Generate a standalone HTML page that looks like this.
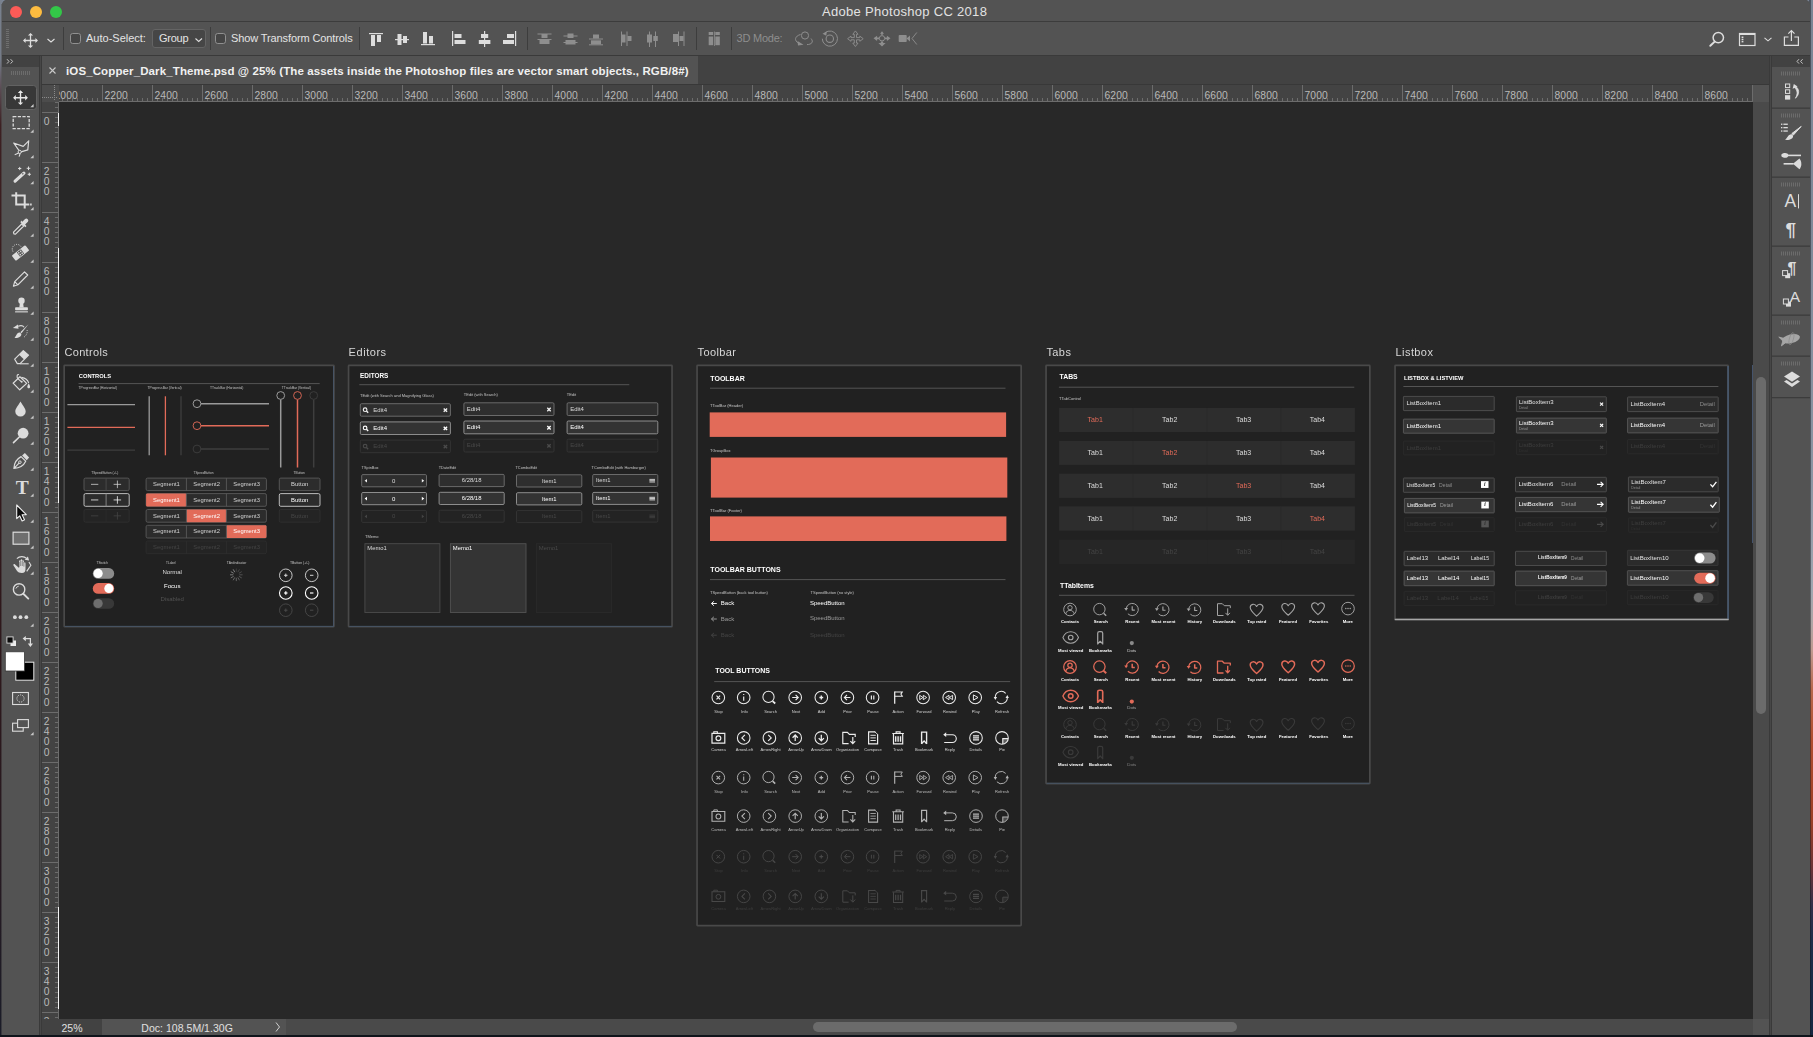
<!DOCTYPE html><html><head><meta charset="utf-8"><title>Adobe Photoshop CC 2018</title><style>
*{box-sizing:border-box;margin:0;padding:0}
html,body{width:1813px;height:1037px;overflow:hidden;background:#16202e;font-family:"Liberation Sans",sans-serif;}
.a{position:absolute}
#desk{position:absolute;left:0;top:0;width:1813px;height:1037px;
 background:linear-gradient(to bottom,#7a8494 0,#808a99 250px,#8c95a3 480px,#a0a6b0 590px,#b0a4a4 625px,#c09a90 650px,#b8684c 690px,#b04e30 740px,#9c4028 820px,#6a3438 870px,#33304a 905px,#1e2e4a 940px,#172842 1037px);}
#deskr{position:absolute;left:1809px;top:0;width:2px;height:1037px;background:rgba(20,24,32,0.45)}
#deskb{position:absolute;left:0;top:1035px;width:1813px;height:2px;background:#0f141b}
#deskl{position:absolute;left:0;top:0;width:2px;height:1035px;
 background:linear-gradient(to bottom,#79818e 0,#747b88 60px,#5a4a52 90px,#3c2022 125px,#34191b 400px,#2c181c 700px,#241a22 900px,#1a1c28 1035px);}
#desklb{position:absolute;left:1px;top:4px;width:1px;height:1031px;background:rgba(83,83,83,0.55)}
#win{position:absolute;left:2px;top:0;width:1807.5px;height:1035px;background:#535353;border-radius:5px 5px 0 0;overflow:hidden}
#win .in{position:absolute;left:-2px;top:0;width:1813px;height:1037px}
.t{position:absolute;white-space:nowrap;line-height:1}
svg{position:absolute;overflow:visible}
</style></head><body>
<div id="desk"></div><div id="deskr"></div><div id="deskb"></div><div id="deskl"></div><div id="desklb"></div><div id="win"><div class="in">
<div class="a" style="left:0px;top:0px;width:1813px;height:21px;background:#535353;"></div>
<div class="a" style="left:0px;top:21px;width:1813px;height:1px;background:#3c3c3c;"></div>
<div class="a" style="left:10px;top:6px;width:12px;height:12px;background:#fc5b57;border-radius:50%"></div>
<div class="a" style="left:30px;top:6px;width:12px;height:12px;background:#fdbc40;border-radius:50%"></div>
<div class="a" style="left:50px;top:6px;width:12px;height:12px;background:#33c748;border-radius:50%"></div>
<div class="t" style="left:822px;top:4.5px;font-size:13px;color:#e2e2e2;letter-spacing:0.3px">Adobe Photoshop CC 2018</div>
<div class="a" style="left:0px;top:22px;width:1813px;height:33px;background:#535353;"></div>
<div class="a" style="left:0px;top:55px;width:1813px;height:1px;background:#3a3a3a;"></div>
<svg style="left:0;top:0" width="1813" height="56" viewBox="0 0 1813 56"><rect x="6" y="29" width="3" height="1" fill="#6e6e6e"/><rect x="6" y="31" width="3" height="1" fill="#6e6e6e"/><rect x="6" y="33" width="3" height="1" fill="#6e6e6e"/><rect x="6" y="35" width="3" height="1" fill="#6e6e6e"/><rect x="6" y="37" width="3" height="1" fill="#6e6e6e"/><rect x="6" y="39" width="3" height="1" fill="#6e6e6e"/><rect x="6" y="41" width="3" height="1" fill="#6e6e6e"/><rect x="6" y="43" width="3" height="1" fill="#6e6e6e"/><rect x="6" y="45" width="3" height="1" fill="#6e6e6e"/><rect x="6" y="47" width="3" height="1" fill="#6e6e6e"/><path d="M24.0 40.5H37.0M30.5 34.0V47.0" stroke="#dddddd" stroke-width="1.3" fill="none"/><path d="M38.0 40.5L35.4 37.9L35.4 43.1ZM23.0 40.5L25.6 37.9L25.6 43.1ZM30.5 48.0L27.9 45.4L33.1 45.4ZM30.5 33.0L27.9 35.6L33.1 35.6Z" fill="#dddddd"/><path d="M47.5 39 L51 42 L54.5 39" stroke="#dddddd" stroke-width="1.1" fill="none"/><rect x="63" y="27" width="1" height="23" fill="#3d3d3d"/><rect x="210" y="27" width="1" height="23" fill="#3d3d3d"/><rect x="359" y="27" width="1" height="23" fill="#3d3d3d"/><rect x="527" y="27" width="1" height="23" fill="#3d3d3d"/><rect x="696" y="27" width="1" height="23" fill="#3d3d3d"/><rect x="731" y="27" width="1" height="23" fill="#3d3d3d"/><rect x="70.5" y="33.5" width="10" height="10" rx="2.2" fill="#454545" stroke="#909090" stroke-width="1"/><rect x="215.5" y="33.5" width="10" height="10" rx="2.2" fill="#454545" stroke="#909090" stroke-width="1"/><rect x="152.5" y="29.5" width="53" height="18" rx="2.5" fill="#464646" stroke="#646464" stroke-width="1"/><path d="M195.5 38.5 L198.7 41.5 L202 38.5" stroke="#dddddd" stroke-width="1.1" fill="none"/><rect x="369" y="33" width="14" height="1.2" fill="#dddddd"/><rect x="371" y="35" width="4" height="11" fill="#dddddd"/><rect x="377" y="35" width="4" height="7" fill="#dddddd"/><rect x="395" y="39" width="14" height="1.2" fill="#dddddd"/><rect x="397.5" y="34" width="4" height="11" fill="#dddddd"/><rect x="403" y="36" width="4" height="7" fill="#dddddd"/><rect x="421" y="44" width="14" height="1.2" fill="#dddddd"/><rect x="423" y="32" width="4" height="11.5" fill="#dddddd"/><rect x="429" y="36" width="4" height="7.5" fill="#dddddd"/><rect x="452" y="31" width="1.2" height="15" fill="#dddddd"/><rect x="454.5" y="34" width="7" height="4" fill="#dddddd"/><rect x="454.5" y="40" width="11" height="4" fill="#dddddd"/><rect x="484" y="31" width="1.2" height="16" fill="#dddddd"/><rect x="481" y="34" width="7.2" height="4" fill="#dddddd"/><rect x="478.8" y="40" width="11.6" height="4" fill="#dddddd"/><rect x="515" y="31" width="1.2" height="15" fill="#dddddd"/><rect x="507" y="34" width="7" height="4" fill="#dddddd"/><rect x="503" y="40" width="11" height="4" fill="#dddddd"/><rect x="537.5" y="33.5" width="14" height="1" fill="#8e8e8e"/><rect x="537.5" y="39" width="14" height="1" fill="#8e8e8e"/><rect x="541.5" y="34" width="6" height="4" fill="#8e8e8e"/><rect x="539.5" y="40" width="10" height="4" fill="#8e8e8e"/><rect x="563.5" y="35.5" width="14" height="1" fill="#8e8e8e"/><rect x="563.5" y="42" width="14" height="1" fill="#8e8e8e"/><rect x="567.5" y="33.5" width="6" height="4.5" fill="#8e8e8e"/><rect x="565.5" y="40" width="10" height="4.5" fill="#8e8e8e"/><rect x="589" y="38.5" width="14" height="1" fill="#8e8e8e"/><rect x="589" y="44.3" width="14" height="1" fill="#8e8e8e"/><rect x="593" y="34.5" width="6" height="4" fill="#8e8e8e"/><rect x="591" y="40.3" width="10" height="4" fill="#8e8e8e"/><rect x="621" y="31.5" width="1" height="14.5" fill="#8e8e8e"/><rect x="626.5" y="31.5" width="1" height="14.5" fill="#8e8e8e"/><rect x="621.5" y="34.5" width="4" height="8" fill="#8e8e8e"/><rect x="627.5" y="36" width="4" height="5" fill="#8e8e8e"/><rect x="649" y="31.5" width="1" height="15.5" fill="#8e8e8e"/><rect x="655" y="31.5" width="1" height="15.5" fill="#8e8e8e"/><rect x="647" y="34.5" width="5" height="8" fill="#8e8e8e"/><rect x="653.3" y="36" width="4.5" height="5" fill="#8e8e8e"/><rect x="678" y="31.5" width="1" height="14.5" fill="#8e8e8e"/><rect x="683.5" y="31.5" width="1" height="14.5" fill="#8e8e8e"/><rect x="673" y="34" width="5" height="8" fill="#8e8e8e"/><rect x="679.5" y="36" width="4" height="5" fill="#8e8e8e"/><rect x="708.7" y="32" width="4.5" height="3" fill="#8e8e8e"/><rect x="715.3" y="32" width="4.5" height="3" fill="#8e8e8e"/><rect x="708.7" y="36.5" width="4.5" height="8.7" fill="#8e8e8e"/><rect x="715.3" y="36.5" width="4.5" height="8.7" fill="#8e8e8e"/><rect x="714" y="31.5" width="0.8" height="14.5" fill="#8e8e8e"/><circle cx="805" cy="35.5" r="3.6" fill="none" stroke="#8e8e8e" stroke-width="1"/><path d="M800.5 34.5 C795 36 793.5 40.5 799 43.5 M807 44.6 C811.5 44.5 814 42 811 38.5" fill="none" stroke="#8e8e8e" stroke-width="1"/><path d="M797.5 41 L803.5 44.8 L798 45.5Z" fill="#8e8e8e"/><circle cx="829.8" cy="38.7" r="3.7" fill="none" stroke="#8e8e8e" stroke-width="1.1"/><path d="M825 32.8 A7.6 7.6 0 1 1 822.3 38.7" fill="none" stroke="#8e8e8e" stroke-width="1"/><path d="M822.5 33.8 L826.8 31.3 L826.3 35.8Z" fill="#8e8e8e"/><path d="M856.5 37.6L856.5 34.3L858.0 34.3L855.4 30.9L852.8 34.3L854.3 34.3L854.3 37.6L851.0 37.6L851.0 36.1L847.6 38.7L851.0 41.3L851.0 39.8L854.3 39.8L854.3 43.1L852.8 43.1L855.4 46.5L858.0 43.1L856.5 43.1L856.5 39.8L859.8 39.8L859.8 41.3L863.2 38.7L859.8 36.1L859.8 37.6Z" fill="none" stroke="#8e8e8e" stroke-width="0.9"/><circle cx="882" cy="38.3" r="2.7" fill="none" stroke="#8e8e8e" stroke-width="1"/><path d="M873.5 38.3 l3.6 -2.6 v1.7 h2 v1.8 h-2 v1.7Z M890.5 38.3 l-3.6 -2.6 v1.7 h-2 v1.8 h2 v1.7Z M882 31.2 l2 2.6 h-1.3 v1.2 h-1.4 v-1.2 h-1.3Z M882 46.5 l3.6 -3.4 h-2.4 v-1.6 h-2.4 v1.6 h-2.4Z" fill="#8e8e8e"/><rect x="898.7" y="35" width="8" height="7" rx="0.8" fill="#8e8e8e"/><path d="M906.5 38.5 L910 35.6 V41.4Z" fill="#8e8e8e"/><path d="M916.8 32.5 L912 38.5 L916.8 44.5" fill="none" stroke="#8e8e8e" stroke-width="0.9"/><circle cx="1718.3" cy="37.6" r="5.2" fill="none" stroke="#dddddd" stroke-width="1.5"/><path d="M1714.7 41.6 L1710.3 45.8" stroke="#dddddd" stroke-width="2" stroke-linecap="round"/><rect x="1739.5" y="33.5" width="15.5" height="12" fill="none" stroke="#dddddd" stroke-width="1.2"/><rect x="1739.5" y="33" width="15.5" height="2" fill="#dddddd"/><rect x="1741.6" y="36.5" width="1.8" height="1.5" fill="#dddddd"/><rect x="1741.6" y="38.7" width="1.8" height="1.5" fill="#dddddd"/><rect x="1741.6" y="40.9" width="1.8" height="1.5" fill="#dddddd"/><path d="M1764.5 37.8 L1768 40.8 L1771.5 37.8" stroke="#dddddd" stroke-width="1.1" fill="none"/><path d="M1788.5 37 H1784.4 V45.3 H1798.4 V37 H1794.3" fill="none" stroke="#dddddd" stroke-width="1.2"/><path d="M1791.4 41 V31 M1788.3 33.6 L1791.4 30.6 L1794.5 33.6" fill="none" stroke="#dddddd" stroke-width="1.2"/></svg>
<div class="t" style="left:86px;top:33px;font-size:11px;color:#e4e4e4;letter-spacing:0px">Auto-Select:</div>
<div class="t" style="left:159px;top:33px;font-size:11px;color:#e4e4e4;letter-spacing:-0.25px">Group</div>
<div class="t" style="left:231px;top:33px;font-size:11px;color:#e4e4e4;letter-spacing:-0.11px">Show Transform Controls</div>
<div class="t" style="left:736.5px;top:33px;font-size:11px;color:#8e8e8e;letter-spacing:-0.22px">3D Mode:</div>
<div class="a" style="left:0px;top:56px;width:1813px;height:29px;background:#424242;"></div>
<div class="a" style="left:42px;top:56px;width:656px;height:28px;background:#535353;"></div>
<div class="a" style="left:0px;top:84px;width:1813px;height:1px;background:#383838;"></div>
<div class="t" style="left:66px;top:66px;font-size:11.5px;color:#f0f0f0;font-weight:bold;letter-spacing:0.12px">iOS_Copper_Dark_Theme.psd @ 25% (The assets inside the Photoshop files are vector smart objects., RGB/8#)</div>
<svg style="left:48px;top:66px" width="9" height="9" viewBox="0 0 9 9"><path d="M1.5 1.5 L7.5 7.5 M7.5 1.5 L1.5 7.5" stroke="#c8c8c8" stroke-width="1.1" fill="none"/></svg>
<div class="a" style="left:42px;top:85px;width:1711px;height:934px;background:#282828;"></div>
<svg style="left:0;top:0" width="1813" height="1037" viewBox="0 0 1813 1037"><rect x="64.15" y="365.35" width="269.80" height="261.40" fill="#212121" stroke="#494949" stroke-width="1.7" rx="0.6"/><path d="M64.80 626.35L333.60 626.35" stroke="#46566a" stroke-width="0.9" fill="none"/><path d="M333.55 366.00L333.55 626.60" stroke="#46566a" stroke-width="0.9" fill="none"/><rect x="348.55" y="365.35" width="323.50" height="261.40" fill="#212121" stroke="#494949" stroke-width="1.7" rx="0.6"/><path d="M349.20 626.35L671.70 626.35" stroke="#46566a" stroke-width="0.9" fill="none"/><rect x="697.05" y="365.35" width="324.10" height="560.30" fill="#212121" stroke="#494949" stroke-width="1.7" rx="0.6"/><rect x="1046.05" y="365.35" width="323.80" height="418.30" fill="#212121" stroke="#494949" stroke-width="1.7" rx="0.6"/><path d="M1046.70 783.25L1369.50 783.25" stroke="#46566a" stroke-width="0.9" fill="none"/><rect x="1395.05" y="365.35" width="333.10" height="254.00" fill="#212121" stroke="#494949" stroke-width="1.7" rx="0.6"/><path d="M1728.10 366.00L1728.10 619.20" stroke="#46566a" stroke-width="1.8" fill="none"/><path d="M1394.70 619.50L1728.70 619.50" stroke="#a6a6a6" stroke-width="1.3" fill="none"/><path d="M78.50 383.60L319.70 383.60" stroke="#5a5a5a" stroke-width="0.9" fill="none"/><path d="M67.40 404.60L135.00 404.60" stroke="#9a9a9a" stroke-width="1.3" fill="none"/><path d="M67.40 427.40L135.00 427.40" stroke="#e26b59" stroke-width="1.3" fill="none"/><path d="M67.40 450.10L135.00 450.10" stroke="#3e3e3e" stroke-width="1.3" fill="none"/><path d="M149.20 396.30L149.20 455.30" stroke="#9a9a9a" stroke-width="1.3" fill="none"/><path d="M165.40 396.30L165.40 455.30" stroke="#e26b59" stroke-width="1.3" fill="none"/><path d="M181.00 396.30L181.00 455.30" stroke="#3e3e3e" stroke-width="1.3" fill="none"/><path d="M201.00 403.70L269.00 403.70" stroke="#9a9a9a" stroke-width="1.5" fill="none"/><circle cx="197.00" cy="403.70" r="3.9" fill="#212121" stroke="#a8a8a8" stroke-width="0.9"/><path d="M201.00 425.70L269.00 425.70" stroke="#e26b59" stroke-width="1.5" fill="none"/><circle cx="197.00" cy="425.70" r="3.9" fill="#212121" stroke="#e26b59" stroke-width="0.9"/><path d="M201.00 449.00L269.00 449.00" stroke="#3e3e3e" stroke-width="1.5" fill="none"/><circle cx="197.00" cy="449.00" r="3.9" fill="#212121" stroke="#3e3e3e" stroke-width="0.9"/><path d="M280.70 399.50L280.70 467.50" stroke="#9a9a9a" stroke-width="1.5" fill="none"/><circle cx="280.70" cy="395.50" r="3.9" fill="#212121" stroke="#a8a8a8" stroke-width="0.9"/><path d="M297.50 399.50L297.50 467.50" stroke="#e26b59" stroke-width="1.5" fill="none"/><circle cx="297.50" cy="395.50" r="3.9" fill="#212121" stroke="#e26b59" stroke-width="0.9"/><path d="M313.70 399.50L313.70 467.50" stroke="#3e3e3e" stroke-width="1.5" fill="none"/><circle cx="313.70" cy="395.50" r="3.9" fill="#212121" stroke="#3e3e3e" stroke-width="0.9"/><rect x="84.00" y="478.10" width="45.20" height="12.50" fill="#2c2c2c" stroke="#5a5a5a" stroke-width="0.9" rx="1.5"/><path d="M106.10 478.10L106.10 490.60" stroke="#4c4c4c" stroke-width="0.9" fill="none"/><path d="M91.00 484.35L98.30 484.35" stroke="#d8d8d8" stroke-width="0.75" fill="none"/><path d="M113.60 484.35L121.10 484.35" stroke="#d8d8d8" stroke-width="0.75" fill="none"/><path d="M117.40 480.55L117.40 488.15" stroke="#d8d8d8" stroke-width="0.75" fill="none"/><rect x="84.00" y="493.60" width="45.20" height="12.70" fill="#2c2c2c" stroke="#cccccc" stroke-width="0.9" rx="1.5"/><path d="M106.10 493.60L106.10 506.30" stroke="#8a8a8a" stroke-width="0.9" fill="none"/><path d="M91.00 499.95L98.30 499.95" stroke="#ffffff" stroke-width="0.75" fill="none"/><path d="M113.60 499.95L121.10 499.95" stroke="#ffffff" stroke-width="0.75" fill="none"/><path d="M117.40 496.15L117.40 503.75" stroke="#ffffff" stroke-width="0.75" fill="none"/><rect x="84.00" y="509.50" width="45.20" height="12.70" fill="#242424" stroke="#303030" stroke-width="0.9" rx="1.5"/><path d="M106.10 509.50L106.10 522.20" stroke="#2c2c2c" stroke-width="0.9" fill="none"/><path d="M91.00 515.85L98.30 515.85" stroke="#464646" stroke-width="0.75" fill="none"/><path d="M113.60 515.85L121.10 515.85" stroke="#464646" stroke-width="0.75" fill="none"/><path d="M117.40 512.05L117.40 519.65" stroke="#464646" stroke-width="0.75" fill="none"/><rect x="146.10" y="478.10" width="120.30" height="12.50" fill="#2c2c2c" stroke="#5a5a5a" stroke-width="0.9" rx="1.5"/><path d="M186.40 478.10L186.40 490.60" stroke="#5a5a5a" stroke-width="0.9" fill="none"/><path d="M226.40 478.10L226.40 490.60" stroke="#5a5a5a" stroke-width="0.9" fill="none"/><rect x="146.10" y="493.60" width="120.30" height="12.70" fill="#2c2c2c" stroke="#5a5a5a" stroke-width="0.9" rx="1.5"/><rect x="146.10" y="493.50" width="40.30" height="12.90" fill="#e26b59" rx="1"/><path d="M186.40 493.60L186.40 506.30" stroke="#5a5a5a" stroke-width="0.9" fill="none"/><path d="M226.40 493.60L226.40 506.30" stroke="#5a5a5a" stroke-width="0.9" fill="none"/><rect x="146.10" y="509.50" width="120.30" height="12.70" fill="#2c2c2c" stroke="#5a5a5a" stroke-width="0.9" rx="1.5"/><rect x="186.40" y="509.40" width="40.00" height="12.90" fill="#e26b59" rx="1"/><path d="M186.40 509.50L186.40 522.20" stroke="#5a5a5a" stroke-width="0.9" fill="none"/><path d="M226.40 509.50L226.40 522.20" stroke="#5a5a5a" stroke-width="0.9" fill="none"/><rect x="146.10" y="525.30" width="120.30" height="12.70" fill="#2c2c2c" stroke="#5a5a5a" stroke-width="0.9" rx="1.5"/><rect x="226.40" y="525.20" width="40.00" height="12.90" fill="#e26b59" rx="1"/><path d="M186.40 525.30L186.40 538.00" stroke="#5a5a5a" stroke-width="0.9" fill="none"/><path d="M226.40 525.30L226.40 538.00" stroke="#5a5a5a" stroke-width="0.9" fill="none"/><rect x="146.10" y="541.00" width="120.30" height="12.70" fill="#242424" stroke="#2e2e2e" stroke-width="0.9" rx="1.5"/><path d="M186.40 541.00L186.40 553.70" stroke="#2e2e2e" stroke-width="0.9" fill="none"/><path d="M226.40 541.00L226.40 553.70" stroke="#2e2e2e" stroke-width="0.9" fill="none"/><rect x="279.30" y="478.10" width="40.70" height="12.50" fill="#2c2c2c" stroke="#5a5a5a" stroke-width="0.9" rx="1.5"/><rect x="279.30" y="493.60" width="40.70" height="12.70" fill="#2c2c2c" stroke="#cccccc" stroke-width="0.9" rx="1.5"/><rect x="279.30" y="509.50" width="40.70" height="12.70" fill="#242424" stroke="#303030" stroke-width="0.9" rx="1.5"/><rect x="92.80" y="568.10" width="21.40" height="10.60" fill="#8c8c8c" rx="5.3"/><circle cx="98.10" cy="573.40" r="4.6" fill="#ffffff"/><rect x="92.80" y="583.10" width="21.40" height="10.60" fill="#e26b59" rx="5.3"/><circle cx="108.90" cy="588.40" r="4.6" fill="#ffffff"/><rect x="92.80" y="598.20" width="21.40" height="10.60" fill="#383838" rx="5.3"/><circle cx="98.10" cy="603.50" r="4.6" fill="#6e6e6e"/><path d="M236.30 571.80L236.30 568.50" stroke="#b0b0b0" stroke-width="0.8" opacity="0.25"/><path d="M237.80 572.20L239.45 569.34" stroke="#b0b0b0" stroke-width="0.8" opacity="0.30"/><path d="M238.90 573.30L241.76 571.65" stroke="#b0b0b0" stroke-width="0.8" opacity="0.36"/><path d="M239.30 574.80L242.60 574.80" stroke="#b0b0b0" stroke-width="0.8" opacity="0.41"/><path d="M238.90 576.30L241.76 577.95" stroke="#b0b0b0" stroke-width="0.8" opacity="0.47"/><path d="M237.80 577.40L239.45 580.26" stroke="#b0b0b0" stroke-width="0.8" opacity="0.52"/><path d="M236.30 577.80L236.30 581.10" stroke="#b0b0b0" stroke-width="0.8" opacity="0.58"/><path d="M234.80 577.40L233.15 580.26" stroke="#b0b0b0" stroke-width="0.8" opacity="0.63"/><path d="M233.70 576.30L230.84 577.95" stroke="#b0b0b0" stroke-width="0.8" opacity="0.69"/><path d="M233.30 574.80L230.00 574.80" stroke="#b0b0b0" stroke-width="0.8" opacity="0.74"/><path d="M233.70 573.30L230.84 571.65" stroke="#b0b0b0" stroke-width="0.8" opacity="0.80"/><path d="M234.80 572.20L233.15 569.34" stroke="#b0b0b0" stroke-width="0.8" opacity="0.85"/><circle cx="285.80" cy="575.30" r="6.3" fill="none" stroke="#d8d8d8" stroke-width="0.9"/><path d="M284.10 575.30L287.50 575.30" stroke="#d8d8d8" stroke-width="1.0" fill="none"/><path d="M285.80 573.60L285.80 577.00" stroke="#d8d8d8" stroke-width="1.0" fill="none"/><circle cx="311.70" cy="575.30" r="6.3" fill="none" stroke="#d8d8d8" stroke-width="0.9"/><path d="M310.00 575.30L313.40 575.30" stroke="#d8d8d8" stroke-width="1.0" fill="none"/><circle cx="285.80" cy="593.00" r="6.3" fill="none" stroke="#ffffff" stroke-width="1.1"/><path d="M284.10 593.00L287.50 593.00" stroke="#ffffff" stroke-width="1.2" fill="none"/><path d="M285.80 591.30L285.80 594.70" stroke="#ffffff" stroke-width="1.2" fill="none"/><circle cx="311.70" cy="593.00" r="6.3" fill="none" stroke="#ffffff" stroke-width="1.1"/><path d="M310.00 593.00L313.40 593.00" stroke="#ffffff" stroke-width="1.2" fill="none"/><circle cx="285.80" cy="610.20" r="6.3" fill="none" stroke="#4a4a4a" stroke-width="0.9"/><path d="M284.10 610.20L287.50 610.20" stroke="#4a4a4a" stroke-width="1.0" fill="none"/><path d="M285.80 608.50L285.80 611.90" stroke="#4a4a4a" stroke-width="1.0" fill="none"/><circle cx="311.70" cy="610.20" r="6.3" fill="none" stroke="#4a4a4a" stroke-width="0.9"/><path d="M310.00 610.20L313.40 610.20" stroke="#4a4a4a" stroke-width="1.0" fill="none"/><path d="M359.30 384.70L629.30 384.70" stroke="#5a5a5a" stroke-width="0.9" fill="none"/><rect x="360.30" y="403.70" width="90.10" height="12.50" fill="#2e2e2e" stroke="#727272" stroke-width="0.9" rx="1.2"/><circle cx="365.10" cy="409.65" r="1.8" fill="none" stroke="#f0f0f0" stroke-width="1.15"/><path d="M366.50 411.05L368.20 412.75" stroke="#f0f0f0" stroke-width="1.4" fill="none"/><path d="M443.70 408.45L447.10 411.85M447.10 408.45L443.70 411.85" fill="none" stroke="#f0f0f0" stroke-width="1.35" /><rect x="463.90" y="402.80" width="90.10" height="12.70" fill="#2e2e2e" stroke="#727272" stroke-width="0.9" rx="1.2"/><path d="M547.30 407.75L550.70 411.15M550.70 407.75L547.30 411.15" fill="none" stroke="#f0f0f0" stroke-width="1.35" /><rect x="567.10" y="402.80" width="90.70" height="12.70" fill="#2e2e2e" stroke="#727272" stroke-width="0.9" rx="1.2"/><rect x="360.30" y="421.90" width="90.10" height="12.60" fill="#333333" stroke="#989898" stroke-width="0.9" rx="1.2"/><circle cx="365.10" cy="427.90" r="1.8" fill="none" stroke="#ffffff" stroke-width="1.15"/><path d="M366.50 429.30L368.20 431.00" stroke="#ffffff" stroke-width="1.4" fill="none"/><path d="M443.70 426.70L447.10 430.10M447.10 426.70L443.70 430.10" fill="none" stroke="#ffffff" stroke-width="1.35" /><rect x="463.90" y="421.00" width="90.10" height="12.80" fill="#333333" stroke="#989898" stroke-width="0.9" rx="1.2"/><path d="M547.30 426.00L550.70 429.40M550.70 426.00L547.30 429.40" fill="none" stroke="#ffffff" stroke-width="1.35" /><rect x="567.10" y="421.00" width="90.70" height="12.80" fill="#333333" stroke="#989898" stroke-width="0.9" rx="1.2"/><rect x="360.30" y="440.10" width="90.10" height="12.60" fill="#232323" stroke="#363636" stroke-width="0.9" rx="1.2"/><circle cx="365.10" cy="446.10" r="1.8" fill="none" stroke="#4a4a4a" stroke-width="1.15"/><path d="M366.50 447.50L368.20 449.20" stroke="#4a4a4a" stroke-width="1.4" fill="none"/><path d="M443.70 444.90L447.10 448.30M447.10 444.90L443.70 448.30" fill="none" stroke="#4a4a4a" stroke-width="1.35" /><rect x="463.90" y="439.20" width="90.10" height="12.80" fill="#232323" stroke="#363636" stroke-width="0.9" rx="1.2"/><path d="M547.30 444.20L550.70 447.60M550.70 444.20L547.30 447.60" fill="none" stroke="#4a4a4a" stroke-width="1.35" /><rect x="567.10" y="439.20" width="90.70" height="12.80" fill="#232323" stroke="#363636" stroke-width="0.9" rx="1.2"/><rect x="361.70" y="474.60" width="64.80" height="12.20" fill="#2e2e2e" stroke="#727272" stroke-width="0.9" rx="1.2"/><path d="M364.60 480.70L367.00 478.90V482.50Z" fill="#f0f0f0" /><path d="M424.20 480.70L421.80 478.90V482.50Z" fill="#f0f0f0" /><rect x="439.10" y="474.40" width="65.10" height="12.20" fill="#2e2e2e" stroke="#727272" stroke-width="0.9" rx="1.2"/><rect x="516.50" y="474.80" width="65.30" height="12.20" fill="#2e2e2e" stroke="#727272" stroke-width="0.9" rx="1.2"/><rect x="592.70" y="474.50" width="65.10" height="12.00" fill="#2e2e2e" stroke="#727272" stroke-width="0.9" rx="1.2"/><path d="M649.40 479.40L655.00 479.40" stroke="#f0f0f0" stroke-width="0.8" fill="none"/><path d="M649.40 480.70L655.00 480.70" stroke="#f0f0f0" stroke-width="0.8" fill="none"/><path d="M649.40 482.00L655.00 482.00" stroke="#f0f0f0" stroke-width="0.8" fill="none"/><rect x="361.70" y="492.50" width="64.80" height="12.20" fill="#333333" stroke="#989898" stroke-width="0.9" rx="1.2"/><path d="M364.60 498.60L367.00 496.80V500.40Z" fill="#ffffff" /><path d="M424.20 498.60L421.80 496.80V500.40Z" fill="#ffffff" /><rect x="439.10" y="492.30" width="65.10" height="12.20" fill="#333333" stroke="#989898" stroke-width="0.9" rx="1.2"/><rect x="516.50" y="492.70" width="65.30" height="12.20" fill="#333333" stroke="#989898" stroke-width="0.9" rx="1.2"/><rect x="592.70" y="492.40" width="65.10" height="12.00" fill="#333333" stroke="#989898" stroke-width="0.9" rx="1.2"/><path d="M649.40 497.30L655.00 497.30" stroke="#ffffff" stroke-width="0.8" fill="none"/><path d="M649.40 498.60L655.00 498.60" stroke="#ffffff" stroke-width="0.8" fill="none"/><path d="M649.40 499.90L655.00 499.90" stroke="#ffffff" stroke-width="0.8" fill="none"/><rect x="361.70" y="510.40" width="64.80" height="12.00" fill="#232323" stroke="#363636" stroke-width="0.9" rx="1.2"/><path d="M364.60 516.40L367.00 514.60V518.20Z" fill="#444444" /><path d="M424.20 516.40L421.80 514.60V518.20Z" fill="#444444" /><rect x="439.10" y="510.20" width="65.10" height="12.00" fill="#232323" stroke="#363636" stroke-width="0.9" rx="1.2"/><rect x="516.50" y="510.60" width="65.30" height="12.00" fill="#232323" stroke="#363636" stroke-width="0.9" rx="1.2"/><rect x="592.70" y="510.30" width="65.10" height="11.80" fill="#232323" stroke="#363636" stroke-width="0.9" rx="1.2"/><path d="M649.40 515.10L655.00 515.10" stroke="#444444" stroke-width="0.8" fill="none"/><path d="M649.40 516.40L655.00 516.40" stroke="#444444" stroke-width="0.8" fill="none"/><path d="M649.40 517.70L655.00 517.70" stroke="#444444" stroke-width="0.8" fill="none"/><rect x="364.90" y="543.70" width="75.00" height="68.80" fill="#2b2b2b" stroke="#4c4c4c" stroke-width="0.9"/><rect x="450.40" y="543.70" width="75.60" height="68.80" fill="#343434" stroke="#525252" stroke-width="0.9"/><rect x="536.40" y="543.70" width="75.00" height="68.80" fill="#232323" stroke="#2a2a2a" stroke-width="0.9"/><path d="M710.00 388.20L1005.50 388.20" stroke="#5a5a5a" stroke-width="0.9" fill="none"/><rect x="709.70" y="412.40" width="296.40" height="24.50" fill="#e26b59"/><rect x="710.90" y="457.50" width="296.40" height="40.10" fill="#e26b59"/><rect x="710.00" y="516.40" width="296.40" height="24.60" fill="#e26b59"/><path d="M710.00 579.60L1005.50 579.60" stroke="#5a5a5a" stroke-width="0.9" fill="none"/><path d="M716.8 603.50H711.6M713.9 601.30L711.4 603.50L713.9 605.70" fill="none" stroke="#ffffff" stroke-width="0.95" /><path d="M716.8 619.00H711.6M713.9 616.80L711.4 619.00L713.9 621.20" fill="none" stroke="#9a9a9a" stroke-width="0.95" /><path d="M716.8 635.20H711.6M713.9 633.00L711.4 635.20L713.9 637.40" fill="none" stroke="#444444" stroke-width="0.95" /><path d="M714.20 681.60L1010.20 681.60" stroke="#5a5a5a" stroke-width="0.9" fill="none"/><circle cx="718.30" cy="697.50" r="6.3" fill="none" stroke="#ececec" stroke-width="1.05"/><path d="M-1.8 -1.8L1.8 1.8M1.8 -1.8L-1.8 1.8" fill="none" stroke="#ececec" stroke-width="1.1550000000000002" transform="translate(718.30,697.50)"/><circle cx="743.70" cy="697.50" r="6.3" fill="none" stroke="#ececec" stroke-width="1.05"/><path d="M0 -1V3.2" fill="none" stroke="#ececec" stroke-width="1.1550000000000002" transform="translate(743.70,697.50)"/><path d="M0 -3.4V-2.4" fill="none" stroke="#ececec" stroke-width="1.1550000000000002" transform="translate(743.70,697.50)"/><circle cx="768.50" cy="696.90" r="5.6" fill="none" stroke="#ececec" stroke-width="1.05"/><path d="M3.2 3.6L5.8 6" fill="none" stroke="#ececec" stroke-width="1.785" transform="translate(769.40,697.50)"/><circle cx="795.20" cy="697.50" r="6.3" fill="none" stroke="#ececec" stroke-width="1.05"/><path d="M-3 0H2.8M0.4 -2.6L3 0L0.4 2.6" fill="none" stroke="#ececec" stroke-width="1.1550000000000002" transform="translate(795.20,697.50)"/><circle cx="821.30" cy="697.50" r="6.3" fill="none" stroke="#ececec" stroke-width="1.05"/><path d="M-1.9 0H1.9M0 -1.9V1.9" fill="none" stroke="#ececec" stroke-width="1.3650000000000002" transform="translate(821.30,697.50)"/><circle cx="847.40" cy="697.50" r="6.3" fill="none" stroke="#ececec" stroke-width="1.05"/><path d="M3 0H-2.8M-0.4 -2.6L-3 0L-0.4 2.6" fill="none" stroke="#ececec" stroke-width="1.1550000000000002" transform="translate(847.40,697.50)"/><circle cx="872.60" cy="697.50" r="6.3" fill="none" stroke="#ececec" stroke-width="1.05"/><path d="M-1.2 -1.9V1.9M1.2 -1.9V1.9" fill="none" stroke="#ececec" stroke-width="1.1550000000000002" transform="translate(872.60,697.50)"/><path d="M-3.4 -6V6.2" fill="none" stroke="#ececec" stroke-width="1.26" transform="translate(898.10,697.50)"/><path d="M-3.4 -5.6H4.2L2.8 -3.4L4.2 -1.2H-3.4" fill="none" stroke="#ececec" stroke-width="1.05" transform="translate(898.10,697.50)"/><circle cx="923.10" cy="697.50" r="6.3" fill="none" stroke="#ececec" stroke-width="1.05"/><path d="M-3.4 -2.2L-0.2 0L-3.4 2.2ZM0.2 -2.2L3.6 0L0.2 2.2Z" fill="none" stroke="#ececec" stroke-width="0.9450000000000001" transform="translate(923.10,697.50)"/><circle cx="949.20" cy="697.50" r="6.3" fill="none" stroke="#ececec" stroke-width="1.05"/><path d="M3.4 -2.2L0.2 0L3.4 2.2ZM-0.2 -2.2L-3.6 0L-0.2 2.2Z" fill="none" stroke="#ececec" stroke-width="0.9450000000000001" transform="translate(949.20,697.50)"/><circle cx="975.20" cy="697.50" r="6.3" fill="none" stroke="#ececec" stroke-width="1.05"/><path d="M-1.8 -2.6L2.8 0L-1.8 2.6Z" fill="none" stroke="#ececec" stroke-width="0.9974999999999999" transform="translate(975.20,697.50)"/><path d="M-6 0.4A6 6 0 0 1 4.4 -4.2M6 -0.4A6 6 0 0 1 -4.4 4.2" fill="none" stroke="#ececec" stroke-width="1.05" transform="translate(1001.30,697.50)"/><path d="M-7.6 -0.6L-6 2.4L-4.2 -0.6ZM7.6 0.6L6 -2.4L4.2 0.6Z" fill="#ececec" transform="translate(1001.30,697.50)"/><path d="M-6.4 -4.6H6.4V5.2H-6.4Z" fill="none" stroke="#ececec" stroke-width="1.2075" transform="translate(718.40,737.90)"/><path d="M-4.6 -4.8V-6.2H-1V-4.8" fill="none" stroke="#ececec" stroke-width="1.05" transform="translate(718.40,737.90)"/><circle cx="718.40" cy="738.30" r="2.4" fill="none" stroke="#ececec" stroke-width="1.1550000000000002"/><circle cx="743.70" cy="737.90" r="6.3" fill="none" stroke="#ececec" stroke-width="1.05"/><path d="M1.2 -3L-1.8 0L1.2 3" fill="none" stroke="#ececec" stroke-width="1.2075" transform="translate(743.70,737.90)"/><circle cx="769.40" cy="737.90" r="6.3" fill="none" stroke="#ececec" stroke-width="1.05"/><path d="M-1.2 -3L1.8 0L-1.2 3" fill="none" stroke="#ececec" stroke-width="1.2075" transform="translate(769.40,737.90)"/><circle cx="795.20" cy="737.90" r="6.3" fill="none" stroke="#ececec" stroke-width="1.05"/><path d="M0 3.2V-2.6M-2.6 -0.2L0 -2.9L2.6 -0.2" fill="none" stroke="#ececec" stroke-width="1.26" transform="translate(795.20,737.90)"/><circle cx="821.30" cy="737.90" r="6.3" fill="none" stroke="#ececec" stroke-width="1.05"/><path d="M0 -3.2V2.6M-2.6 0.2L0 2.9L2.6 0.2" fill="none" stroke="#ececec" stroke-width="1.26" transform="translate(821.30,737.90)"/><path d="M-0.2 5.8H-6V-5.6H-1.4L0.6 -3.6H6.4V-1" fill="none" stroke="#ececec" stroke-width="1.1550000000000002" transform="translate(848.80,737.90)"/><path d="M4 -1V5.4M1.6 3.2L4 5.8L6.4 3.2" fill="none" stroke="#ececec" stroke-width="1.1550000000000002" transform="translate(848.80,737.90)"/><path d="M2.4 -6H-4.4V6H4.6V-3.6" fill="none" stroke="#ececec" stroke-width="1.2075" transform="translate(873.00,737.90)"/><path d="M1.6 -6.2L4.8 -3.4" fill="none" stroke="#ececec" stroke-width="0.8400000000000001" transform="translate(873.00,737.90)"/><path d="M-2.6 -2.6H2.8M-2.6 0H2.8M-2.6 2.6H2.8" fill="none" stroke="#ececec" stroke-width="0.9450000000000001" transform="translate(873.00,737.90)"/><path d="M-5.8 -4.4H5.8M-2 -4.6V-6H2V-4.6" fill="none" stroke="#ececec" stroke-width="1.1550000000000002" transform="translate(898.10,737.90)"/><path d="M-4.6 -4.2V6H4.6V-4.2" fill="none" stroke="#ececec" stroke-width="1.2075" transform="translate(898.10,737.90)"/><path d="M-2.4 -1.6V3.8M0 -1.6V3.8M2.4 -1.6V3.8" fill="none" stroke="#ececec" stroke-width="1.3650000000000002" transform="translate(898.10,737.90)"/><path d="M-2.5 6.2V-5.8H2.5V6.2M-2.5 5.8L0 3L2.5 5.8" fill="none" stroke="#ececec" stroke-width="1.3650000000000002" transform="translate(924.10,737.90)"/><path d="M-4.6 -3.2H2.4A3.9 3.9 0 0 1 2.4 4.6H-5.8" fill="none" stroke="#ececec" stroke-width="1.1025" transform="translate(950.00,737.90)"/><path d="M-6.8 -3.2L-3.8 -5.6V-0.8Z" fill="#ececec" transform="translate(950.00,737.90)"/><circle cx="976.00" cy="737.90" r="6.3" fill="none" stroke="#ececec" stroke-width="1.05"/><path d="M-3 -2H3M-3 0H3M-3 2H3" fill="none" stroke="#ececec" stroke-width="1.3125" transform="translate(976.00,737.90)"/><circle cx="1002.00" cy="737.90" r="6.3" fill="none" stroke="#ececec" stroke-width="1.05"/><path d="M0.8 6.2V0.8H6.2" fill="none" stroke="#ececec" stroke-width="1.1550000000000002" transform="translate(1002.00,737.90)"/><path d="M0.8 0.8H6.2A6.3 6.3 0 0 1 0.8 6.2Z" fill="#ececec" opacity="0.3" transform="translate(1002.00,737.90)"/><circle cx="718.30" cy="777.60" r="6.3" fill="none" stroke="#b4b4b4" stroke-width="0.95"/><path d="M-1.8 -1.8L1.8 1.8M1.8 -1.8L-1.8 1.8" fill="none" stroke="#b4b4b4" stroke-width="1.045" transform="translate(718.30,777.60)"/><circle cx="743.70" cy="777.60" r="6.3" fill="none" stroke="#b4b4b4" stroke-width="0.95"/><path d="M0 -1V3.2" fill="none" stroke="#b4b4b4" stroke-width="1.045" transform="translate(743.70,777.60)"/><path d="M0 -3.4V-2.4" fill="none" stroke="#b4b4b4" stroke-width="1.045" transform="translate(743.70,777.60)"/><circle cx="768.50" cy="777.00" r="5.6" fill="none" stroke="#b4b4b4" stroke-width="0.95"/><path d="M3.2 3.6L5.8 6" fill="none" stroke="#b4b4b4" stroke-width="1.615" transform="translate(769.40,777.60)"/><circle cx="795.20" cy="777.60" r="6.3" fill="none" stroke="#b4b4b4" stroke-width="0.95"/><path d="M-3 0H2.8M0.4 -2.6L3 0L0.4 2.6" fill="none" stroke="#b4b4b4" stroke-width="1.045" transform="translate(795.20,777.60)"/><circle cx="821.30" cy="777.60" r="6.3" fill="none" stroke="#b4b4b4" stroke-width="0.95"/><path d="M-1.9 0H1.9M0 -1.9V1.9" fill="none" stroke="#b4b4b4" stroke-width="1.2349999999999999" transform="translate(821.30,777.60)"/><circle cx="847.40" cy="777.60" r="6.3" fill="none" stroke="#b4b4b4" stroke-width="0.95"/><path d="M3 0H-2.8M-0.4 -2.6L-3 0L-0.4 2.6" fill="none" stroke="#b4b4b4" stroke-width="1.045" transform="translate(847.40,777.60)"/><circle cx="872.60" cy="777.60" r="6.3" fill="none" stroke="#b4b4b4" stroke-width="0.95"/><path d="M-1.2 -1.9V1.9M1.2 -1.9V1.9" fill="none" stroke="#b4b4b4" stroke-width="1.045" transform="translate(872.60,777.60)"/><path d="M-3.4 -6V6.2" fill="none" stroke="#b4b4b4" stroke-width="1.14" transform="translate(898.10,777.60)"/><path d="M-3.4 -5.6H4.2L2.8 -3.4L4.2 -1.2H-3.4" fill="none" stroke="#b4b4b4" stroke-width="0.95" transform="translate(898.10,777.60)"/><circle cx="923.10" cy="777.60" r="6.3" fill="none" stroke="#b4b4b4" stroke-width="0.95"/><path d="M-3.4 -2.2L-0.2 0L-3.4 2.2ZM0.2 -2.2L3.6 0L0.2 2.2Z" fill="none" stroke="#b4b4b4" stroke-width="0.855" transform="translate(923.10,777.60)"/><circle cx="949.20" cy="777.60" r="6.3" fill="none" stroke="#b4b4b4" stroke-width="0.95"/><path d="M3.4 -2.2L0.2 0L3.4 2.2ZM-0.2 -2.2L-3.6 0L-0.2 2.2Z" fill="none" stroke="#b4b4b4" stroke-width="0.855" transform="translate(949.20,777.60)"/><circle cx="975.20" cy="777.60" r="6.3" fill="none" stroke="#b4b4b4" stroke-width="0.95"/><path d="M-1.8 -2.6L2.8 0L-1.8 2.6Z" fill="none" stroke="#b4b4b4" stroke-width="0.9025" transform="translate(975.20,777.60)"/><path d="M-6 0.4A6 6 0 0 1 4.4 -4.2M6 -0.4A6 6 0 0 1 -4.4 4.2" fill="none" stroke="#b4b4b4" stroke-width="0.95" transform="translate(1001.30,777.60)"/><path d="M-7.6 -0.6L-6 2.4L-4.2 -0.6ZM7.6 0.6L6 -2.4L4.2 0.6Z" fill="#b4b4b4" transform="translate(1001.30,777.60)"/><path d="M-6.4 -4.6H6.4V5.2H-6.4Z" fill="none" stroke="#b4b4b4" stroke-width="1.0924999999999998" transform="translate(718.40,816.10)"/><path d="M-4.6 -4.8V-6.2H-1V-4.8" fill="none" stroke="#b4b4b4" stroke-width="0.95" transform="translate(718.40,816.10)"/><circle cx="718.40" cy="816.50" r="2.4" fill="none" stroke="#b4b4b4" stroke-width="1.045"/><circle cx="743.70" cy="816.10" r="6.3" fill="none" stroke="#b4b4b4" stroke-width="0.95"/><path d="M1.2 -3L-1.8 0L1.2 3" fill="none" stroke="#b4b4b4" stroke-width="1.0924999999999998" transform="translate(743.70,816.10)"/><circle cx="769.40" cy="816.10" r="6.3" fill="none" stroke="#b4b4b4" stroke-width="0.95"/><path d="M-1.2 -3L1.8 0L-1.2 3" fill="none" stroke="#b4b4b4" stroke-width="1.0924999999999998" transform="translate(769.40,816.10)"/><circle cx="795.20" cy="816.10" r="6.3" fill="none" stroke="#b4b4b4" stroke-width="0.95"/><path d="M0 3.2V-2.6M-2.6 -0.2L0 -2.9L2.6 -0.2" fill="none" stroke="#b4b4b4" stroke-width="1.14" transform="translate(795.20,816.10)"/><circle cx="821.30" cy="816.10" r="6.3" fill="none" stroke="#b4b4b4" stroke-width="0.95"/><path d="M0 -3.2V2.6M-2.6 0.2L0 2.9L2.6 0.2" fill="none" stroke="#b4b4b4" stroke-width="1.14" transform="translate(821.30,816.10)"/><path d="M-0.2 5.8H-6V-5.6H-1.4L0.6 -3.6H6.4V-1" fill="none" stroke="#b4b4b4" stroke-width="1.045" transform="translate(848.80,816.10)"/><path d="M4 -1V5.4M1.6 3.2L4 5.8L6.4 3.2" fill="none" stroke="#b4b4b4" stroke-width="1.045" transform="translate(848.80,816.10)"/><path d="M2.4 -6H-4.4V6H4.6V-3.6" fill="none" stroke="#b4b4b4" stroke-width="1.0924999999999998" transform="translate(873.00,816.10)"/><path d="M1.6 -6.2L4.8 -3.4" fill="none" stroke="#b4b4b4" stroke-width="0.76" transform="translate(873.00,816.10)"/><path d="M-2.6 -2.6H2.8M-2.6 0H2.8M-2.6 2.6H2.8" fill="none" stroke="#b4b4b4" stroke-width="0.855" transform="translate(873.00,816.10)"/><path d="M-5.8 -4.4H5.8M-2 -4.6V-6H2V-4.6" fill="none" stroke="#b4b4b4" stroke-width="1.045" transform="translate(898.10,816.10)"/><path d="M-4.6 -4.2V6H4.6V-4.2" fill="none" stroke="#b4b4b4" stroke-width="1.0924999999999998" transform="translate(898.10,816.10)"/><path d="M-2.4 -1.6V3.8M0 -1.6V3.8M2.4 -1.6V3.8" fill="none" stroke="#b4b4b4" stroke-width="1.2349999999999999" transform="translate(898.10,816.10)"/><path d="M-2.5 6.2V-5.8H2.5V6.2M-2.5 5.8L0 3L2.5 5.8" fill="none" stroke="#b4b4b4" stroke-width="1.2349999999999999" transform="translate(924.10,816.10)"/><path d="M-4.6 -3.2H2.4A3.9 3.9 0 0 1 2.4 4.6H-5.8" fill="none" stroke="#b4b4b4" stroke-width="0.9974999999999999" transform="translate(950.00,816.10)"/><path d="M-6.8 -3.2L-3.8 -5.6V-0.8Z" fill="#b4b4b4" transform="translate(950.00,816.10)"/><circle cx="976.00" cy="816.10" r="6.3" fill="none" stroke="#b4b4b4" stroke-width="0.95"/><path d="M-3 -2H3M-3 0H3M-3 2H3" fill="none" stroke="#b4b4b4" stroke-width="1.1875" transform="translate(976.00,816.10)"/><circle cx="1002.00" cy="816.10" r="6.3" fill="none" stroke="#b4b4b4" stroke-width="0.95"/><path d="M0.8 6.2V0.8H6.2" fill="none" stroke="#b4b4b4" stroke-width="1.045" transform="translate(1002.00,816.10)"/><path d="M0.8 0.8H6.2A6.3 6.3 0 0 1 0.8 6.2Z" fill="#b4b4b4" opacity="0.3" transform="translate(1002.00,816.10)"/><circle cx="718.30" cy="856.70" r="6.3" fill="none" stroke="#484848" stroke-width="0.9"/><path d="M-1.8 -1.8L1.8 1.8M1.8 -1.8L-1.8 1.8" fill="none" stroke="#484848" stroke-width="0.9900000000000001" transform="translate(718.30,856.70)"/><circle cx="743.70" cy="856.70" r="6.3" fill="none" stroke="#484848" stroke-width="0.9"/><path d="M0 -1V3.2" fill="none" stroke="#484848" stroke-width="0.9900000000000001" transform="translate(743.70,856.70)"/><path d="M0 -3.4V-2.4" fill="none" stroke="#484848" stroke-width="0.9900000000000001" transform="translate(743.70,856.70)"/><circle cx="768.50" cy="856.10" r="5.6" fill="none" stroke="#484848" stroke-width="0.9"/><path d="M3.2 3.6L5.8 6" fill="none" stroke="#484848" stroke-width="1.53" transform="translate(769.40,856.70)"/><circle cx="795.20" cy="856.70" r="6.3" fill="none" stroke="#484848" stroke-width="0.9"/><path d="M-3 0H2.8M0.4 -2.6L3 0L0.4 2.6" fill="none" stroke="#484848" stroke-width="0.9900000000000001" transform="translate(795.20,856.70)"/><circle cx="821.30" cy="856.70" r="6.3" fill="none" stroke="#484848" stroke-width="0.9"/><path d="M-1.9 0H1.9M0 -1.9V1.9" fill="none" stroke="#484848" stroke-width="1.1700000000000002" transform="translate(821.30,856.70)"/><circle cx="847.40" cy="856.70" r="6.3" fill="none" stroke="#484848" stroke-width="0.9"/><path d="M3 0H-2.8M-0.4 -2.6L-3 0L-0.4 2.6" fill="none" stroke="#484848" stroke-width="0.9900000000000001" transform="translate(847.40,856.70)"/><circle cx="872.60" cy="856.70" r="6.3" fill="none" stroke="#484848" stroke-width="0.9"/><path d="M-1.2 -1.9V1.9M1.2 -1.9V1.9" fill="none" stroke="#484848" stroke-width="0.9900000000000001" transform="translate(872.60,856.70)"/><path d="M-3.4 -6V6.2" fill="none" stroke="#484848" stroke-width="1.08" transform="translate(898.10,856.70)"/><path d="M-3.4 -5.6H4.2L2.8 -3.4L4.2 -1.2H-3.4" fill="none" stroke="#484848" stroke-width="0.9" transform="translate(898.10,856.70)"/><circle cx="923.10" cy="856.70" r="6.3" fill="none" stroke="#484848" stroke-width="0.9"/><path d="M-3.4 -2.2L-0.2 0L-3.4 2.2ZM0.2 -2.2L3.6 0L0.2 2.2Z" fill="none" stroke="#484848" stroke-width="0.81" transform="translate(923.10,856.70)"/><circle cx="949.20" cy="856.70" r="6.3" fill="none" stroke="#484848" stroke-width="0.9"/><path d="M3.4 -2.2L0.2 0L3.4 2.2ZM-0.2 -2.2L-3.6 0L-0.2 2.2Z" fill="none" stroke="#484848" stroke-width="0.81" transform="translate(949.20,856.70)"/><circle cx="975.20" cy="856.70" r="6.3" fill="none" stroke="#484848" stroke-width="0.9"/><path d="M-1.8 -2.6L2.8 0L-1.8 2.6Z" fill="none" stroke="#484848" stroke-width="0.855" transform="translate(975.20,856.70)"/><path d="M-6 0.4A6 6 0 0 1 4.4 -4.2M6 -0.4A6 6 0 0 1 -4.4 4.2" fill="none" stroke="#484848" stroke-width="0.9" transform="translate(1001.30,856.70)"/><path d="M-7.6 -0.6L-6 2.4L-4.2 -0.6ZM7.6 0.6L6 -2.4L4.2 0.6Z" fill="#484848" transform="translate(1001.30,856.70)"/><path d="M-6.4 -4.6H6.4V5.2H-6.4Z" fill="none" stroke="#484848" stroke-width="1.035" transform="translate(718.40,896.40)"/><path d="M-4.6 -4.8V-6.2H-1V-4.8" fill="none" stroke="#484848" stroke-width="0.9" transform="translate(718.40,896.40)"/><circle cx="718.40" cy="896.80" r="2.4" fill="none" stroke="#484848" stroke-width="0.9900000000000001"/><circle cx="743.70" cy="896.40" r="6.3" fill="none" stroke="#484848" stroke-width="0.9"/><path d="M1.2 -3L-1.8 0L1.2 3" fill="none" stroke="#484848" stroke-width="1.035" transform="translate(743.70,896.40)"/><circle cx="769.40" cy="896.40" r="6.3" fill="none" stroke="#484848" stroke-width="0.9"/><path d="M-1.2 -3L1.8 0L-1.2 3" fill="none" stroke="#484848" stroke-width="1.035" transform="translate(769.40,896.40)"/><circle cx="795.20" cy="896.40" r="6.3" fill="none" stroke="#484848" stroke-width="0.9"/><path d="M0 3.2V-2.6M-2.6 -0.2L0 -2.9L2.6 -0.2" fill="none" stroke="#484848" stroke-width="1.08" transform="translate(795.20,896.40)"/><circle cx="821.30" cy="896.40" r="6.3" fill="none" stroke="#484848" stroke-width="0.9"/><path d="M0 -3.2V2.6M-2.6 0.2L0 2.9L2.6 0.2" fill="none" stroke="#484848" stroke-width="1.08" transform="translate(821.30,896.40)"/><path d="M-0.2 5.8H-6V-5.6H-1.4L0.6 -3.6H6.4V-1" fill="none" stroke="#484848" stroke-width="0.9900000000000001" transform="translate(848.80,896.40)"/><path d="M4 -1V5.4M1.6 3.2L4 5.8L6.4 3.2" fill="none" stroke="#484848" stroke-width="0.9900000000000001" transform="translate(848.80,896.40)"/><path d="M2.4 -6H-4.4V6H4.6V-3.6" fill="none" stroke="#484848" stroke-width="1.035" transform="translate(873.00,896.40)"/><path d="M1.6 -6.2L4.8 -3.4" fill="none" stroke="#484848" stroke-width="0.7200000000000001" transform="translate(873.00,896.40)"/><path d="M-2.6 -2.6H2.8M-2.6 0H2.8M-2.6 2.6H2.8" fill="none" stroke="#484848" stroke-width="0.81" transform="translate(873.00,896.40)"/><path d="M-5.8 -4.4H5.8M-2 -4.6V-6H2V-4.6" fill="none" stroke="#484848" stroke-width="0.9900000000000001" transform="translate(898.10,896.40)"/><path d="M-4.6 -4.2V6H4.6V-4.2" fill="none" stroke="#484848" stroke-width="1.035" transform="translate(898.10,896.40)"/><path d="M-2.4 -1.6V3.8M0 -1.6V3.8M2.4 -1.6V3.8" fill="none" stroke="#484848" stroke-width="1.1700000000000002" transform="translate(898.10,896.40)"/><path d="M-2.5 6.2V-5.8H2.5V6.2M-2.5 5.8L0 3L2.5 5.8" fill="none" stroke="#484848" stroke-width="1.1700000000000002" transform="translate(924.10,896.40)"/><path d="M-4.6 -3.2H2.4A3.9 3.9 0 0 1 2.4 4.6H-5.8" fill="none" stroke="#484848" stroke-width="0.9450000000000001" transform="translate(950.00,896.40)"/><path d="M-6.8 -3.2L-3.8 -5.6V-0.8Z" fill="#484848" transform="translate(950.00,896.40)"/><circle cx="976.00" cy="896.40" r="6.3" fill="none" stroke="#484848" stroke-width="0.9"/><path d="M-3 -2H3M-3 0H3M-3 2H3" fill="none" stroke="#484848" stroke-width="1.125" transform="translate(976.00,896.40)"/><circle cx="1002.00" cy="896.40" r="6.3" fill="none" stroke="#484848" stroke-width="0.9"/><path d="M0.8 6.2V0.8H6.2" fill="none" stroke="#484848" stroke-width="0.9900000000000001" transform="translate(1002.00,896.40)"/><path d="M0.8 0.8H6.2A6.3 6.3 0 0 1 0.8 6.2Z" fill="#484848" opacity="0.3" transform="translate(1002.00,896.40)"/><path d="M1058.90 387.20L1354.30 387.20" stroke="#5a5a5a" stroke-width="0.9" fill="none"/><rect x="1059.10" y="407.90" width="295.80" height="24.10" fill="#2d2d2d"/><path d="M1133.05 407.90L1133.05 432.00" stroke="#2a2a2a" stroke-width="0.8" fill="none"/><path d="M1207.00 407.90L1207.00 432.00" stroke="#2a2a2a" stroke-width="0.8" fill="none"/><path d="M1280.95 407.90L1280.95 432.00" stroke="#2a2a2a" stroke-width="0.8" fill="none"/><rect x="1059.10" y="440.90" width="295.80" height="24.00" fill="#2d2d2d"/><path d="M1133.05 440.90L1133.05 464.90" stroke="#2a2a2a" stroke-width="0.8" fill="none"/><path d="M1207.00 440.90L1207.00 464.90" stroke="#2a2a2a" stroke-width="0.8" fill="none"/><path d="M1280.95 440.90L1280.95 464.90" stroke="#2a2a2a" stroke-width="0.8" fill="none"/><rect x="1059.10" y="473.70" width="295.80" height="24.20" fill="#2d2d2d"/><path d="M1133.05 473.70L1133.05 497.90" stroke="#2a2a2a" stroke-width="0.8" fill="none"/><path d="M1207.00 473.70L1207.00 497.90" stroke="#2a2a2a" stroke-width="0.8" fill="none"/><path d="M1280.95 473.70L1280.95 497.90" stroke="#2a2a2a" stroke-width="0.8" fill="none"/><rect x="1059.10" y="506.40" width="295.80" height="24.20" fill="#2d2d2d"/><path d="M1133.05 506.40L1133.05 530.60" stroke="#2a2a2a" stroke-width="0.8" fill="none"/><path d="M1207.00 506.40L1207.00 530.60" stroke="#2a2a2a" stroke-width="0.8" fill="none"/><path d="M1280.95 506.40L1280.95 530.60" stroke="#2a2a2a" stroke-width="0.8" fill="none"/><rect x="1059.10" y="539.70" width="295.80" height="24.30" fill="#262626"/><path d="M1133.05 539.70L1133.05 564.00" stroke="#272727" stroke-width="0.8" fill="none"/><path d="M1207.00 539.70L1207.00 564.00" stroke="#272727" stroke-width="0.8" fill="none"/><path d="M1280.95 539.70L1280.95 564.00" stroke="#272727" stroke-width="0.8" fill="none"/><path d="M1059.00 595.30L1354.50 595.30" stroke="#5a5a5a" stroke-width="0.9" fill="none"/><circle cx="1070.00" cy="609.50" r="6.3" fill="none" stroke="#a4a4a4" stroke-width="0.95"/><circle cx="1070.00" cy="607.70" r="2.2" fill="none" stroke="#a4a4a4" stroke-width="0.95"/><path d="M-4.3 4.5C-3.6 1.4 -1.6 0.9 0 0.9C1.6 0.9 3.6 1.4 4.3 4.5" fill="none" stroke="#a4a4a4" stroke-width="0.95" transform="translate(1070.00,609.50)" stroke-linejoin="round"/><circle cx="1099.40" cy="609.10" r="5.7" fill="none" stroke="#a4a4a4" stroke-width="0.95"/><path d="M3.6 3.8L6.2 6.2" fill="none" stroke="#a4a4a4" stroke-width="1.52" transform="translate(1100.00,609.50)" stroke-linejoin="round"/><path d="M-6 -1A6.1 6.1 0 1 1 -4.3 4.3" fill="none" stroke="#a4a4a4" stroke-width="0.95" transform="translate(1132.20,609.50)" stroke-linejoin="round"/><path d="M-8 -1.5L-4.1 -1.5L-6.1 1.3Z" fill="#a4a4a4" transform="translate(1132.20,609.50)"/><path d="M0 -3.2V0.6H2.6" fill="none" stroke="#a4a4a4" stroke-width="1.14" transform="translate(1132.20,609.50)" stroke-linejoin="round"/><path d="M-6 -1A6.1 6.1 0 1 1 -4.3 4.3" fill="none" stroke="#a4a4a4" stroke-width="0.95" transform="translate(1162.90,609.70)" stroke-linejoin="round"/><path d="M-8 -1.5L-4.1 -1.5L-6.1 1.3Z" fill="#a4a4a4" transform="translate(1162.90,609.70)"/><path d="M0 -3.2V0.6H2.6" fill="none" stroke="#a4a4a4" stroke-width="1.14" transform="translate(1162.90,609.70)" stroke-linejoin="round"/><path d="M-6 -1A6.1 6.1 0 1 1 -4.3 4.3" fill="none" stroke="#a4a4a4" stroke-width="0.95" transform="translate(1194.70,609.90)" stroke-linejoin="round"/><path d="M-8 -1.5L-4.1 -1.5L-6.1 1.3Z" fill="#a4a4a4" transform="translate(1194.70,609.90)"/><path d="M0 -3.2V0.6H2.6" fill="none" stroke="#a4a4a4" stroke-width="1.14" transform="translate(1194.70,609.90)" stroke-linejoin="round"/><path d="M-0.4 6H-6.4V-5.8H-1.6L0.4 -3.8H6.4V-1.4" fill="none" stroke="#a4a4a4" stroke-width="0.9974999999999999" transform="translate(1223.90,609.50)" stroke-linejoin="round"/><path d="M3.8 -1.2V5.4M1.6 3.4L3.8 5.8L6 3.4" fill="none" stroke="#a4a4a4" stroke-width="0.9974999999999999" transform="translate(1223.90,609.50)" stroke-linejoin="round"/><path d="M0 6C-3.4 2.8 -6.4 0.4 -6.4 -2.6C-6.4 -6.2 -1.6 -7 0 -3.6C1.6 -7 6.4 -6.2 6.4 -2.6C6.4 0.4 3.4 2.8 0 6Z" fill="none" stroke="#a4a4a4" stroke-width="1.0924999999999998" transform="translate(1256.60,610.10)" stroke-linejoin="round"/><path d="M0 6C-3.4 2.8 -6.4 0.4 -6.4 -2.6C-6.4 -6.2 -1.6 -7 0 -3.6C1.6 -7 6.4 -6.2 6.4 -2.6C6.4 0.4 3.4 2.8 0 6Z" fill="none" stroke="#a4a4a4" stroke-width="1.0924999999999998" transform="translate(1288.20,609.30)" stroke-linejoin="round"/><path d="M0 6C-3.4 2.8 -6.4 0.4 -6.4 -2.6C-6.4 -6.2 -1.6 -7 0 -3.6C1.6 -7 6.4 -6.2 6.4 -2.6C6.4 0.4 3.4 2.8 0 6Z" fill="none" stroke="#a4a4a4" stroke-width="1.0924999999999998" transform="translate(1318.00,608.60)" stroke-linejoin="round"/><circle cx="1348.00" cy="608.60" r="6.3" fill="none" stroke="#a4a4a4" stroke-width="0.95"/><circle cx="1345.80" cy="608.60" r="0.75" fill="#a4a4a4"/><circle cx="1348.00" cy="608.60" r="0.75" fill="#a4a4a4"/><circle cx="1350.20" cy="608.60" r="0.75" fill="#a4a4a4"/><path d="M-7.8 0C-4.6 -7.6 4.6 -7.6 7.8 0C4.6 7.6 -4.6 7.6 -7.8 0Z" fill="none" stroke="#a4a4a4" stroke-width="1.045" transform="translate(1070.70,637.50)" stroke-linejoin="round"/><circle cx="1070.70" cy="637.50" r="2.3" fill="none" stroke="#a4a4a4" stroke-width="1.14"/><path d="M-2.5 6.6V-4.6Q-2.5 -6.2 -0.9 -6.2H0.9Q2.5 -6.2 2.5 -4.6V6.6M-2.5 6L0 3.4L2.5 6" fill="none" stroke="#a4a4a4" stroke-width="1.2349999999999999" transform="translate(1100.20,637.90)" stroke-linejoin="round"/><circle cx="1131.80" cy="643.10" r="2.1" fill="#8a8a8a"/><circle cx="1070.00" cy="667.00" r="6.3" fill="none" stroke="#e26b59" stroke-width="1.25"/><circle cx="1070.00" cy="665.20" r="2.2" fill="none" stroke="#e26b59" stroke-width="1.25"/><path d="M-4.3 4.5C-3.6 1.4 -1.6 0.9 0 0.9C1.6 0.9 3.6 1.4 4.3 4.5" fill="none" stroke="#e26b59" stroke-width="1.25" transform="translate(1070.00,667.00)" stroke-linejoin="round"/><circle cx="1099.40" cy="666.60" r="5.7" fill="none" stroke="#e26b59" stroke-width="1.25"/><path d="M3.6 3.8L6.2 6.2" fill="none" stroke="#e26b59" stroke-width="2.0" transform="translate(1100.00,667.00)" stroke-linejoin="round"/><path d="M-6 -1A6.1 6.1 0 1 1 -4.3 4.3" fill="none" stroke="#e26b59" stroke-width="1.25" transform="translate(1132.20,667.00)" stroke-linejoin="round"/><path d="M-8 -1.5L-4.1 -1.5L-6.1 1.3Z" fill="#e26b59" transform="translate(1132.20,667.00)"/><path d="M0 -3.2V0.6H2.6" fill="none" stroke="#e26b59" stroke-width="1.5" transform="translate(1132.20,667.00)" stroke-linejoin="round"/><path d="M-6 -1A6.1 6.1 0 1 1 -4.3 4.3" fill="none" stroke="#e26b59" stroke-width="1.25" transform="translate(1162.90,667.20)" stroke-linejoin="round"/><path d="M-8 -1.5L-4.1 -1.5L-6.1 1.3Z" fill="#e26b59" transform="translate(1162.90,667.20)"/><path d="M0 -3.2V0.6H2.6" fill="none" stroke="#e26b59" stroke-width="1.5" transform="translate(1162.90,667.20)" stroke-linejoin="round"/><path d="M-6 -1A6.1 6.1 0 1 1 -4.3 4.3" fill="none" stroke="#e26b59" stroke-width="1.25" transform="translate(1194.70,667.40)" stroke-linejoin="round"/><path d="M-8 -1.5L-4.1 -1.5L-6.1 1.3Z" fill="#e26b59" transform="translate(1194.70,667.40)"/><path d="M0 -3.2V0.6H2.6" fill="none" stroke="#e26b59" stroke-width="1.5" transform="translate(1194.70,667.40)" stroke-linejoin="round"/><path d="M-0.4 6H-6.4V-5.8H-1.6L0.4 -3.8H6.4V-1.4" fill="none" stroke="#e26b59" stroke-width="1.3125" transform="translate(1223.90,667.00)" stroke-linejoin="round"/><path d="M3.8 -1.2V5.4M1.6 3.4L3.8 5.8L6 3.4" fill="none" stroke="#e26b59" stroke-width="1.3125" transform="translate(1223.90,667.00)" stroke-linejoin="round"/><path d="M0 6C-3.4 2.8 -6.4 0.4 -6.4 -2.6C-6.4 -6.2 -1.6 -7 0 -3.6C1.6 -7 6.4 -6.2 6.4 -2.6C6.4 0.4 3.4 2.8 0 6Z" fill="none" stroke="#e26b59" stroke-width="1.4375" transform="translate(1256.60,667.60)" stroke-linejoin="round"/><path d="M0 6C-3.4 2.8 -6.4 0.4 -6.4 -2.6C-6.4 -6.2 -1.6 -7 0 -3.6C1.6 -7 6.4 -6.2 6.4 -2.6C6.4 0.4 3.4 2.8 0 6Z" fill="none" stroke="#e26b59" stroke-width="1.4375" transform="translate(1288.20,666.80)" stroke-linejoin="round"/><path d="M0 6C-3.4 2.8 -6.4 0.4 -6.4 -2.6C-6.4 -6.2 -1.6 -7 0 -3.6C1.6 -7 6.4 -6.2 6.4 -2.6C6.4 0.4 3.4 2.8 0 6Z" fill="none" stroke="#e26b59" stroke-width="1.4375" transform="translate(1318.00,666.10)" stroke-linejoin="round"/><circle cx="1348.00" cy="666.10" r="6.3" fill="none" stroke="#e26b59" stroke-width="1.25"/><circle cx="1345.80" cy="666.10" r="0.75" fill="#e26b59"/><circle cx="1348.00" cy="666.10" r="0.75" fill="#e26b59"/><circle cx="1350.20" cy="666.10" r="0.75" fill="#e26b59"/><path d="M-7.8 0C-4.6 -7.6 4.6 -7.6 7.8 0C4.6 7.6 -4.6 7.6 -7.8 0Z" fill="none" stroke="#e26b59" stroke-width="1.375" transform="translate(1070.70,696.00)" stroke-linejoin="round"/><circle cx="1070.70" cy="696.00" r="2.3" fill="none" stroke="#e26b59" stroke-width="1.5"/><path d="M-2.5 6.6V-4.6Q-2.5 -6.2 -0.9 -6.2H0.9Q2.5 -6.2 2.5 -4.6V6.6M-2.5 6L0 3.4L2.5 6" fill="none" stroke="#e26b59" stroke-width="1.625" transform="translate(1100.20,696.40)" stroke-linejoin="round"/><circle cx="1131.80" cy="701.60" r="2.1" fill="#e26b59"/><circle cx="1070.00" cy="724.50" r="6.3" fill="none" stroke="#3a3a3a" stroke-width="0.95"/><circle cx="1070.00" cy="722.70" r="2.2" fill="none" stroke="#3a3a3a" stroke-width="0.95"/><path d="M-4.3 4.5C-3.6 1.4 -1.6 0.9 0 0.9C1.6 0.9 3.6 1.4 4.3 4.5" fill="none" stroke="#3a3a3a" stroke-width="0.95" transform="translate(1070.00,724.50)" stroke-linejoin="round"/><circle cx="1099.40" cy="724.10" r="5.7" fill="none" stroke="#3a3a3a" stroke-width="0.95"/><path d="M3.6 3.8L6.2 6.2" fill="none" stroke="#3a3a3a" stroke-width="1.52" transform="translate(1100.00,724.50)" stroke-linejoin="round"/><path d="M-6 -1A6.1 6.1 0 1 1 -4.3 4.3" fill="none" stroke="#3a3a3a" stroke-width="0.95" transform="translate(1132.20,724.50)" stroke-linejoin="round"/><path d="M-8 -1.5L-4.1 -1.5L-6.1 1.3Z" fill="#3a3a3a" transform="translate(1132.20,724.50)"/><path d="M0 -3.2V0.6H2.6" fill="none" stroke="#3a3a3a" stroke-width="1.14" transform="translate(1132.20,724.50)" stroke-linejoin="round"/><path d="M-6 -1A6.1 6.1 0 1 1 -4.3 4.3" fill="none" stroke="#3a3a3a" stroke-width="0.95" transform="translate(1162.90,724.70)" stroke-linejoin="round"/><path d="M-8 -1.5L-4.1 -1.5L-6.1 1.3Z" fill="#3a3a3a" transform="translate(1162.90,724.70)"/><path d="M0 -3.2V0.6H2.6" fill="none" stroke="#3a3a3a" stroke-width="1.14" transform="translate(1162.90,724.70)" stroke-linejoin="round"/><path d="M-6 -1A6.1 6.1 0 1 1 -4.3 4.3" fill="none" stroke="#3a3a3a" stroke-width="0.95" transform="translate(1194.70,724.90)" stroke-linejoin="round"/><path d="M-8 -1.5L-4.1 -1.5L-6.1 1.3Z" fill="#3a3a3a" transform="translate(1194.70,724.90)"/><path d="M0 -3.2V0.6H2.6" fill="none" stroke="#3a3a3a" stroke-width="1.14" transform="translate(1194.70,724.90)" stroke-linejoin="round"/><path d="M-0.4 6H-6.4V-5.8H-1.6L0.4 -3.8H6.4V-1.4" fill="none" stroke="#3a3a3a" stroke-width="0.9974999999999999" transform="translate(1223.90,724.50)" stroke-linejoin="round"/><path d="M3.8 -1.2V5.4M1.6 3.4L3.8 5.8L6 3.4" fill="none" stroke="#3a3a3a" stroke-width="0.9974999999999999" transform="translate(1223.90,724.50)" stroke-linejoin="round"/><path d="M0 6C-3.4 2.8 -6.4 0.4 -6.4 -2.6C-6.4 -6.2 -1.6 -7 0 -3.6C1.6 -7 6.4 -6.2 6.4 -2.6C6.4 0.4 3.4 2.8 0 6Z" fill="none" stroke="#3a3a3a" stroke-width="1.0924999999999998" transform="translate(1256.60,725.10)" stroke-linejoin="round"/><path d="M0 6C-3.4 2.8 -6.4 0.4 -6.4 -2.6C-6.4 -6.2 -1.6 -7 0 -3.6C1.6 -7 6.4 -6.2 6.4 -2.6C6.4 0.4 3.4 2.8 0 6Z" fill="none" stroke="#3a3a3a" stroke-width="1.0924999999999998" transform="translate(1288.20,724.30)" stroke-linejoin="round"/><path d="M0 6C-3.4 2.8 -6.4 0.4 -6.4 -2.6C-6.4 -6.2 -1.6 -7 0 -3.6C1.6 -7 6.4 -6.2 6.4 -2.6C6.4 0.4 3.4 2.8 0 6Z" fill="none" stroke="#3a3a3a" stroke-width="1.0924999999999998" transform="translate(1318.00,723.60)" stroke-linejoin="round"/><circle cx="1348.00" cy="723.60" r="6.3" fill="none" stroke="#3a3a3a" stroke-width="0.95"/><circle cx="1345.80" cy="723.60" r="0.75" fill="#3a3a3a"/><circle cx="1348.00" cy="723.60" r="0.75" fill="#3a3a3a"/><circle cx="1350.20" cy="723.60" r="0.75" fill="#3a3a3a"/><path d="M-7.8 0C-4.6 -7.6 4.6 -7.6 7.8 0C4.6 7.6 -4.6 7.6 -7.8 0Z" fill="none" stroke="#3a3a3a" stroke-width="1.045" transform="translate(1070.70,752.20)" stroke-linejoin="round"/><circle cx="1070.70" cy="752.20" r="2.3" fill="none" stroke="#3a3a3a" stroke-width="1.14"/><path d="M-2.5 6.6V-4.6Q-2.5 -6.2 -0.9 -6.2H0.9Q2.5 -6.2 2.5 -4.6V6.6M-2.5 6L0 3.4L2.5 6" fill="none" stroke="#3a3a3a" stroke-width="1.2349999999999999" transform="translate(1100.20,752.60)" stroke-linejoin="round"/><circle cx="1131.80" cy="757.80" r="2.1" fill="#3a3a3a"/><path d="M1403.40 386.50L1718.40 386.50" stroke="#5a5a5a" stroke-width="0.9" fill="none"/><rect x="1403.40" y="396.40" width="90.80" height="14.20" fill="#2b2b2b" stroke="#505050" stroke-width="0.9" rx="0.5"/><rect x="1516.40" y="396.80" width="89.90" height="14.80" fill="#2b2b2b" stroke="#505050" stroke-width="0.9" rx="0.5"/><path d="M1600.10 402.60L1603.10 405.60M1603.10 402.60L1600.10 405.60" fill="none" stroke="#f4f4f4" stroke-width="1.2" /><rect x="1627.60" y="397.00" width="90.60" height="14.60" fill="#2b2b2b" stroke="#505050" stroke-width="0.9" rx="0.5"/><rect x="1403.40" y="419.10" width="90.80" height="14.10" fill="#353535" stroke="#5a5a5a" stroke-width="0.9" rx="0.5"/><rect x="1516.40" y="418.10" width="89.90" height="14.90" fill="#353535" stroke="#5a5a5a" stroke-width="0.9" rx="0.5"/><path d="M1600.10 423.95L1603.10 426.95M1603.10 423.95L1600.10 426.95" fill="none" stroke="#ffffff" stroke-width="1.2" /><rect x="1627.60" y="418.10" width="90.60" height="14.80" fill="#353535" stroke="#5a5a5a" stroke-width="0.9" rx="0.5"/><rect x="1403.40" y="441.10" width="90.80" height="13.80" fill="#222222" stroke="#2b2b2b" stroke-width="0.9" rx="0.5"/><rect x="1516.40" y="440.20" width="89.90" height="14.50" fill="#222222" stroke="#2b2b2b" stroke-width="0.9" rx="0.5"/><path d="M1600.10 445.85L1603.10 448.85M1603.10 445.85L1600.10 448.85" fill="none" stroke="#4a4a4a" stroke-width="1.2" /><rect x="1627.60" y="439.50" width="90.60" height="14.30" fill="#222222" stroke="#2b2b2b" stroke-width="0.9" rx="0.5"/><rect x="1403.40" y="478.00" width="90.80" height="14.30" fill="#2b2b2b" stroke="#505050" stroke-width="0.9" rx="0.5"/><rect x="1481.00" y="481.15" width="7.50" height="6.80" fill="#ffffff"/><rect x="1515.50" y="477.30" width="90.80" height="14.50" fill="#2b2b2b" stroke="#505050" stroke-width="0.9" rx="0.5"/><path d="M1597 484.35H1603M1600.6 481.85L1603.2 484.35L1600.6 486.85" fill="none" stroke="#ffffff" stroke-width="1.05" /><rect x="1628.40" y="477.00" width="89.80" height="14.80" fill="#2b2b2b" stroke="#505050" stroke-width="0.9" rx="0.5"/><path d="M1710.4 484.40L1712.6 486.80L1716.4 481.80" fill="none" stroke="#ffffff" stroke-width="1.35" /><rect x="1404.40" y="498.40" width="89.80" height="14.50" fill="#353535" stroke="#5a5a5a" stroke-width="0.9" rx="0.5"/><rect x="1481.30" y="501.65" width="7.50" height="6.80" fill="#ffffff"/><rect x="1515.50" y="497.40" width="90.80" height="14.30" fill="#353535" stroke="#5a5a5a" stroke-width="0.9" rx="0.5"/><path d="M1597 504.35H1603M1600.6 501.85L1603.2 504.35L1600.6 506.85" fill="none" stroke="#ffffff" stroke-width="1.05" /><rect x="1628.40" y="497.20" width="90.90" height="15.00" fill="#353535" stroke="#5a5a5a" stroke-width="0.9" rx="0.5"/><path d="M1710.4 504.70L1712.6 507.10L1716.4 502.10" fill="none" stroke="#ffffff" stroke-width="1.35" /><rect x="1404.40" y="517.70" width="89.80" height="13.70" fill="#222222" stroke="#2b2b2b" stroke-width="0.9" rx="0.5"/><rect x="1481.30" y="520.55" width="7.50" height="6.80" fill="#555555"/><rect x="1515.50" y="517.70" width="90.80" height="13.70" fill="#222222" stroke="#2b2b2b" stroke-width="0.9" rx="0.5"/><path d="M1597 524.35H1603M1600.6 521.85L1603.2 524.35L1600.6 526.85" fill="none" stroke="#4a4a4a" stroke-width="1.05" /><rect x="1628.40" y="518.00" width="89.80" height="14.10" fill="#222222" stroke="#2b2b2b" stroke-width="0.9" rx="0.5"/><path d="M1710.4 525.05L1712.6 527.45L1716.4 522.45" fill="none" stroke="#4a4a4a" stroke-width="1.35" /><rect x="1404.10" y="551.30" width="90.10" height="14.40" fill="#2b2b2b" stroke="#505050" stroke-width="0.9" rx="0.5"/><rect x="1515.50" y="551.30" width="90.80" height="14.20" fill="#2b2b2b" stroke="#505050" stroke-width="0.9" rx="0.5"/><rect x="1627.40" y="550.30" width="90.60" height="15.20" fill="#2b2b2b" stroke="#383838" stroke-width="0.9" rx="0.5"/><rect x="1694.20" y="552.60" width="21.40" height="11.00" fill="#8c8c8c" rx="5.5"/><circle cx="1699.70" cy="558.10" r="4.8" fill="#ffffff"/><rect x="1404.10" y="571.10" width="90.10" height="14.60" fill="#353535" stroke="#5a5a5a" stroke-width="0.9" rx="0.5"/><rect x="1515.50" y="571.10" width="90.80" height="14.60" fill="#353535" stroke="#5a5a5a" stroke-width="0.9" rx="0.5"/><rect x="1627.40" y="570.70" width="90.60" height="14.50" fill="#353535" stroke="#555555" stroke-width="0.9" rx="0.5"/><rect x="1694.20" y="572.65" width="21.40" height="11.00" fill="#e26b59" rx="5.5"/><circle cx="1710.10" cy="578.15" r="4.8" fill="#ffffff"/><rect x="1404.10" y="591.30" width="90.10" height="14.10" fill="#222222" stroke="#2b2b2b" stroke-width="0.9" rx="0.5"/><rect x="1515.50" y="590.80" width="90.80" height="14.10" fill="#222222" stroke="#2b2b2b" stroke-width="0.9" rx="0.5"/><rect x="1627.40" y="590.40" width="90.60" height="14.30" fill="#222222" stroke="#292929" stroke-width="0.9" rx="0.5"/><rect x="1693.20" y="592.20" width="20.50" height="10.70" fill="#383838" rx="5.35"/><circle cx="1698.55" cy="597.55" r="4.6499999999999995" fill="#6e6e6e"/></svg>
<div class="a ab" style="left:0;top:0;width:7252px;height:4148px;transform:scale(0.25);transform-origin:0 0;filter:blur(1.2px)"><div class="t" style="left:257.6px;top:1386.4px;font-size:44px;color:#d8d8d8;letter-spacing:1.39px">Controls</div><div class="t" style="left:1394.4px;top:1386.4px;font-size:44px;color:#d8d8d8;letter-spacing:2.18px">Editors</div><div class="t" style="left:2790.0px;top:1386.4px;font-size:44px;color:#d8d8d8;letter-spacing:1.61px">Toolbar</div><div class="t" style="left:4185.6px;top:1386.4px;font-size:44px;color:#d8d8d8;letter-spacing:1.69px">Tabs</div><div class="t" style="left:5582.4px;top:1386.4px;font-size:44px;color:#d8d8d8;letter-spacing:1.63px">Listbox</div><div class="t" style="left:315.2px;top:1491.4px;font-size:22.96px;color:#ffffff;font-weight:bold;">CONTROLS</div><div class="t" style="left:314.4px;top:1544.6px;font-size:13.22px;color:#c4c4c4;">TProgressBar (Horizontal)</div><div class="t" style="left:590.0px;top:1544.6px;font-size:13.13px;color:#c4c4c4;">TProgressBar (Vertical)</div><div class="t" style="left:840.0px;top:1544.6px;font-size:13.26px;color:#c4c4c4;">TTrackBar (Horizontal)</div><div class="t" style="left:1127.2px;top:1544.6px;font-size:13.19px;color:#c4c4c4;">TTrackBar (Vertical)</div><div class="t" style="left:365.2px;top:1884.1px;font-size:12.66px;color:#c4c4c4;">TSpeedButton (+/-)</div><div class="t" style="left:774.0px;top:1884.2px;font-size:12.51px;color:#c4c4c4;">TSpeedButton</div><div class="t" style="left:1173.8px;top:1883.8px;font-size:13.14px;color:#c4c4c4;">TButton</div><div class="t" style="left:612.4px;top:1924.6px;font-size:23.43px;color:#d4d4d4;">Segment1</div><div class="t" style="left:773.0px;top:1924.6px;font-size:23.43px;color:#d4d4d4;">Segment2</div><div class="t" style="left:933.0px;top:1924.6px;font-size:23.43px;color:#d4d4d4;">Segment3</div><div class="t" style="left:612.4px;top:1987.0px;font-size:23.43px;color:#ffffff;">Segment1</div><div class="t" style="left:773.0px;top:1987.0px;font-size:23.43px;color:#d4d4d4;">Segment2</div><div class="t" style="left:933.0px;top:1987.0px;font-size:23.43px;color:#d4d4d4;">Segment3</div><div class="t" style="left:612.4px;top:2050.6px;font-size:23.43px;color:#d4d4d4;">Segment1</div><div class="t" style="left:773.0px;top:2050.6px;font-size:23.43px;color:#ffffff;">Segment2</div><div class="t" style="left:933.0px;top:2050.6px;font-size:23.43px;color:#d4d4d4;">Segment3</div><div class="t" style="left:612.4px;top:2113.8px;font-size:23.43px;color:#d4d4d4;">Segment1</div><div class="t" style="left:773.0px;top:2113.8px;font-size:23.43px;color:#d4d4d4;">Segment2</div><div class="t" style="left:933.0px;top:2113.8px;font-size:23.43px;color:#ffffff;">Segment3</div><div class="t" style="left:612.4px;top:2176.6px;font-size:23.43px;color:#444444;">Segment1</div><div class="t" style="left:773.0px;top:2176.6px;font-size:23.43px;color:#444444;">Segment2</div><div class="t" style="left:933.0px;top:2176.6px;font-size:23.43px;color:#444444;">Segment3</div><div class="t" style="left:1164.4px;top:1924.8px;font-size:23.80px;color:#d8d8d8;">Button</div><div class="t" style="left:1164.4px;top:1987.2px;font-size:23.80px;color:#ffffff;">Button</div><div class="t" style="left:1164.4px;top:2050.8px;font-size:23.80px;color:#464646;">Button</div><div class="t" style="left:385.8px;top:2243.5px;font-size:12.93px;color:#c4c4c4;">TSwitch</div><div class="t" style="left:664.2px;top:2243.8px;font-size:12.43px;color:#c4c4c4;">TLabel</div><div class="t" style="left:907.4px;top:2243.3px;font-size:13.41px;color:#c4c4c4;">TAniIndicator</div><div class="t" style="left:1159.8px;top:2243.1px;font-size:13.83px;color:#c4c4c4;">TButton (+/-)</div><div class="t" style="left:649.8px;top:2276.8px;font-size:24.20px;color:#dcdcdc;">Normal</div><div class="t" style="left:655.8px;top:2330.4px;font-size:24.24px;color:#ffffff;">Focus</div><div class="t" style="left:641.8px;top:2384.8px;font-size:24.16px;color:#525252;">Disabled</div><div class="t" style="left:1440.0px;top:1492.0px;font-size:25.66px;color:#ffffff;font-weight:bold;">EDITORS</div><div class="t" style="left:1440.0px;top:1571.5px;font-size:16.07px;color:#c4c4c4;">TEdit (with Search and Magnifying Glass)</div><div class="t" style="left:1855.2px;top:1569.9px;font-size:16.04px;color:#c4c4c4;">TEdit (with Search)</div><div class="t" style="left:2266.8px;top:1570.8px;font-size:15.94px;color:#c4c4c4;">TEdit</div><div class="t" style="left:1493.2px;top:1626.7px;font-size:24.04px;color:#dcdcdc;">Edit4</div><div class="t" style="left:1866.8px;top:1623.5px;font-size:24.04px;color:#dcdcdc;">Edit4</div><div class="t" style="left:2280.8px;top:1622.7px;font-size:24.04px;color:#dcdcdc;">Edit4</div><div class="t" style="left:1493.2px;top:1699.7px;font-size:24.04px;color:#ffffff;">Edit4</div><div class="t" style="left:1866.8px;top:1696.5px;font-size:24.04px;color:#ffffff;">Edit4</div><div class="t" style="left:2280.8px;top:1695.7px;font-size:24.04px;color:#ffffff;">Edit4</div><div class="t" style="left:1493.2px;top:1772.5px;font-size:24.04px;color:#484848;">Edit4</div><div class="t" style="left:1866.8px;top:1769.3px;font-size:24.04px;color:#484848;">Edit4</div><div class="t" style="left:2280.8px;top:1768.5px;font-size:24.04px;color:#484848;">Edit4</div><div class="t" style="left:1446.4px;top:1860.9px;font-size:15.68px;color:#c4c4c4;">TSpinBox</div><div class="t" style="left:1754.8px;top:1860.9px;font-size:15.74px;color:#c4c4c4;">TDateEdit</div><div class="t" style="left:2062.0px;top:1861.0px;font-size:15.55px;color:#c4c4c4;">TComboEdit</div><div class="t" style="left:2366.0px;top:1860.7px;font-size:16.02px;color:#c4c4c4;">TComboEdit (with Hamburger)</div><div class="t" style="left:1567.7px;top:1910.1px;font-size:24.00px;color:#dcdcdc;">0</div><div class="t" style="left:1847.2px;top:1909.5px;font-size:23.50px;color:#dcdcdc;">6/28/18</div><div class="t" style="left:2168.0px;top:1911.6px;font-size:23.35px;color:#dcdcdc;">Item1</div><div class="t" style="left:2384.0px;top:1909.6px;font-size:23.35px;color:#dcdcdc;">Item1</div><div class="t" style="left:1567.7px;top:1981.7px;font-size:24.00px;color:#ffffff;">0</div><div class="t" style="left:1847.2px;top:1981.1px;font-size:23.50px;color:#ffffff;">6/28/18</div><div class="t" style="left:2168.0px;top:1983.2px;font-size:23.35px;color:#ffffff;">Item1</div><div class="t" style="left:2384.0px;top:1981.2px;font-size:23.35px;color:#ffffff;">Item1</div><div class="t" style="left:1567.7px;top:2052.9px;font-size:24.00px;color:#484848;">0</div><div class="t" style="left:1847.2px;top:2052.3px;font-size:23.50px;color:#484848;">6/28/18</div><div class="t" style="left:2168.0px;top:2054.4px;font-size:23.35px;color:#484848;">Item1</div><div class="t" style="left:2384.0px;top:2052.4px;font-size:23.35px;color:#484848;">Item1</div><div class="t" style="left:1460.0px;top:2137.1px;font-size:16.05px;color:#c4c4c4;">TMemo</div><div class="t" style="left:1469.2px;top:2181.1px;font-size:23.51px;color:#dcdcdc;">Memo1</div><div class="t" style="left:1811.2px;top:2181.1px;font-size:23.51px;color:#ffffff;">Memo1</div><div class="t" style="left:2155.2px;top:2181.1px;font-size:23.51px;color:#484848;">Memo1</div><div class="t" style="left:2841.2px;top:1498.8px;font-size:28.02px;color:#ffffff;font-weight:bold;">TOOLBAR</div><div class="t" style="left:2840.0px;top:1612.6px;font-size:16.14px;color:#c4c4c4;">TToolBar (Header)</div><div class="t" style="left:2840.0px;top:1794.3px;font-size:15.96px;color:#c4c4c4;">TGroupBox</div><div class="t" style="left:2840.0px;top:2033.7px;font-size:16.34px;color:#c4c4c4;">TToolBar (Footer)</div><div class="t" style="left:2841.2px;top:2264.7px;font-size:28.07px;color:#ffffff;font-weight:bold;">TOOLBAR BUTTONS</div><div class="t" style="left:2840.0px;top:2361.5px;font-size:16.06px;color:#c4c4c4;">TSpeedButton (back tool button)</div><div class="t" style="left:3242.0px;top:2362.3px;font-size:16.10px;color:#c4c4c4;">TSpeedButton (no style)</div><div class="t" style="left:2883.2px;top:2400.3px;font-size:24.29px;color:#ffffff;">Back</div><div class="t" style="left:3239.6px;top:2399.3px;font-size:24.00px;color:#ffffff;">SpeedButton</div><div class="t" style="left:2883.2px;top:2462.3px;font-size:24.29px;color:#9a9a9a;">Back</div><div class="t" style="left:3239.6px;top:2461.3px;font-size:24.00px;color:#9a9a9a;">SpeedButton</div><div class="t" style="left:2883.2px;top:2527.1px;font-size:24.29px;color:#444444;">Back</div><div class="t" style="left:3239.6px;top:2526.1px;font-size:24.00px;color:#444444;">SpeedButton</div><div class="t" style="left:2861.2px;top:2670.4px;font-size:27.93px;color:#ffffff;font-weight:bold;">TOOL BUTTONS</div><div class="t" style="left:2857.3px;top:2839.0px;font-size:16.20px;color:#d0d0d0;">Stop</div><div class="t" style="left:2964.1px;top:2839.0px;font-size:16.20px;color:#d0d0d0;">Info</div><div class="t" style="left:3056.7px;top:2839.0px;font-size:16.20px;color:#d0d0d0;">Search</div><div class="t" style="left:3167.3px;top:2839.0px;font-size:16.20px;color:#d0d0d0;">Next</div><div class="t" style="left:3271.2px;top:2839.0px;font-size:16.20px;color:#d0d0d0;">Add</div><div class="t" style="left:3372.9px;top:2839.0px;font-size:16.20px;color:#d0d0d0;">Prior</div><div class="t" style="left:3469.0px;top:2839.0px;font-size:16.20px;color:#d0d0d0;">Pause</div><div class="t" style="left:3569.9px;top:2839.0px;font-size:16.20px;color:#d0d0d0;">Action</div><div class="t" style="left:3666.3px;top:2839.0px;font-size:16.20px;color:#d0d0d0;">Forward</div><div class="t" style="left:3772.2px;top:2839.0px;font-size:16.20px;color:#d0d0d0;">Rewind</div><div class="t" style="left:3887.4px;top:2839.0px;font-size:16.20px;color:#d0d0d0;">Play</div><div class="t" style="left:3980.0px;top:2839.0px;font-size:16.20px;color:#d0d0d0;">Refresh</div><div class="t" style="left:2845.2px;top:2990.2px;font-size:16.20px;color:#d0d0d0;">Camera</div><div class="t" style="left:2942.9px;top:2990.2px;font-size:16.20px;color:#d0d0d0;">ArrowLeft</div><div class="t" style="left:3042.3px;top:2990.2px;font-size:16.20px;color:#d0d0d0;">ArrowRight</div><div class="t" style="left:3152.5px;top:2990.2px;font-size:16.20px;color:#d0d0d0;">ArrowUp</div><div class="t" style="left:3243.7px;top:2990.2px;font-size:16.20px;color:#d0d0d0;">ArrowDown</div><div class="t" style="left:3344.1px;top:2990.2px;font-size:16.20px;color:#d0d0d0;">Organization</div><div class="t" style="left:3457.3px;top:2990.2px;font-size:16.20px;color:#d0d0d0;">Compose</div><div class="t" style="left:3572.0px;top:2990.2px;font-size:16.20px;color:#d0d0d0;">Trash</div><div class="t" style="left:3659.5px;top:2990.2px;font-size:16.20px;color:#d0d0d0;">Bookmark</div><div class="t" style="left:3778.5px;top:2990.2px;font-size:16.20px;color:#d0d0d0;">Reply</div><div class="t" style="left:3878.4px;top:2990.2px;font-size:16.20px;color:#d0d0d0;">Details</div><div class="t" style="left:3996.7px;top:2990.2px;font-size:16.20px;color:#d0d0d0;">Pie</div><div class="t" style="left:2857.3px;top:3156.2px;font-size:16.20px;color:#bcbcbc;">Stop</div><div class="t" style="left:2964.1px;top:3156.2px;font-size:16.20px;color:#bcbcbc;">Info</div><div class="t" style="left:3056.7px;top:3156.2px;font-size:16.20px;color:#bcbcbc;">Search</div><div class="t" style="left:3167.3px;top:3156.2px;font-size:16.20px;color:#bcbcbc;">Next</div><div class="t" style="left:3271.2px;top:3156.2px;font-size:16.20px;color:#bcbcbc;">Add</div><div class="t" style="left:3372.9px;top:3156.2px;font-size:16.20px;color:#bcbcbc;">Prior</div><div class="t" style="left:3469.0px;top:3156.2px;font-size:16.20px;color:#bcbcbc;">Pause</div><div class="t" style="left:3569.9px;top:3156.2px;font-size:16.20px;color:#bcbcbc;">Action</div><div class="t" style="left:3666.3px;top:3156.2px;font-size:16.20px;color:#bcbcbc;">Forward</div><div class="t" style="left:3772.2px;top:3156.2px;font-size:16.20px;color:#bcbcbc;">Rewind</div><div class="t" style="left:3887.4px;top:3156.2px;font-size:16.20px;color:#bcbcbc;">Play</div><div class="t" style="left:3980.0px;top:3156.2px;font-size:16.20px;color:#bcbcbc;">Refresh</div><div class="t" style="left:2845.2px;top:3307.8px;font-size:16.20px;color:#bcbcbc;">Camera</div><div class="t" style="left:2942.9px;top:3307.8px;font-size:16.20px;color:#bcbcbc;">ArrowLeft</div><div class="t" style="left:3042.3px;top:3307.8px;font-size:16.20px;color:#bcbcbc;">ArrowRight</div><div class="t" style="left:3152.5px;top:3307.8px;font-size:16.20px;color:#bcbcbc;">ArrowUp</div><div class="t" style="left:3243.7px;top:3307.8px;font-size:16.20px;color:#bcbcbc;">ArrowDown</div><div class="t" style="left:3344.1px;top:3307.8px;font-size:16.20px;color:#bcbcbc;">Organization</div><div class="t" style="left:3457.3px;top:3307.8px;font-size:16.20px;color:#bcbcbc;">Compose</div><div class="t" style="left:3572.0px;top:3307.8px;font-size:16.20px;color:#bcbcbc;">Trash</div><div class="t" style="left:3659.5px;top:3307.8px;font-size:16.20px;color:#bcbcbc;">Bookmark</div><div class="t" style="left:3778.5px;top:3307.8px;font-size:16.20px;color:#bcbcbc;">Reply</div><div class="t" style="left:3878.4px;top:3307.8px;font-size:16.20px;color:#bcbcbc;">Details</div><div class="t" style="left:3996.7px;top:3307.8px;font-size:16.20px;color:#bcbcbc;">Pie</div><div class="t" style="left:2857.3px;top:3472.6px;font-size:16.20px;color:#3e3e3e;">Stop</div><div class="t" style="left:2964.1px;top:3472.6px;font-size:16.20px;color:#3e3e3e;">Info</div><div class="t" style="left:3056.7px;top:3472.6px;font-size:16.20px;color:#3e3e3e;">Search</div><div class="t" style="left:3167.3px;top:3472.6px;font-size:16.20px;color:#3e3e3e;">Next</div><div class="t" style="left:3271.2px;top:3472.6px;font-size:16.20px;color:#3e3e3e;">Add</div><div class="t" style="left:3372.9px;top:3472.6px;font-size:16.20px;color:#3e3e3e;">Prior</div><div class="t" style="left:3469.0px;top:3472.6px;font-size:16.20px;color:#3e3e3e;">Pause</div><div class="t" style="left:3569.9px;top:3472.6px;font-size:16.20px;color:#3e3e3e;">Action</div><div class="t" style="left:3666.3px;top:3472.6px;font-size:16.20px;color:#3e3e3e;">Forward</div><div class="t" style="left:3772.2px;top:3472.6px;font-size:16.20px;color:#3e3e3e;">Rewind</div><div class="t" style="left:3887.4px;top:3472.6px;font-size:16.20px;color:#3e3e3e;">Play</div><div class="t" style="left:3980.0px;top:3472.6px;font-size:16.20px;color:#3e3e3e;">Refresh</div><div class="t" style="left:2845.2px;top:3625.4px;font-size:16.20px;color:#3e3e3e;">Camera</div><div class="t" style="left:2942.9px;top:3625.4px;font-size:16.20px;color:#3e3e3e;">ArrowLeft</div><div class="t" style="left:3042.3px;top:3625.4px;font-size:16.20px;color:#3e3e3e;">ArrowRight</div><div class="t" style="left:3152.5px;top:3625.4px;font-size:16.20px;color:#3e3e3e;">ArrowUp</div><div class="t" style="left:3243.7px;top:3625.4px;font-size:16.20px;color:#3e3e3e;">ArrowDown</div><div class="t" style="left:3344.1px;top:3625.4px;font-size:16.20px;color:#3e3e3e;">Organization</div><div class="t" style="left:3457.3px;top:3625.4px;font-size:16.20px;color:#3e3e3e;">Compose</div><div class="t" style="left:3572.0px;top:3625.4px;font-size:16.20px;color:#3e3e3e;">Trash</div><div class="t" style="left:3659.5px;top:3625.4px;font-size:16.20px;color:#3e3e3e;">Bookmark</div><div class="t" style="left:3778.5px;top:3625.4px;font-size:16.20px;color:#3e3e3e;">Reply</div><div class="t" style="left:3878.4px;top:3625.4px;font-size:16.20px;color:#3e3e3e;">Details</div><div class="t" style="left:3996.7px;top:3625.4px;font-size:16.20px;color:#3e3e3e;">Pie</div><div class="t" style="left:4238.0px;top:1494.2px;font-size:27.49px;color:#ffffff;font-weight:bold;">TABS</div><div class="t" style="left:4236.0px;top:1585.8px;font-size:16.16px;color:#c4c4c4;">TTabControl</div><div class="t" style="left:4350.4px;top:1664.5px;font-size:28.04px;color:#e26b59;">Tab1</div><div class="t" style="left:4648.4px;top:1664.5px;font-size:28.04px;color:#dedede;">Tab2</div><div class="t" style="left:4944.0px;top:1664.5px;font-size:28.04px;color:#dedede;">Tab3</div><div class="t" style="left:5239.2px;top:1664.5px;font-size:28.04px;color:#dedede;">Tab4</div><div class="t" style="left:4350.4px;top:1796.3px;font-size:28.04px;color:#dedede;">Tab1</div><div class="t" style="left:4648.4px;top:1796.3px;font-size:28.04px;color:#e26b59;">Tab2</div><div class="t" style="left:4944.0px;top:1796.3px;font-size:28.04px;color:#dedede;">Tab3</div><div class="t" style="left:5239.2px;top:1796.3px;font-size:28.04px;color:#dedede;">Tab4</div><div class="t" style="left:4350.4px;top:1927.9px;font-size:28.04px;color:#dedede;">Tab1</div><div class="t" style="left:4648.4px;top:1927.9px;font-size:28.04px;color:#dedede;">Tab2</div><div class="t" style="left:4944.0px;top:1927.9px;font-size:28.04px;color:#e26b59;">Tab3</div><div class="t" style="left:5239.2px;top:1927.9px;font-size:28.04px;color:#dedede;">Tab4</div><div class="t" style="left:4350.4px;top:2058.7px;font-size:28.04px;color:#dedede;">Tab1</div><div class="t" style="left:4648.4px;top:2058.7px;font-size:28.04px;color:#dedede;">Tab2</div><div class="t" style="left:4944.0px;top:2058.7px;font-size:28.04px;color:#dedede;">Tab3</div><div class="t" style="left:5239.2px;top:2058.7px;font-size:28.04px;color:#e26b59;">Tab4</div><div class="t" style="left:4350.4px;top:2192.1px;font-size:28.04px;color:#444444;">Tab1</div><div class="t" style="left:4648.4px;top:2192.1px;font-size:28.04px;color:#444444;">Tab2</div><div class="t" style="left:4944.0px;top:2192.1px;font-size:28.04px;color:#444444;">Tab3</div><div class="t" style="left:5239.2px;top:2192.1px;font-size:28.04px;color:#444444;">Tab4</div><div class="t" style="left:4240.0px;top:2327.8px;font-size:27.52px;color:#ffffff;font-weight:bold;">TTabItems</div><div class="t" style="left:4243.6px;top:2479.0px;font-size:17.00px;color:#ffffff;font-weight:bold;">Contacts</div><div class="t" style="left:4374.8px;top:2479.0px;font-size:17.00px;color:#ffffff;font-weight:bold;">Search</div><div class="t" style="left:4501.3px;top:2479.0px;font-size:17.00px;color:#ffffff;font-weight:bold;">Recent</div><div class="t" style="left:4606.3px;top:2479.0px;font-size:17.00px;color:#ffffff;font-weight:bold;">Most recent</div><div class="t" style="left:4749.9px;top:2479.0px;font-size:17.00px;color:#ffffff;font-weight:bold;">History</div><div class="t" style="left:4851.9px;top:2479.0px;font-size:17.00px;color:#ffffff;font-weight:bold;">Downloads</div><div class="t" style="left:4989.1px;top:2479.0px;font-size:17.00px;color:#ffffff;font-weight:bold;">Top rated</div><div class="t" style="left:5116.1px;top:2479.0px;font-size:17.00px;color:#ffffff;font-weight:bold;">Featured</div><div class="t" style="left:5237.4px;top:2479.0px;font-size:17.00px;color:#ffffff;font-weight:bold;">Favorites</div><div class="t" style="left:5370.9px;top:2479.0px;font-size:17.00px;color:#ffffff;font-weight:bold;">More</div><div class="t" style="left:4232.3px;top:2594.2px;font-size:17.00px;color:#ffffff;font-weight:bold;">Most viewed</div><div class="t" style="left:4356.1px;top:2594.2px;font-size:17.00px;color:#ffffff;font-weight:bold;">Bookmarks</div><div class="t" style="left:4509.1px;top:2593.9px;font-size:17.60px;color:#d4d4d4;">Dots</div><div class="t" style="left:4243.6px;top:2708.2px;font-size:17.00px;color:#ffffff;font-weight:bold;">Contacts</div><div class="t" style="left:4374.8px;top:2708.2px;font-size:17.00px;color:#ffffff;font-weight:bold;">Search</div><div class="t" style="left:4501.3px;top:2708.2px;font-size:17.00px;color:#ffffff;font-weight:bold;">Recent</div><div class="t" style="left:4606.3px;top:2708.2px;font-size:17.00px;color:#ffffff;font-weight:bold;">Most recent</div><div class="t" style="left:4749.9px;top:2708.2px;font-size:17.00px;color:#ffffff;font-weight:bold;">History</div><div class="t" style="left:4851.9px;top:2708.2px;font-size:17.00px;color:#ffffff;font-weight:bold;">Downloads</div><div class="t" style="left:4989.1px;top:2708.2px;font-size:17.00px;color:#ffffff;font-weight:bold;">Top rated</div><div class="t" style="left:5116.1px;top:2708.2px;font-size:17.00px;color:#ffffff;font-weight:bold;">Featured</div><div class="t" style="left:5237.4px;top:2708.2px;font-size:17.00px;color:#ffffff;font-weight:bold;">Favorites</div><div class="t" style="left:5370.9px;top:2708.2px;font-size:17.00px;color:#ffffff;font-weight:bold;">More</div><div class="t" style="left:4232.3px;top:2823.4px;font-size:17.00px;color:#ffffff;font-weight:bold;">Most viewed</div><div class="t" style="left:4356.1px;top:2823.4px;font-size:17.00px;color:#ffffff;font-weight:bold;">Bookmarks</div><div class="t" style="left:4509.1px;top:2823.1px;font-size:17.60px;color:#a8a8a8;">Dots</div><div class="t" style="left:4243.6px;top:2936.2px;font-size:17.00px;color:#ffffff;font-weight:bold;">Contacts</div><div class="t" style="left:4374.8px;top:2936.2px;font-size:17.00px;color:#ffffff;font-weight:bold;">Search</div><div class="t" style="left:4501.3px;top:2936.2px;font-size:17.00px;color:#ffffff;font-weight:bold;">Recent</div><div class="t" style="left:4606.3px;top:2936.2px;font-size:17.00px;color:#ffffff;font-weight:bold;">Most recent</div><div class="t" style="left:4749.9px;top:2936.2px;font-size:17.00px;color:#ffffff;font-weight:bold;">History</div><div class="t" style="left:4851.9px;top:2936.2px;font-size:17.00px;color:#ffffff;font-weight:bold;">Downloads</div><div class="t" style="left:4989.1px;top:2936.2px;font-size:17.00px;color:#ffffff;font-weight:bold;">Top rated</div><div class="t" style="left:5116.1px;top:2936.2px;font-size:17.00px;color:#ffffff;font-weight:bold;">Featured</div><div class="t" style="left:5237.4px;top:2936.2px;font-size:17.00px;color:#ffffff;font-weight:bold;">Favorites</div><div class="t" style="left:5370.9px;top:2936.2px;font-size:17.00px;color:#ffffff;font-weight:bold;">More</div><div class="t" style="left:4232.3px;top:3050.6px;font-size:17.00px;color:#ffffff;font-weight:bold;">Most viewed</div><div class="t" style="left:4356.1px;top:3050.6px;font-size:17.00px;color:#ffffff;font-weight:bold;">Bookmarks</div><div class="t" style="left:4509.1px;top:3050.3px;font-size:17.60px;color:#858585;">Dots</div><div class="t" style="left:5616.0px;top:1501.4px;font-size:23.03px;color:#ffffff;font-weight:bold;">LISTBOX &amp; LISTVIEW</div><div class="t" style="left:5625.6px;top:1600.5px;font-size:23.94px;color:#e4e4e4;">ListBoxItem1</div><div class="t" style="left:6076.0px;top:1594.1px;font-size:24.01px;color:#e4e4e4;">ListBoxItem3</div><div class="t" style="left:6076.0px;top:1622.5px;font-size:14.08px;color:#8c8c8c;">Detail</div><div class="t" style="left:6521.6px;top:1602.9px;font-size:23.94px;color:#e4e4e4;">ListBoxItem4</div><div class="t" style="left:6798.8px;top:1603.2px;font-size:23.47px;color:#8c8c8c;">Detail</div><div class="t" style="left:5625.6px;top:1691.1px;font-size:23.94px;color:#ffffff;">ListBoxItem1</div><div class="t" style="left:6076.0px;top:1679.3px;font-size:24.01px;color:#ffffff;">ListBoxItem3</div><div class="t" style="left:6076.0px;top:1707.7px;font-size:14.08px;color:#9a9a9a;">Detail</div><div class="t" style="left:6521.6px;top:1687.7px;font-size:23.94px;color:#ffffff;">ListBoxItem4</div><div class="t" style="left:6798.8px;top:1688.0px;font-size:23.47px;color:#9a9a9a;">Detail</div><div class="t" style="left:5625.6px;top:1778.5px;font-size:23.94px;color:#3e3e3e;">ListBoxItem1</div><div class="t" style="left:6076.0px;top:1767.7px;font-size:24.01px;color:#3e3e3e;">ListBoxItem3</div><div class="t" style="left:6076.0px;top:1796.1px;font-size:14.08px;color:#333333;">Detail</div><div class="t" style="left:6521.6px;top:1772.3px;font-size:23.94px;color:#3e3e3e;">ListBoxItem4</div><div class="t" style="left:6798.8px;top:1772.6px;font-size:23.47px;color:#333333;">Detail</div><div class="t" style="left:5625.6px;top:1928.8px;font-size:20.00px;color:#e4e4e4;">ListBoxItem5</div><div class="t" style="left:5756.4px;top:1928.5px;font-size:20.50px;color:#8c8c8c;">Detail</div><div class="t" style="left:5936.2px;top:1926.4px;font-size:21.60px;color:#222222;font-weight:bold;font-family:'Liberation Serif',serif;font-style:italic;">i</div><div class="t" style="left:6074.0px;top:1923.0px;font-size:24.08px;color:#e4e4e4;">ListBoxItem6</div><div class="t" style="left:6245.2px;top:1923.4px;font-size:23.47px;color:#8c8c8c;">Detail</div><div class="t" style="left:6524.8px;top:1914.1px;font-size:24.01px;color:#e4e4e4;">ListBoxItem7</div><div class="t" style="left:6524.8px;top:1942.8px;font-size:14.39px;color:#8c8c8c;">Detail</div><div class="t" style="left:5628.8px;top:2010.8px;font-size:20.00px;color:#ffffff;">ListBoxItem5</div><div class="t" style="left:5759.6px;top:2010.5px;font-size:20.50px;color:#9a9a9a;">Detail</div><div class="t" style="left:5937.4px;top:2008.4px;font-size:21.60px;color:#222222;font-weight:bold;font-family:'Liberation Serif',serif;font-style:italic;">i</div><div class="t" style="left:6074.0px;top:2003.0px;font-size:24.08px;color:#ffffff;">ListBoxItem6</div><div class="t" style="left:6245.2px;top:2003.4px;font-size:23.47px;color:#9a9a9a;">Detail</div><div class="t" style="left:6524.8px;top:1994.9px;font-size:24.01px;color:#ffffff;">ListBoxItem7</div><div class="t" style="left:6524.8px;top:2023.6px;font-size:14.39px;color:#9a9a9a;">Detail</div><div class="t" style="left:5628.8px;top:2086.4px;font-size:20.00px;color:#3e3e3e;">ListBoxItem5</div><div class="t" style="left:5759.6px;top:2086.1px;font-size:20.50px;color:#333333;">Detail</div><div class="t" style="left:5937.4px;top:2084.0px;font-size:21.60px;color:#2c2c2c;font-weight:bold;font-family:'Liberation Serif',serif;font-style:italic;">i</div><div class="t" style="left:6074.0px;top:2083.0px;font-size:24.08px;color:#3e3e3e;">ListBoxItem6</div><div class="t" style="left:6245.2px;top:2083.4px;font-size:23.47px;color:#333333;">Detail</div><div class="t" style="left:6524.8px;top:2078.1px;font-size:24.01px;color:#3e3e3e;">ListBoxItem7</div><div class="t" style="left:6524.8px;top:2106.8px;font-size:14.39px;color:#333333;">Detail</div><div class="t" style="left:5626.4px;top:2219.1px;font-size:24.27px;color:#e4e4e4;">Label13</div><div class="t" style="left:5751.6px;top:2219.2px;font-size:24.16px;color:#e4e4e4;">Label14</div><div class="t" style="left:5884.0px;top:2222.1px;font-size:20.23px;color:#e4e4e4;">Label15</div><div class="t" style="left:6152.0px;top:2222.2px;font-size:18.41px;color:#e4e4e4;font-weight:bold;">ListBoxItem9</div><div class="t" style="left:6284.0px;top:2221.8px;font-size:19.24px;color:#8c8c8c;">Detail</div><div class="t" style="left:6520.8px;top:2217.9px;font-size:24.30px;color:#e4e4e4;">ListBoxItem10</div><div class="t" style="left:5626.4px;top:2298.7px;font-size:24.27px;color:#ffffff;">Label13</div><div class="t" style="left:5751.6px;top:2298.8px;font-size:24.16px;color:#ffffff;">Label14</div><div class="t" style="left:5884.0px;top:2301.7px;font-size:20.23px;color:#ffffff;">Label15</div><div class="t" style="left:6152.0px;top:2302.2px;font-size:18.41px;color:#ffffff;font-weight:bold;">ListBoxItem9</div><div class="t" style="left:6284.0px;top:2301.8px;font-size:19.24px;color:#9a9a9a;">Detail</div><div class="t" style="left:6520.8px;top:2298.1px;font-size:24.30px;color:#ffffff;">ListBoxItem10</div><div class="t" style="left:5626.4px;top:2378.5px;font-size:24.27px;color:#3e3e3e;">Label13</div><div class="t" style="left:5749.2px;top:2378.6px;font-size:24.16px;color:#3e3e3e;">Label14</div><div class="t" style="left:5880.8px;top:2381.5px;font-size:20.23px;color:#3e3e3e;">Label15</div><div class="t" style="left:6152.0px;top:2380.0px;font-size:18.41px;color:#3e3e3e;font-weight:bold;">ListBoxItem9</div><div class="t" style="left:6284.0px;top:2379.6px;font-size:19.24px;color:#333333;">Detail</div><div class="t" style="left:6520.8px;top:2376.5px;font-size:24.30px;color:#3e3e3e;">ListBoxItem10</div></div>
<div class="a" style="left:42px;top:85px;width:1711px;height:17px;background:#434343;"></div>
<div class="a" style="left:42px;top:101px;width:1711px;height:1px;background:#6c6c6c;"></div>
<div class="a" style="left:42px;top:102px;width:17px;height:917px;background:#434343;"></div>
<div class="a" style="left:58px;top:102px;width:1px;height:917px;background:#6c6c6c;"></div>
<svg style="left:0;top:0" width="1813" height="1037" viewBox="0 0 1813 1037" shape-rendering="crispEdges"><rect x="62" y="98" width="1" height="3" fill="#6c6c6c"/><rect x="67" y="98" width="1" height="3" fill="#6c6c6c"/><rect x="72" y="98" width="1" height="3" fill="#6c6c6c"/><rect x="77" y="98" width="1" height="3" fill="#6c6c6c"/><rect x="82" y="98" width="1" height="3" fill="#6c6c6c"/><rect x="87" y="98" width="1" height="3" fill="#6c6c6c"/><rect x="92" y="98" width="1" height="3" fill="#6c6c6c"/><rect x="97" y="98" width="1" height="3" fill="#6c6c6c"/><rect x="102" y="85" width="1" height="16" fill="#6c6c6c"/><rect x="107" y="98" width="1" height="3" fill="#6c6c6c"/><rect x="112" y="98" width="1" height="3" fill="#6c6c6c"/><rect x="117" y="98" width="1" height="3" fill="#6c6c6c"/><rect x="122" y="98" width="1" height="3" fill="#6c6c6c"/><rect x="127" y="98" width="1" height="3" fill="#6c6c6c"/><rect x="132" y="98" width="1" height="3" fill="#6c6c6c"/><rect x="137" y="98" width="1" height="3" fill="#6c6c6c"/><rect x="142" y="98" width="1" height="3" fill="#6c6c6c"/><rect x="147" y="98" width="1" height="3" fill="#6c6c6c"/><rect x="152" y="85" width="1" height="16" fill="#6c6c6c"/><rect x="157" y="98" width="1" height="3" fill="#6c6c6c"/><rect x="162" y="98" width="1" height="3" fill="#6c6c6c"/><rect x="167" y="98" width="1" height="3" fill="#6c6c6c"/><rect x="172" y="98" width="1" height="3" fill="#6c6c6c"/><rect x="177" y="98" width="1" height="3" fill="#6c6c6c"/><rect x="182" y="98" width="1" height="3" fill="#6c6c6c"/><rect x="187" y="98" width="1" height="3" fill="#6c6c6c"/><rect x="192" y="98" width="1" height="3" fill="#6c6c6c"/><rect x="197" y="98" width="1" height="3" fill="#6c6c6c"/><rect x="202" y="85" width="1" height="16" fill="#6c6c6c"/><rect x="207" y="98" width="1" height="3" fill="#6c6c6c"/><rect x="212" y="98" width="1" height="3" fill="#6c6c6c"/><rect x="217" y="98" width="1" height="3" fill="#6c6c6c"/><rect x="222" y="98" width="1" height="3" fill="#6c6c6c"/><rect x="227" y="98" width="1" height="3" fill="#6c6c6c"/><rect x="232" y="98" width="1" height="3" fill="#6c6c6c"/><rect x="237" y="98" width="1" height="3" fill="#6c6c6c"/><rect x="242" y="98" width="1" height="3" fill="#6c6c6c"/><rect x="247" y="98" width="1" height="3" fill="#6c6c6c"/><rect x="252" y="85" width="1" height="16" fill="#6c6c6c"/><rect x="257" y="98" width="1" height="3" fill="#6c6c6c"/><rect x="262" y="98" width="1" height="3" fill="#6c6c6c"/><rect x="267" y="98" width="1" height="3" fill="#6c6c6c"/><rect x="272" y="98" width="1" height="3" fill="#6c6c6c"/><rect x="277" y="98" width="1" height="3" fill="#6c6c6c"/><rect x="282" y="98" width="1" height="3" fill="#6c6c6c"/><rect x="287" y="98" width="1" height="3" fill="#6c6c6c"/><rect x="292" y="98" width="1" height="3" fill="#6c6c6c"/><rect x="297" y="98" width="1" height="3" fill="#6c6c6c"/><rect x="302" y="85" width="1" height="16" fill="#6c6c6c"/><rect x="307" y="98" width="1" height="3" fill="#6c6c6c"/><rect x="312" y="98" width="1" height="3" fill="#6c6c6c"/><rect x="317" y="98" width="1" height="3" fill="#6c6c6c"/><rect x="322" y="98" width="1" height="3" fill="#6c6c6c"/><rect x="327" y="98" width="1" height="3" fill="#6c6c6c"/><rect x="332" y="98" width="1" height="3" fill="#6c6c6c"/><rect x="337" y="98" width="1" height="3" fill="#6c6c6c"/><rect x="342" y="98" width="1" height="3" fill="#6c6c6c"/><rect x="347" y="98" width="1" height="3" fill="#6c6c6c"/><rect x="352" y="85" width="1" height="16" fill="#6c6c6c"/><rect x="357" y="98" width="1" height="3" fill="#6c6c6c"/><rect x="362" y="98" width="1" height="3" fill="#6c6c6c"/><rect x="367" y="98" width="1" height="3" fill="#6c6c6c"/><rect x="372" y="98" width="1" height="3" fill="#6c6c6c"/><rect x="377" y="98" width="1" height="3" fill="#6c6c6c"/><rect x="382" y="98" width="1" height="3" fill="#6c6c6c"/><rect x="387" y="98" width="1" height="3" fill="#6c6c6c"/><rect x="392" y="98" width="1" height="3" fill="#6c6c6c"/><rect x="397" y="98" width="1" height="3" fill="#6c6c6c"/><rect x="402" y="85" width="1" height="16" fill="#6c6c6c"/><rect x="407" y="98" width="1" height="3" fill="#6c6c6c"/><rect x="412" y="98" width="1" height="3" fill="#6c6c6c"/><rect x="417" y="98" width="1" height="3" fill="#6c6c6c"/><rect x="422" y="98" width="1" height="3" fill="#6c6c6c"/><rect x="427" y="98" width="1" height="3" fill="#6c6c6c"/><rect x="432" y="98" width="1" height="3" fill="#6c6c6c"/><rect x="437" y="98" width="1" height="3" fill="#6c6c6c"/><rect x="442" y="98" width="1" height="3" fill="#6c6c6c"/><rect x="447" y="98" width="1" height="3" fill="#6c6c6c"/><rect x="452" y="85" width="1" height="16" fill="#6c6c6c"/><rect x="457" y="98" width="1" height="3" fill="#6c6c6c"/><rect x="462" y="98" width="1" height="3" fill="#6c6c6c"/><rect x="467" y="98" width="1" height="3" fill="#6c6c6c"/><rect x="472" y="98" width="1" height="3" fill="#6c6c6c"/><rect x="477" y="98" width="1" height="3" fill="#6c6c6c"/><rect x="482" y="98" width="1" height="3" fill="#6c6c6c"/><rect x="487" y="98" width="1" height="3" fill="#6c6c6c"/><rect x="492" y="98" width="1" height="3" fill="#6c6c6c"/><rect x="497" y="98" width="1" height="3" fill="#6c6c6c"/><rect x="502" y="85" width="1" height="16" fill="#6c6c6c"/><rect x="507" y="98" width="1" height="3" fill="#6c6c6c"/><rect x="512" y="98" width="1" height="3" fill="#6c6c6c"/><rect x="517" y="98" width="1" height="3" fill="#6c6c6c"/><rect x="522" y="98" width="1" height="3" fill="#6c6c6c"/><rect x="527" y="98" width="1" height="3" fill="#6c6c6c"/><rect x="532" y="98" width="1" height="3" fill="#6c6c6c"/><rect x="537" y="98" width="1" height="3" fill="#6c6c6c"/><rect x="542" y="98" width="1" height="3" fill="#6c6c6c"/><rect x="547" y="98" width="1" height="3" fill="#6c6c6c"/><rect x="552" y="85" width="1" height="16" fill="#6c6c6c"/><rect x="557" y="98" width="1" height="3" fill="#6c6c6c"/><rect x="562" y="98" width="1" height="3" fill="#6c6c6c"/><rect x="567" y="98" width="1" height="3" fill="#6c6c6c"/><rect x="572" y="98" width="1" height="3" fill="#6c6c6c"/><rect x="577" y="98" width="1" height="3" fill="#6c6c6c"/><rect x="582" y="98" width="1" height="3" fill="#6c6c6c"/><rect x="587" y="98" width="1" height="3" fill="#6c6c6c"/><rect x="592" y="98" width="1" height="3" fill="#6c6c6c"/><rect x="597" y="98" width="1" height="3" fill="#6c6c6c"/><rect x="602" y="85" width="1" height="16" fill="#6c6c6c"/><rect x="607" y="98" width="1" height="3" fill="#6c6c6c"/><rect x="612" y="98" width="1" height="3" fill="#6c6c6c"/><rect x="617" y="98" width="1" height="3" fill="#6c6c6c"/><rect x="622" y="98" width="1" height="3" fill="#6c6c6c"/><rect x="627" y="98" width="1" height="3" fill="#6c6c6c"/><rect x="632" y="98" width="1" height="3" fill="#6c6c6c"/><rect x="637" y="98" width="1" height="3" fill="#6c6c6c"/><rect x="642" y="98" width="1" height="3" fill="#6c6c6c"/><rect x="647" y="98" width="1" height="3" fill="#6c6c6c"/><rect x="652" y="85" width="1" height="16" fill="#6c6c6c"/><rect x="657" y="98" width="1" height="3" fill="#6c6c6c"/><rect x="662" y="98" width="1" height="3" fill="#6c6c6c"/><rect x="667" y="98" width="1" height="3" fill="#6c6c6c"/><rect x="672" y="98" width="1" height="3" fill="#6c6c6c"/><rect x="677" y="98" width="1" height="3" fill="#6c6c6c"/><rect x="682" y="98" width="1" height="3" fill="#6c6c6c"/><rect x="687" y="98" width="1" height="3" fill="#6c6c6c"/><rect x="692" y="98" width="1" height="3" fill="#6c6c6c"/><rect x="697" y="98" width="1" height="3" fill="#6c6c6c"/><rect x="702" y="85" width="1" height="16" fill="#6c6c6c"/><rect x="707" y="98" width="1" height="3" fill="#6c6c6c"/><rect x="712" y="98" width="1" height="3" fill="#6c6c6c"/><rect x="717" y="98" width="1" height="3" fill="#6c6c6c"/><rect x="722" y="98" width="1" height="3" fill="#6c6c6c"/><rect x="727" y="98" width="1" height="3" fill="#6c6c6c"/><rect x="732" y="98" width="1" height="3" fill="#6c6c6c"/><rect x="737" y="98" width="1" height="3" fill="#6c6c6c"/><rect x="742" y="98" width="1" height="3" fill="#6c6c6c"/><rect x="747" y="98" width="1" height="3" fill="#6c6c6c"/><rect x="752" y="85" width="1" height="16" fill="#6c6c6c"/><rect x="757" y="98" width="1" height="3" fill="#6c6c6c"/><rect x="762" y="98" width="1" height="3" fill="#6c6c6c"/><rect x="767" y="98" width="1" height="3" fill="#6c6c6c"/><rect x="772" y="98" width="1" height="3" fill="#6c6c6c"/><rect x="777" y="98" width="1" height="3" fill="#6c6c6c"/><rect x="782" y="98" width="1" height="3" fill="#6c6c6c"/><rect x="787" y="98" width="1" height="3" fill="#6c6c6c"/><rect x="792" y="98" width="1" height="3" fill="#6c6c6c"/><rect x="797" y="98" width="1" height="3" fill="#6c6c6c"/><rect x="802" y="85" width="1" height="16" fill="#6c6c6c"/><rect x="807" y="98" width="1" height="3" fill="#6c6c6c"/><rect x="812" y="98" width="1" height="3" fill="#6c6c6c"/><rect x="817" y="98" width="1" height="3" fill="#6c6c6c"/><rect x="822" y="98" width="1" height="3" fill="#6c6c6c"/><rect x="827" y="98" width="1" height="3" fill="#6c6c6c"/><rect x="832" y="98" width="1" height="3" fill="#6c6c6c"/><rect x="837" y="98" width="1" height="3" fill="#6c6c6c"/><rect x="842" y="98" width="1" height="3" fill="#6c6c6c"/><rect x="847" y="98" width="1" height="3" fill="#6c6c6c"/><rect x="852" y="85" width="1" height="16" fill="#6c6c6c"/><rect x="857" y="98" width="1" height="3" fill="#6c6c6c"/><rect x="862" y="98" width="1" height="3" fill="#6c6c6c"/><rect x="867" y="98" width="1" height="3" fill="#6c6c6c"/><rect x="872" y="98" width="1" height="3" fill="#6c6c6c"/><rect x="877" y="98" width="1" height="3" fill="#6c6c6c"/><rect x="882" y="98" width="1" height="3" fill="#6c6c6c"/><rect x="887" y="98" width="1" height="3" fill="#6c6c6c"/><rect x="892" y="98" width="1" height="3" fill="#6c6c6c"/><rect x="897" y="98" width="1" height="3" fill="#6c6c6c"/><rect x="902" y="85" width="1" height="16" fill="#6c6c6c"/><rect x="907" y="98" width="1" height="3" fill="#6c6c6c"/><rect x="912" y="98" width="1" height="3" fill="#6c6c6c"/><rect x="917" y="98" width="1" height="3" fill="#6c6c6c"/><rect x="922" y="98" width="1" height="3" fill="#6c6c6c"/><rect x="927" y="98" width="1" height="3" fill="#6c6c6c"/><rect x="932" y="98" width="1" height="3" fill="#6c6c6c"/><rect x="937" y="98" width="1" height="3" fill="#6c6c6c"/><rect x="942" y="98" width="1" height="3" fill="#6c6c6c"/><rect x="947" y="98" width="1" height="3" fill="#6c6c6c"/><rect x="952" y="85" width="1" height="16" fill="#6c6c6c"/><rect x="957" y="98" width="1" height="3" fill="#6c6c6c"/><rect x="962" y="98" width="1" height="3" fill="#6c6c6c"/><rect x="967" y="98" width="1" height="3" fill="#6c6c6c"/><rect x="972" y="98" width="1" height="3" fill="#6c6c6c"/><rect x="977" y="98" width="1" height="3" fill="#6c6c6c"/><rect x="982" y="98" width="1" height="3" fill="#6c6c6c"/><rect x="987" y="98" width="1" height="3" fill="#6c6c6c"/><rect x="992" y="98" width="1" height="3" fill="#6c6c6c"/><rect x="997" y="98" width="1" height="3" fill="#6c6c6c"/><rect x="1002" y="85" width="1" height="16" fill="#6c6c6c"/><rect x="1007" y="98" width="1" height="3" fill="#6c6c6c"/><rect x="1012" y="98" width="1" height="3" fill="#6c6c6c"/><rect x="1017" y="98" width="1" height="3" fill="#6c6c6c"/><rect x="1022" y="98" width="1" height="3" fill="#6c6c6c"/><rect x="1027" y="98" width="1" height="3" fill="#6c6c6c"/><rect x="1032" y="98" width="1" height="3" fill="#6c6c6c"/><rect x="1037" y="98" width="1" height="3" fill="#6c6c6c"/><rect x="1042" y="98" width="1" height="3" fill="#6c6c6c"/><rect x="1047" y="98" width="1" height="3" fill="#6c6c6c"/><rect x="1052" y="85" width="1" height="16" fill="#6c6c6c"/><rect x="1057" y="98" width="1" height="3" fill="#6c6c6c"/><rect x="1062" y="98" width="1" height="3" fill="#6c6c6c"/><rect x="1067" y="98" width="1" height="3" fill="#6c6c6c"/><rect x="1072" y="98" width="1" height="3" fill="#6c6c6c"/><rect x="1077" y="98" width="1" height="3" fill="#6c6c6c"/><rect x="1082" y="98" width="1" height="3" fill="#6c6c6c"/><rect x="1087" y="98" width="1" height="3" fill="#6c6c6c"/><rect x="1092" y="98" width="1" height="3" fill="#6c6c6c"/><rect x="1097" y="98" width="1" height="3" fill="#6c6c6c"/><rect x="1102" y="85" width="1" height="16" fill="#6c6c6c"/><rect x="1107" y="98" width="1" height="3" fill="#6c6c6c"/><rect x="1112" y="98" width="1" height="3" fill="#6c6c6c"/><rect x="1117" y="98" width="1" height="3" fill="#6c6c6c"/><rect x="1122" y="98" width="1" height="3" fill="#6c6c6c"/><rect x="1127" y="98" width="1" height="3" fill="#6c6c6c"/><rect x="1132" y="98" width="1" height="3" fill="#6c6c6c"/><rect x="1137" y="98" width="1" height="3" fill="#6c6c6c"/><rect x="1142" y="98" width="1" height="3" fill="#6c6c6c"/><rect x="1147" y="98" width="1" height="3" fill="#6c6c6c"/><rect x="1152" y="85" width="1" height="16" fill="#6c6c6c"/><rect x="1157" y="98" width="1" height="3" fill="#6c6c6c"/><rect x="1162" y="98" width="1" height="3" fill="#6c6c6c"/><rect x="1167" y="98" width="1" height="3" fill="#6c6c6c"/><rect x="1172" y="98" width="1" height="3" fill="#6c6c6c"/><rect x="1177" y="98" width="1" height="3" fill="#6c6c6c"/><rect x="1182" y="98" width="1" height="3" fill="#6c6c6c"/><rect x="1187" y="98" width="1" height="3" fill="#6c6c6c"/><rect x="1192" y="98" width="1" height="3" fill="#6c6c6c"/><rect x="1197" y="98" width="1" height="3" fill="#6c6c6c"/><rect x="1202" y="85" width="1" height="16" fill="#6c6c6c"/><rect x="1207" y="98" width="1" height="3" fill="#6c6c6c"/><rect x="1212" y="98" width="1" height="3" fill="#6c6c6c"/><rect x="1217" y="98" width="1" height="3" fill="#6c6c6c"/><rect x="1222" y="98" width="1" height="3" fill="#6c6c6c"/><rect x="1227" y="98" width="1" height="3" fill="#6c6c6c"/><rect x="1232" y="98" width="1" height="3" fill="#6c6c6c"/><rect x="1237" y="98" width="1" height="3" fill="#6c6c6c"/><rect x="1242" y="98" width="1" height="3" fill="#6c6c6c"/><rect x="1247" y="98" width="1" height="3" fill="#6c6c6c"/><rect x="1252" y="85" width="1" height="16" fill="#6c6c6c"/><rect x="1257" y="98" width="1" height="3" fill="#6c6c6c"/><rect x="1262" y="98" width="1" height="3" fill="#6c6c6c"/><rect x="1267" y="98" width="1" height="3" fill="#6c6c6c"/><rect x="1272" y="98" width="1" height="3" fill="#6c6c6c"/><rect x="1277" y="98" width="1" height="3" fill="#6c6c6c"/><rect x="1282" y="98" width="1" height="3" fill="#6c6c6c"/><rect x="1287" y="98" width="1" height="3" fill="#6c6c6c"/><rect x="1292" y="98" width="1" height="3" fill="#6c6c6c"/><rect x="1297" y="98" width="1" height="3" fill="#6c6c6c"/><rect x="1302" y="85" width="1" height="16" fill="#6c6c6c"/><rect x="1307" y="98" width="1" height="3" fill="#6c6c6c"/><rect x="1312" y="98" width="1" height="3" fill="#6c6c6c"/><rect x="1317" y="98" width="1" height="3" fill="#6c6c6c"/><rect x="1322" y="98" width="1" height="3" fill="#6c6c6c"/><rect x="1327" y="98" width="1" height="3" fill="#6c6c6c"/><rect x="1332" y="98" width="1" height="3" fill="#6c6c6c"/><rect x="1337" y="98" width="1" height="3" fill="#6c6c6c"/><rect x="1342" y="98" width="1" height="3" fill="#6c6c6c"/><rect x="1347" y="98" width="1" height="3" fill="#6c6c6c"/><rect x="1352" y="85" width="1" height="16" fill="#6c6c6c"/><rect x="1357" y="98" width="1" height="3" fill="#6c6c6c"/><rect x="1362" y="98" width="1" height="3" fill="#6c6c6c"/><rect x="1367" y="98" width="1" height="3" fill="#6c6c6c"/><rect x="1372" y="98" width="1" height="3" fill="#6c6c6c"/><rect x="1377" y="98" width="1" height="3" fill="#6c6c6c"/><rect x="1382" y="98" width="1" height="3" fill="#6c6c6c"/><rect x="1387" y="98" width="1" height="3" fill="#6c6c6c"/><rect x="1392" y="98" width="1" height="3" fill="#6c6c6c"/><rect x="1397" y="98" width="1" height="3" fill="#6c6c6c"/><rect x="1402" y="85" width="1" height="16" fill="#6c6c6c"/><rect x="1407" y="98" width="1" height="3" fill="#6c6c6c"/><rect x="1412" y="98" width="1" height="3" fill="#6c6c6c"/><rect x="1417" y="98" width="1" height="3" fill="#6c6c6c"/><rect x="1422" y="98" width="1" height="3" fill="#6c6c6c"/><rect x="1427" y="98" width="1" height="3" fill="#6c6c6c"/><rect x="1432" y="98" width="1" height="3" fill="#6c6c6c"/><rect x="1437" y="98" width="1" height="3" fill="#6c6c6c"/><rect x="1442" y="98" width="1" height="3" fill="#6c6c6c"/><rect x="1447" y="98" width="1" height="3" fill="#6c6c6c"/><rect x="1452" y="85" width="1" height="16" fill="#6c6c6c"/><rect x="1457" y="98" width="1" height="3" fill="#6c6c6c"/><rect x="1462" y="98" width="1" height="3" fill="#6c6c6c"/><rect x="1467" y="98" width="1" height="3" fill="#6c6c6c"/><rect x="1472" y="98" width="1" height="3" fill="#6c6c6c"/><rect x="1477" y="98" width="1" height="3" fill="#6c6c6c"/><rect x="1482" y="98" width="1" height="3" fill="#6c6c6c"/><rect x="1487" y="98" width="1" height="3" fill="#6c6c6c"/><rect x="1492" y="98" width="1" height="3" fill="#6c6c6c"/><rect x="1497" y="98" width="1" height="3" fill="#6c6c6c"/><rect x="1502" y="85" width="1" height="16" fill="#6c6c6c"/><rect x="1507" y="98" width="1" height="3" fill="#6c6c6c"/><rect x="1512" y="98" width="1" height="3" fill="#6c6c6c"/><rect x="1517" y="98" width="1" height="3" fill="#6c6c6c"/><rect x="1522" y="98" width="1" height="3" fill="#6c6c6c"/><rect x="1527" y="98" width="1" height="3" fill="#6c6c6c"/><rect x="1532" y="98" width="1" height="3" fill="#6c6c6c"/><rect x="1537" y="98" width="1" height="3" fill="#6c6c6c"/><rect x="1542" y="98" width="1" height="3" fill="#6c6c6c"/><rect x="1547" y="98" width="1" height="3" fill="#6c6c6c"/><rect x="1552" y="85" width="1" height="16" fill="#6c6c6c"/><rect x="1557" y="98" width="1" height="3" fill="#6c6c6c"/><rect x="1562" y="98" width="1" height="3" fill="#6c6c6c"/><rect x="1567" y="98" width="1" height="3" fill="#6c6c6c"/><rect x="1572" y="98" width="1" height="3" fill="#6c6c6c"/><rect x="1577" y="98" width="1" height="3" fill="#6c6c6c"/><rect x="1582" y="98" width="1" height="3" fill="#6c6c6c"/><rect x="1587" y="98" width="1" height="3" fill="#6c6c6c"/><rect x="1592" y="98" width="1" height="3" fill="#6c6c6c"/><rect x="1597" y="98" width="1" height="3" fill="#6c6c6c"/><rect x="1602" y="85" width="1" height="16" fill="#6c6c6c"/><rect x="1607" y="98" width="1" height="3" fill="#6c6c6c"/><rect x="1612" y="98" width="1" height="3" fill="#6c6c6c"/><rect x="1617" y="98" width="1" height="3" fill="#6c6c6c"/><rect x="1622" y="98" width="1" height="3" fill="#6c6c6c"/><rect x="1627" y="98" width="1" height="3" fill="#6c6c6c"/><rect x="1632" y="98" width="1" height="3" fill="#6c6c6c"/><rect x="1637" y="98" width="1" height="3" fill="#6c6c6c"/><rect x="1642" y="98" width="1" height="3" fill="#6c6c6c"/><rect x="1647" y="98" width="1" height="3" fill="#6c6c6c"/><rect x="1652" y="85" width="1" height="16" fill="#6c6c6c"/><rect x="1657" y="98" width="1" height="3" fill="#6c6c6c"/><rect x="1662" y="98" width="1" height="3" fill="#6c6c6c"/><rect x="1667" y="98" width="1" height="3" fill="#6c6c6c"/><rect x="1672" y="98" width="1" height="3" fill="#6c6c6c"/><rect x="1677" y="98" width="1" height="3" fill="#6c6c6c"/><rect x="1682" y="98" width="1" height="3" fill="#6c6c6c"/><rect x="1687" y="98" width="1" height="3" fill="#6c6c6c"/><rect x="1692" y="98" width="1" height="3" fill="#6c6c6c"/><rect x="1697" y="98" width="1" height="3" fill="#6c6c6c"/><rect x="1702" y="85" width="1" height="16" fill="#6c6c6c"/><rect x="1707" y="98" width="1" height="3" fill="#6c6c6c"/><rect x="1712" y="98" width="1" height="3" fill="#6c6c6c"/><rect x="1717" y="98" width="1" height="3" fill="#6c6c6c"/><rect x="1722" y="98" width="1" height="3" fill="#6c6c6c"/><rect x="1727" y="98" width="1" height="3" fill="#6c6c6c"/><rect x="1732" y="98" width="1" height="3" fill="#6c6c6c"/><rect x="1737" y="98" width="1" height="3" fill="#6c6c6c"/><rect x="1742" y="98" width="1" height="3" fill="#6c6c6c"/><rect x="1747" y="98" width="1" height="3" fill="#6c6c6c"/><rect x="1752" y="85" width="1" height="16" fill="#6c6c6c"/><rect x="42" y="112" width="16" height="1" fill="#6c6c6c"/><rect x="55" y="117" width="3" height="1" fill="#6c6c6c"/><rect x="55" y="122" width="3" height="1" fill="#6c6c6c"/><rect x="55" y="127" width="3" height="1" fill="#6c6c6c"/><rect x="55" y="132" width="3" height="1" fill="#6c6c6c"/><rect x="55" y="137" width="3" height="1" fill="#6c6c6c"/><rect x="55" y="142" width="3" height="1" fill="#6c6c6c"/><rect x="55" y="147" width="3" height="1" fill="#6c6c6c"/><rect x="55" y="152" width="3" height="1" fill="#6c6c6c"/><rect x="55" y="157" width="3" height="1" fill="#6c6c6c"/><rect x="42" y="162" width="16" height="1" fill="#6c6c6c"/><rect x="55" y="167" width="3" height="1" fill="#6c6c6c"/><rect x="55" y="172" width="3" height="1" fill="#6c6c6c"/><rect x="55" y="177" width="3" height="1" fill="#6c6c6c"/><rect x="55" y="182" width="3" height="1" fill="#6c6c6c"/><rect x="55" y="187" width="3" height="1" fill="#6c6c6c"/><rect x="55" y="192" width="3" height="1" fill="#6c6c6c"/><rect x="55" y="197" width="3" height="1" fill="#6c6c6c"/><rect x="55" y="202" width="3" height="1" fill="#6c6c6c"/><rect x="55" y="207" width="3" height="1" fill="#6c6c6c"/><rect x="42" y="212" width="16" height="1" fill="#6c6c6c"/><rect x="55" y="217" width="3" height="1" fill="#6c6c6c"/><rect x="55" y="222" width="3" height="1" fill="#6c6c6c"/><rect x="55" y="227" width="3" height="1" fill="#6c6c6c"/><rect x="55" y="232" width="3" height="1" fill="#6c6c6c"/><rect x="55" y="237" width="3" height="1" fill="#6c6c6c"/><rect x="55" y="242" width="3" height="1" fill="#6c6c6c"/><rect x="55" y="247" width="3" height="1" fill="#6c6c6c"/><rect x="55" y="252" width="3" height="1" fill="#6c6c6c"/><rect x="55" y="257" width="3" height="1" fill="#6c6c6c"/><rect x="42" y="262" width="16" height="1" fill="#6c6c6c"/><rect x="55" y="267" width="3" height="1" fill="#6c6c6c"/><rect x="55" y="272" width="3" height="1" fill="#6c6c6c"/><rect x="55" y="277" width="3" height="1" fill="#6c6c6c"/><rect x="55" y="282" width="3" height="1" fill="#6c6c6c"/><rect x="55" y="287" width="3" height="1" fill="#6c6c6c"/><rect x="55" y="292" width="3" height="1" fill="#6c6c6c"/><rect x="55" y="297" width="3" height="1" fill="#6c6c6c"/><rect x="55" y="302" width="3" height="1" fill="#6c6c6c"/><rect x="55" y="307" width="3" height="1" fill="#6c6c6c"/><rect x="42" y="312" width="16" height="1" fill="#6c6c6c"/><rect x="55" y="317" width="3" height="1" fill="#6c6c6c"/><rect x="55" y="322" width="3" height="1" fill="#6c6c6c"/><rect x="55" y="327" width="3" height="1" fill="#6c6c6c"/><rect x="55" y="332" width="3" height="1" fill="#6c6c6c"/><rect x="55" y="337" width="3" height="1" fill="#6c6c6c"/><rect x="55" y="342" width="3" height="1" fill="#6c6c6c"/><rect x="55" y="347" width="3" height="1" fill="#6c6c6c"/><rect x="55" y="352" width="3" height="1" fill="#6c6c6c"/><rect x="55" y="357" width="3" height="1" fill="#6c6c6c"/><rect x="42" y="362" width="16" height="1" fill="#6c6c6c"/><rect x="55" y="367" width="3" height="1" fill="#6c6c6c"/><rect x="55" y="372" width="3" height="1" fill="#6c6c6c"/><rect x="55" y="377" width="3" height="1" fill="#6c6c6c"/><rect x="55" y="382" width="3" height="1" fill="#6c6c6c"/><rect x="55" y="387" width="3" height="1" fill="#6c6c6c"/><rect x="55" y="392" width="3" height="1" fill="#6c6c6c"/><rect x="55" y="397" width="3" height="1" fill="#6c6c6c"/><rect x="55" y="402" width="3" height="1" fill="#6c6c6c"/><rect x="55" y="407" width="3" height="1" fill="#6c6c6c"/><rect x="42" y="412" width="16" height="1" fill="#6c6c6c"/><rect x="55" y="417" width="3" height="1" fill="#6c6c6c"/><rect x="55" y="422" width="3" height="1" fill="#6c6c6c"/><rect x="55" y="427" width="3" height="1" fill="#6c6c6c"/><rect x="55" y="432" width="3" height="1" fill="#6c6c6c"/><rect x="55" y="437" width="3" height="1" fill="#6c6c6c"/><rect x="55" y="442" width="3" height="1" fill="#6c6c6c"/><rect x="55" y="447" width="3" height="1" fill="#6c6c6c"/><rect x="55" y="452" width="3" height="1" fill="#6c6c6c"/><rect x="55" y="457" width="3" height="1" fill="#6c6c6c"/><rect x="42" y="462" width="16" height="1" fill="#6c6c6c"/><rect x="55" y="467" width="3" height="1" fill="#6c6c6c"/><rect x="55" y="472" width="3" height="1" fill="#6c6c6c"/><rect x="55" y="477" width="3" height="1" fill="#6c6c6c"/><rect x="55" y="482" width="3" height="1" fill="#6c6c6c"/><rect x="55" y="487" width="3" height="1" fill="#6c6c6c"/><rect x="55" y="492" width="3" height="1" fill="#6c6c6c"/><rect x="55" y="497" width="3" height="1" fill="#6c6c6c"/><rect x="55" y="502" width="3" height="1" fill="#6c6c6c"/><rect x="55" y="507" width="3" height="1" fill="#6c6c6c"/><rect x="42" y="512" width="16" height="1" fill="#6c6c6c"/><rect x="55" y="517" width="3" height="1" fill="#6c6c6c"/><rect x="55" y="522" width="3" height="1" fill="#6c6c6c"/><rect x="55" y="527" width="3" height="1" fill="#6c6c6c"/><rect x="55" y="532" width="3" height="1" fill="#6c6c6c"/><rect x="55" y="537" width="3" height="1" fill="#6c6c6c"/><rect x="55" y="542" width="3" height="1" fill="#6c6c6c"/><rect x="55" y="547" width="3" height="1" fill="#6c6c6c"/><rect x="55" y="552" width="3" height="1" fill="#6c6c6c"/><rect x="55" y="557" width="3" height="1" fill="#6c6c6c"/><rect x="42" y="562" width="16" height="1" fill="#6c6c6c"/><rect x="55" y="567" width="3" height="1" fill="#6c6c6c"/><rect x="55" y="572" width="3" height="1" fill="#6c6c6c"/><rect x="55" y="577" width="3" height="1" fill="#6c6c6c"/><rect x="55" y="582" width="3" height="1" fill="#6c6c6c"/><rect x="55" y="587" width="3" height="1" fill="#6c6c6c"/><rect x="55" y="592" width="3" height="1" fill="#6c6c6c"/><rect x="55" y="597" width="3" height="1" fill="#6c6c6c"/><rect x="55" y="602" width="3" height="1" fill="#6c6c6c"/><rect x="55" y="607" width="3" height="1" fill="#6c6c6c"/><rect x="42" y="612" width="16" height="1" fill="#6c6c6c"/><rect x="55" y="617" width="3" height="1" fill="#6c6c6c"/><rect x="55" y="622" width="3" height="1" fill="#6c6c6c"/><rect x="55" y="627" width="3" height="1" fill="#6c6c6c"/><rect x="55" y="632" width="3" height="1" fill="#6c6c6c"/><rect x="55" y="637" width="3" height="1" fill="#6c6c6c"/><rect x="55" y="642" width="3" height="1" fill="#6c6c6c"/><rect x="55" y="647" width="3" height="1" fill="#6c6c6c"/><rect x="55" y="652" width="3" height="1" fill="#6c6c6c"/><rect x="55" y="657" width="3" height="1" fill="#6c6c6c"/><rect x="42" y="662" width="16" height="1" fill="#6c6c6c"/><rect x="55" y="667" width="3" height="1" fill="#6c6c6c"/><rect x="55" y="672" width="3" height="1" fill="#6c6c6c"/><rect x="55" y="677" width="3" height="1" fill="#6c6c6c"/><rect x="55" y="682" width="3" height="1" fill="#6c6c6c"/><rect x="55" y="687" width="3" height="1" fill="#6c6c6c"/><rect x="55" y="692" width="3" height="1" fill="#6c6c6c"/><rect x="55" y="697" width="3" height="1" fill="#6c6c6c"/><rect x="55" y="702" width="3" height="1" fill="#6c6c6c"/><rect x="55" y="707" width="3" height="1" fill="#6c6c6c"/><rect x="42" y="712" width="16" height="1" fill="#6c6c6c"/><rect x="55" y="717" width="3" height="1" fill="#6c6c6c"/><rect x="55" y="722" width="3" height="1" fill="#6c6c6c"/><rect x="55" y="727" width="3" height="1" fill="#6c6c6c"/><rect x="55" y="732" width="3" height="1" fill="#6c6c6c"/><rect x="55" y="737" width="3" height="1" fill="#6c6c6c"/><rect x="55" y="742" width="3" height="1" fill="#6c6c6c"/><rect x="55" y="747" width="3" height="1" fill="#6c6c6c"/><rect x="55" y="752" width="3" height="1" fill="#6c6c6c"/><rect x="55" y="757" width="3" height="1" fill="#6c6c6c"/><rect x="42" y="762" width="16" height="1" fill="#6c6c6c"/><rect x="55" y="767" width="3" height="1" fill="#6c6c6c"/><rect x="55" y="772" width="3" height="1" fill="#6c6c6c"/><rect x="55" y="777" width="3" height="1" fill="#6c6c6c"/><rect x="55" y="782" width="3" height="1" fill="#6c6c6c"/><rect x="55" y="787" width="3" height="1" fill="#6c6c6c"/><rect x="55" y="792" width="3" height="1" fill="#6c6c6c"/><rect x="55" y="797" width="3" height="1" fill="#6c6c6c"/><rect x="55" y="802" width="3" height="1" fill="#6c6c6c"/><rect x="55" y="807" width="3" height="1" fill="#6c6c6c"/><rect x="42" y="812" width="16" height="1" fill="#6c6c6c"/><rect x="55" y="817" width="3" height="1" fill="#6c6c6c"/><rect x="55" y="822" width="3" height="1" fill="#6c6c6c"/><rect x="55" y="827" width="3" height="1" fill="#6c6c6c"/><rect x="55" y="832" width="3" height="1" fill="#6c6c6c"/><rect x="55" y="837" width="3" height="1" fill="#6c6c6c"/><rect x="55" y="842" width="3" height="1" fill="#6c6c6c"/><rect x="55" y="847" width="3" height="1" fill="#6c6c6c"/><rect x="55" y="852" width="3" height="1" fill="#6c6c6c"/><rect x="55" y="857" width="3" height="1" fill="#6c6c6c"/><rect x="42" y="862" width="16" height="1" fill="#6c6c6c"/><rect x="55" y="867" width="3" height="1" fill="#6c6c6c"/><rect x="55" y="872" width="3" height="1" fill="#6c6c6c"/><rect x="55" y="877" width="3" height="1" fill="#6c6c6c"/><rect x="55" y="882" width="3" height="1" fill="#6c6c6c"/><rect x="55" y="887" width="3" height="1" fill="#6c6c6c"/><rect x="55" y="892" width="3" height="1" fill="#6c6c6c"/><rect x="55" y="897" width="3" height="1" fill="#6c6c6c"/><rect x="55" y="902" width="3" height="1" fill="#6c6c6c"/><rect x="55" y="907" width="3" height="1" fill="#6c6c6c"/><rect x="42" y="912" width="16" height="1" fill="#6c6c6c"/><rect x="55" y="917" width="3" height="1" fill="#6c6c6c"/><rect x="55" y="922" width="3" height="1" fill="#6c6c6c"/><rect x="55" y="927" width="3" height="1" fill="#6c6c6c"/><rect x="55" y="932" width="3" height="1" fill="#6c6c6c"/><rect x="55" y="937" width="3" height="1" fill="#6c6c6c"/><rect x="55" y="942" width="3" height="1" fill="#6c6c6c"/><rect x="55" y="947" width="3" height="1" fill="#6c6c6c"/><rect x="55" y="952" width="3" height="1" fill="#6c6c6c"/><rect x="55" y="957" width="3" height="1" fill="#6c6c6c"/><rect x="42" y="962" width="16" height="1" fill="#6c6c6c"/><rect x="55" y="967" width="3" height="1" fill="#6c6c6c"/><rect x="55" y="972" width="3" height="1" fill="#6c6c6c"/><rect x="55" y="977" width="3" height="1" fill="#6c6c6c"/><rect x="55" y="982" width="3" height="1" fill="#6c6c6c"/><rect x="55" y="987" width="3" height="1" fill="#6c6c6c"/><rect x="55" y="992" width="3" height="1" fill="#6c6c6c"/><rect x="55" y="997" width="3" height="1" fill="#6c6c6c"/><rect x="55" y="1002" width="3" height="1" fill="#6c6c6c"/><rect x="55" y="1007" width="3" height="1" fill="#6c6c6c"/><rect x="42" y="1012" width="16" height="1" fill="#6c6c6c"/><rect x="55" y="1017" width="3" height="1" fill="#6c6c6c"/><rect x="55" y="107" width="3" height="1" fill="#6c6c6c"/><rect x="55" y="102" width="3" height="1" fill="#6c6c6c"/><rect x="58" y="113" width="1" height="13" fill="#f4f4f4"/><rect x="58" y="248" width="1" height="255" fill="#f4f4f4"/><rect x="58" y="907" width="1" height="102" fill="#f4f4f4"/></svg>
<div class="t" style="left:54.5px;top:91px;font-size:10.3px;color:#b9b9b9;letter-spacing:0.1px">2000</div>
<div class="t" style="left:104.5px;top:91px;font-size:10.3px;color:#b9b9b9;letter-spacing:0.1px">2200</div>
<div class="t" style="left:154.5px;top:91px;font-size:10.3px;color:#b9b9b9;letter-spacing:0.1px">2400</div>
<div class="t" style="left:204.5px;top:91px;font-size:10.3px;color:#b9b9b9;letter-spacing:0.1px">2600</div>
<div class="t" style="left:254.5px;top:91px;font-size:10.3px;color:#b9b9b9;letter-spacing:0.1px">2800</div>
<div class="t" style="left:304.5px;top:91px;font-size:10.3px;color:#b9b9b9;letter-spacing:0.1px">3000</div>
<div class="t" style="left:354.5px;top:91px;font-size:10.3px;color:#b9b9b9;letter-spacing:0.1px">3200</div>
<div class="t" style="left:404.5px;top:91px;font-size:10.3px;color:#b9b9b9;letter-spacing:0.1px">3400</div>
<div class="t" style="left:454.5px;top:91px;font-size:10.3px;color:#b9b9b9;letter-spacing:0.1px">3600</div>
<div class="t" style="left:504.5px;top:91px;font-size:10.3px;color:#b9b9b9;letter-spacing:0.1px">3800</div>
<div class="t" style="left:554.5px;top:91px;font-size:10.3px;color:#b9b9b9;letter-spacing:0.1px">4000</div>
<div class="t" style="left:604.5px;top:91px;font-size:10.3px;color:#b9b9b9;letter-spacing:0.1px">4200</div>
<div class="t" style="left:654.5px;top:91px;font-size:10.3px;color:#b9b9b9;letter-spacing:0.1px">4400</div>
<div class="t" style="left:704.5px;top:91px;font-size:10.3px;color:#b9b9b9;letter-spacing:0.1px">4600</div>
<div class="t" style="left:754.5px;top:91px;font-size:10.3px;color:#b9b9b9;letter-spacing:0.1px">4800</div>
<div class="t" style="left:804.5px;top:91px;font-size:10.3px;color:#b9b9b9;letter-spacing:0.1px">5000</div>
<div class="t" style="left:854.5px;top:91px;font-size:10.3px;color:#b9b9b9;letter-spacing:0.1px">5200</div>
<div class="t" style="left:904.5px;top:91px;font-size:10.3px;color:#b9b9b9;letter-spacing:0.1px">5400</div>
<div class="t" style="left:954.5px;top:91px;font-size:10.3px;color:#b9b9b9;letter-spacing:0.1px">5600</div>
<div class="t" style="left:1004.5px;top:91px;font-size:10.3px;color:#b9b9b9;letter-spacing:0.1px">5800</div>
<div class="t" style="left:1054.5px;top:91px;font-size:10.3px;color:#b9b9b9;letter-spacing:0.1px">6000</div>
<div class="t" style="left:1104.5px;top:91px;font-size:10.3px;color:#b9b9b9;letter-spacing:0.1px">6200</div>
<div class="t" style="left:1154.5px;top:91px;font-size:10.3px;color:#b9b9b9;letter-spacing:0.1px">6400</div>
<div class="t" style="left:1204.5px;top:91px;font-size:10.3px;color:#b9b9b9;letter-spacing:0.1px">6600</div>
<div class="t" style="left:1254.5px;top:91px;font-size:10.3px;color:#b9b9b9;letter-spacing:0.1px">6800</div>
<div class="t" style="left:1304.5px;top:91px;font-size:10.3px;color:#b9b9b9;letter-spacing:0.1px">7000</div>
<div class="t" style="left:1354.5px;top:91px;font-size:10.3px;color:#b9b9b9;letter-spacing:0.1px">7200</div>
<div class="t" style="left:1404.5px;top:91px;font-size:10.3px;color:#b9b9b9;letter-spacing:0.1px">7400</div>
<div class="t" style="left:1454.5px;top:91px;font-size:10.3px;color:#b9b9b9;letter-spacing:0.1px">7600</div>
<div class="t" style="left:1504.5px;top:91px;font-size:10.3px;color:#b9b9b9;letter-spacing:0.1px">7800</div>
<div class="t" style="left:1554.5px;top:91px;font-size:10.3px;color:#b9b9b9;letter-spacing:0.1px">8000</div>
<div class="t" style="left:1604.5px;top:91px;font-size:10.3px;color:#b9b9b9;letter-spacing:0.1px">8200</div>
<div class="t" style="left:1654.5px;top:91px;font-size:10.3px;color:#b9b9b9;letter-spacing:0.1px">8400</div>
<div class="t" style="left:1704.5px;top:91px;font-size:10.3px;color:#b9b9b9;letter-spacing:0.1px">8600</div>
<div class="a" style="left:42px;top:85px;width:17px;height:17px;background:#4c4c4c;"></div>
<svg style="left:42px;top:85px" width="17" height="17" viewBox="0 0 17 17"><path d="M12.5 0 V16 M0 12.5 H16" stroke="#8a8a8a" stroke-width="1" stroke-dasharray="1 1" fill="none"/></svg>
<div class="t" style="left:42px;top:117.0px;font-size:10.3px;color:#b9b9b9;width:9px;text-align:center">0</div>
<div class="t" style="left:42px;top:167.0px;font-size:10.3px;color:#b9b9b9;width:9px;text-align:center">2</div>
<div class="t" style="left:42px;top:177.2px;font-size:10.3px;color:#b9b9b9;width:9px;text-align:center">0</div>
<div class="t" style="left:42px;top:187.4px;font-size:10.3px;color:#b9b9b9;width:9px;text-align:center">0</div>
<div class="t" style="left:42px;top:217.0px;font-size:10.3px;color:#b9b9b9;width:9px;text-align:center">4</div>
<div class="t" style="left:42px;top:227.2px;font-size:10.3px;color:#b9b9b9;width:9px;text-align:center">0</div>
<div class="t" style="left:42px;top:237.4px;font-size:10.3px;color:#b9b9b9;width:9px;text-align:center">0</div>
<div class="t" style="left:42px;top:267.0px;font-size:10.3px;color:#b9b9b9;width:9px;text-align:center">6</div>
<div class="t" style="left:42px;top:277.2px;font-size:10.3px;color:#b9b9b9;width:9px;text-align:center">0</div>
<div class="t" style="left:42px;top:287.4px;font-size:10.3px;color:#b9b9b9;width:9px;text-align:center">0</div>
<div class="t" style="left:42px;top:317.0px;font-size:10.3px;color:#b9b9b9;width:9px;text-align:center">8</div>
<div class="t" style="left:42px;top:327.2px;font-size:10.3px;color:#b9b9b9;width:9px;text-align:center">0</div>
<div class="t" style="left:42px;top:337.4px;font-size:10.3px;color:#b9b9b9;width:9px;text-align:center">0</div>
<div class="t" style="left:42px;top:367.0px;font-size:10.3px;color:#b9b9b9;width:9px;text-align:center">1</div>
<div class="t" style="left:42px;top:377.2px;font-size:10.3px;color:#b9b9b9;width:9px;text-align:center">0</div>
<div class="t" style="left:42px;top:387.4px;font-size:10.3px;color:#b9b9b9;width:9px;text-align:center">0</div>
<div class="t" style="left:42px;top:397.6px;font-size:10.3px;color:#b9b9b9;width:9px;text-align:center">0</div>
<div class="t" style="left:42px;top:417.0px;font-size:10.3px;color:#b9b9b9;width:9px;text-align:center">1</div>
<div class="t" style="left:42px;top:427.2px;font-size:10.3px;color:#b9b9b9;width:9px;text-align:center">2</div>
<div class="t" style="left:42px;top:437.4px;font-size:10.3px;color:#b9b9b9;width:9px;text-align:center">0</div>
<div class="t" style="left:42px;top:447.6px;font-size:10.3px;color:#b9b9b9;width:9px;text-align:center">0</div>
<div class="t" style="left:42px;top:467.0px;font-size:10.3px;color:#b9b9b9;width:9px;text-align:center">1</div>
<div class="t" style="left:42px;top:477.2px;font-size:10.3px;color:#b9b9b9;width:9px;text-align:center">4</div>
<div class="t" style="left:42px;top:487.4px;font-size:10.3px;color:#b9b9b9;width:9px;text-align:center">0</div>
<div class="t" style="left:42px;top:497.6px;font-size:10.3px;color:#b9b9b9;width:9px;text-align:center">0</div>
<div class="t" style="left:42px;top:517.0px;font-size:10.3px;color:#b9b9b9;width:9px;text-align:center">1</div>
<div class="t" style="left:42px;top:527.2px;font-size:10.3px;color:#b9b9b9;width:9px;text-align:center">6</div>
<div class="t" style="left:42px;top:537.4px;font-size:10.3px;color:#b9b9b9;width:9px;text-align:center">0</div>
<div class="t" style="left:42px;top:547.6px;font-size:10.3px;color:#b9b9b9;width:9px;text-align:center">0</div>
<div class="t" style="left:42px;top:567.0px;font-size:10.3px;color:#b9b9b9;width:9px;text-align:center">1</div>
<div class="t" style="left:42px;top:577.2px;font-size:10.3px;color:#b9b9b9;width:9px;text-align:center">8</div>
<div class="t" style="left:42px;top:587.4px;font-size:10.3px;color:#b9b9b9;width:9px;text-align:center">0</div>
<div class="t" style="left:42px;top:597.6px;font-size:10.3px;color:#b9b9b9;width:9px;text-align:center">0</div>
<div class="t" style="left:42px;top:617.0px;font-size:10.3px;color:#b9b9b9;width:9px;text-align:center">2</div>
<div class="t" style="left:42px;top:627.2px;font-size:10.3px;color:#b9b9b9;width:9px;text-align:center">0</div>
<div class="t" style="left:42px;top:637.4px;font-size:10.3px;color:#b9b9b9;width:9px;text-align:center">0</div>
<div class="t" style="left:42px;top:647.6px;font-size:10.3px;color:#b9b9b9;width:9px;text-align:center">0</div>
<div class="t" style="left:42px;top:667.0px;font-size:10.3px;color:#b9b9b9;width:9px;text-align:center">2</div>
<div class="t" style="left:42px;top:677.2px;font-size:10.3px;color:#b9b9b9;width:9px;text-align:center">2</div>
<div class="t" style="left:42px;top:687.4px;font-size:10.3px;color:#b9b9b9;width:9px;text-align:center">0</div>
<div class="t" style="left:42px;top:697.6px;font-size:10.3px;color:#b9b9b9;width:9px;text-align:center">0</div>
<div class="t" style="left:42px;top:717.0px;font-size:10.3px;color:#b9b9b9;width:9px;text-align:center">2</div>
<div class="t" style="left:42px;top:727.2px;font-size:10.3px;color:#b9b9b9;width:9px;text-align:center">4</div>
<div class="t" style="left:42px;top:737.4px;font-size:10.3px;color:#b9b9b9;width:9px;text-align:center">0</div>
<div class="t" style="left:42px;top:747.6px;font-size:10.3px;color:#b9b9b9;width:9px;text-align:center">0</div>
<div class="t" style="left:42px;top:767.0px;font-size:10.3px;color:#b9b9b9;width:9px;text-align:center">2</div>
<div class="t" style="left:42px;top:777.2px;font-size:10.3px;color:#b9b9b9;width:9px;text-align:center">6</div>
<div class="t" style="left:42px;top:787.4px;font-size:10.3px;color:#b9b9b9;width:9px;text-align:center">0</div>
<div class="t" style="left:42px;top:797.6px;font-size:10.3px;color:#b9b9b9;width:9px;text-align:center">0</div>
<div class="t" style="left:42px;top:817.0px;font-size:10.3px;color:#b9b9b9;width:9px;text-align:center">2</div>
<div class="t" style="left:42px;top:827.2px;font-size:10.3px;color:#b9b9b9;width:9px;text-align:center">8</div>
<div class="t" style="left:42px;top:837.4px;font-size:10.3px;color:#b9b9b9;width:9px;text-align:center">0</div>
<div class="t" style="left:42px;top:847.6px;font-size:10.3px;color:#b9b9b9;width:9px;text-align:center">0</div>
<div class="t" style="left:42px;top:867.0px;font-size:10.3px;color:#b9b9b9;width:9px;text-align:center">3</div>
<div class="t" style="left:42px;top:877.2px;font-size:10.3px;color:#b9b9b9;width:9px;text-align:center">0</div>
<div class="t" style="left:42px;top:887.4px;font-size:10.3px;color:#b9b9b9;width:9px;text-align:center">0</div>
<div class="t" style="left:42px;top:897.6px;font-size:10.3px;color:#b9b9b9;width:9px;text-align:center">0</div>
<div class="t" style="left:42px;top:917.0px;font-size:10.3px;color:#b9b9b9;width:9px;text-align:center">3</div>
<div class="t" style="left:42px;top:927.2px;font-size:10.3px;color:#b9b9b9;width:9px;text-align:center">2</div>
<div class="t" style="left:42px;top:937.4px;font-size:10.3px;color:#b9b9b9;width:9px;text-align:center">0</div>
<div class="t" style="left:42px;top:947.6px;font-size:10.3px;color:#b9b9b9;width:9px;text-align:center">0</div>
<div class="t" style="left:42px;top:967.0px;font-size:10.3px;color:#b9b9b9;width:9px;text-align:center">3</div>
<div class="t" style="left:42px;top:977.2px;font-size:10.3px;color:#b9b9b9;width:9px;text-align:center">4</div>
<div class="t" style="left:42px;top:987.4px;font-size:10.3px;color:#b9b9b9;width:9px;text-align:center">0</div>
<div class="t" style="left:42px;top:997.6px;font-size:10.3px;color:#b9b9b9;width:9px;text-align:center">0</div>
<div class="t" style="left:42px;top:1017.0px;font-size:10.3px;color:#b9b9b9;width:9px;text-align:center">3</div>
<div class="a" style="left:1753px;top:85px;width:16px;height:934px;background:#4a4a4a;"></div>
<div class="a" style="left:1752px;top:365px;width:1px;height:178px;background:#45546c;"></div>
<div class="a" style="left:1753px;top:85px;width:16px;height:17px;background:#535353;"></div>
<div class="a" style="left:1756px;top:377px;width:10px;height:337px;background:#6b6b6b;border-radius:5px"></div>
<div class="a" style="left:42px;top:1019px;width:1727px;height:16px;background:#4a4a4a;"></div>
<div class="a" style="left:42px;top:1019px;width:60px;height:16px;background:#424242;"></div>
<div class="a" style="left:102px;top:1019px;width:184px;height:16px;background:#535353;"></div>
<div class="a" style="left:1753px;top:1019px;width:16px;height:16px;background:#535353;"></div>
<div class="a" style="left:813px;top:1022px;width:424px;height:10px;background:#6b6b6b;border-radius:5px"></div>
<div class="t" style="left:61.5px;top:1022.5px;font-size:10.5px;color:#e0e0e0;">25%</div>
<div class="t" style="left:141.3px;top:1022.5px;font-size:10.5px;color:#e0e0e0;letter-spacing:0.03px">Doc: 108.5M/1.30G</div>
<svg style="left:274px;top:1021px" width="8" height="12" viewBox="0 0 8 12"><path d="M2 1.5 L5.5 6 L2 10.5" stroke="#d0d0d0" stroke-width="1" fill="none"/></svg>
<div class="a" style="left:0px;top:56px;width:39px;height:979px;background:#535353;"></div>
<div class="a" style="left:0px;top:56px;width:39px;height:11px;background:#424242;"></div>
<div class="a" style="left:39px;top:56px;width:3px;height:979px;background:#3a3a3a;"></div>
<div class="a" style="left:40px;top:56px;width:1px;height:979px;background:#474747;"></div>
<svg style="left:0;top:0" width="44" height="1037" viewBox="0 0 44 1037"><path d="M7 59.2 L9 61.4 L7 63.6 M10.6 59.2 L12.6 61.4 L10.6 63.6" stroke="#c4c4c4" stroke-width="1" fill="none"/><rect x="11" y="71" width="1" height="4" fill="#6c6c6c"/><rect x="13" y="71" width="1" height="4" fill="#6c6c6c"/><rect x="15" y="71" width="1" height="4" fill="#6c6c6c"/><rect x="17" y="71" width="1" height="4" fill="#6c6c6c"/><rect x="19" y="71" width="1" height="4" fill="#6c6c6c"/><rect x="21" y="71" width="1" height="4" fill="#6c6c6c"/><rect x="23" y="71" width="1" height="4" fill="#6c6c6c"/><rect x="25" y="71" width="1" height="4" fill="#6c6c6c"/><rect x="27" y="71" width="1" height="4" fill="#6c6c6c"/><rect x="29" y="71" width="1" height="4" fill="#6c6c6c"/><rect x="5.5" y="85.5" width="31" height="24" rx="3" fill="#383838" stroke="#626262" stroke-width="1"/><path d="M33.6 104.0 V107.3 H30.3Z" fill="#c9c9c9"/><path d="M33.6 129.5 V132.8 H30.3Z" fill="#c9c9c9"/><path d="M33.6 155.0 V158.3 H30.3Z" fill="#c9c9c9"/><path d="M33.6 181.0 V184.3 H30.3Z" fill="#c9c9c9"/><path d="M33.6 207.0 V210.3 H30.3Z" fill="#c9c9c9"/><path d="M33.6 233.5 V236.8 H30.3Z" fill="#c9c9c9"/><path d="M33.6 259.5 V262.8 H30.3Z" fill="#c9c9c9"/><path d="M33.6 285.5 V288.8 H30.3Z" fill="#c9c9c9"/><path d="M33.6 311.5 V314.8 H30.3Z" fill="#c9c9c9"/><path d="M33.6 337.5 V340.8 H30.3Z" fill="#c9c9c9"/><path d="M33.6 363.5 V366.8 H30.3Z" fill="#c9c9c9"/><path d="M33.6 389.5 V392.8 H30.3Z" fill="#c9c9c9"/><path d="M33.6 415.5 V418.8 H30.3Z" fill="#c9c9c9"/><path d="M33.6 441.5 V444.8 H30.3Z" fill="#c9c9c9"/><path d="M33.6 467.5 V470.8 H30.3Z" fill="#c9c9c9"/><path d="M33.6 493.5 V496.8 H30.3Z" fill="#c9c9c9"/><path d="M33.6 519.5 V522.8 H30.3Z" fill="#c9c9c9"/><path d="M33.6 545.5 V548.8 H30.3Z" fill="#c9c9c9"/><path d="M33.6 571.5 V574.8 H30.3Z" fill="#c9c9c9"/><path d="M33.6 623.5 V626.8 H30.3Z" fill="#c9c9c9"/><g transform="translate(20.5,97.7)"><path d="M-6.4 0H6.4M0 -6.4V6.4" stroke="#e8e8e8" stroke-width="1.4" fill="none"/><path d="M7.4 0.0L4.7 -2.7L4.7 2.7ZM-7.4 0.0L-4.7 -2.7L-4.7 2.7ZM0.0 7.4L-2.7 4.7L2.7 4.7ZM0.0 -7.4L-2.7 -4.7L2.7 -4.7Z" fill="#e8e8e8"/></g><g transform="translate(20.5,122.6)"><rect x="-7.3" y="-6" width="16" height="12" fill="none" stroke="#dcdcdc" stroke-width="1.3" stroke-dasharray="3.2 1.4"/></g><g transform="translate(20.5,148.5)"><path d="M-6.8 -5.5 L2.7 -2.1 L8.2 -7.7 L7.3 1.4 L-0.4 3.6 Z" fill="none" stroke="#dcdcdc" stroke-width="1.2" stroke-linejoin="round"/><circle cx="-0.8" cy="3.4" r="1.6" fill="#535353" stroke="#dcdcdc" stroke-width="1"/><path d="M-1.8 4.6 L-5.8 6.2 M-0.4 5 L-1.4 8.2" stroke="#dcdcdc" stroke-width="1.1" fill="none"/></g><g transform="translate(20.5,174.5)"><path d="M-5.4 6.6 L3.4 -1.4" stroke="#dcdcdc" stroke-width="3.2" stroke-linecap="round"/><path d="M1.8 -0.2 L2.9 -1.1" stroke="#535353" stroke-width="1.2" /><path d="M-0.8 -7.6 V-4.4 M-2.4 -6 H0.8 M8 -8 V-4.4 M6.2 -6.2 H9.8 M8.8 -1.8 V1.4 M7.2 -0.2 H10.4" stroke="#dcdcdc" stroke-width="1" fill="none"/></g><g transform="translate(20.5,200.5)"><path d="M-4.3 -8.3 V4 H8.8 M-9 -5 H4.2 V8" fill="none" stroke="#dcdcdc" stroke-width="2"/><rect x="9.6" y="3" width="1.6" height="2" fill="#dcdcdc"/></g><g transform="translate(20.5,227)"><path d="M-6.6 6.8 L-7 5.2 L1.2 -3 L3.2 -1 L-5 7.2 Z" fill="none" stroke="#dcdcdc" stroke-width="1.2" stroke-linejoin="round"/><path d="M0 -4.6 L4.8 0.2 L6 -1 L4.6 -2.4 L7.4 -5.2 A2 2 0 0 0 4.6 -8 L1.8 -5.2 L0.6 -6.4Z" fill="#dcdcdc"/></g><g transform="translate(20.5,253)"><g transform="rotate(-38)"><rect x="-8.6" y="-3.4" width="17.2" height="6.8" rx="1.2" fill="#dcdcdc"/><rect x="-2.6" y="-2.6" width="5.2" height="5.2" fill="#535353"/><circle cx="-1.2" cy="-1.2" r="0.8" fill="#dcdcdc"/><circle cx="1.2" cy="-1.2" r="0.8" fill="#dcdcdc"/><circle cx="-1.2" cy="1.2" r="0.8" fill="#dcdcdc"/><circle cx="1.2" cy="1.2" r="0.8" fill="#dcdcdc"/></g><path d="M-7.6 -1.5 A4.6 4.6 0 0 1 0.5 -6.3" fill="none" stroke="#dcdcdc" stroke-width="1" stroke-dasharray="1 1.2"/></g><g transform="translate(20.5,279)"><path d="M-7 7.2 L-5.8 2.6 L4 -7.2 L7.2 -4 L-2.6 5.8 Z M-5.8 2.6 L-2.6 5.8" fill="none" stroke="#dcdcdc" stroke-width="1.2" stroke-linejoin="round"/></g><g transform="translate(20.5,305)"><circle cx="1" cy="-4.2" r="3.2" fill="#dcdcdc"/><path d="M-0.6 -2 H2.6 L3.2 2.6 H-1.2Z" fill="#dcdcdc"/><rect x="-5.4" y="2.2" width="12.8" height="3" rx="0.8" fill="#dcdcdc"/><rect x="-5.4" y="6.3" width="12.8" height="1.1" fill="#dcdcdc"/></g><g transform="translate(20.5,331)"><path d="M8 -6.8 L1 2.2 L-0.2 1.2 Z" fill="#dcdcdc"/><path d="M-0.8 1.6 C-3.6 1.4 -4.2 5.2 -6 7 C-2 7.4 1.2 5.6 0.8 2.8Z" fill="#dcdcdc"/><path d="M-2.4 -4.8 C0.4 -5.8 2.8 -5 3.6 -3.8" fill="none" stroke="#dcdcdc" stroke-width="1.1"/><path d="M-7.6 -3 L-2.6 -6.6 L-2 -2.2Z" fill="#dcdcdc"/><path d="M6.6 -1 A7 7 0 0 1 2.6 6.6" fill="none" stroke="#dcdcdc" stroke-width="1" stroke-dasharray="1 1.3"/></g><g transform="translate(20.5,357)"><path d="M-5.8 2.2 L2.8 -6.4 L8 -1.8 L-0.4 6.6 H-3.2 Z" fill="none" stroke="#dcdcdc" stroke-width="1.2" stroke-linejoin="round"/><path d="M-1.4 -2.2 L2.8 -6.4 L8 -1.8 L3.6 2.6 Z" fill="#dcdcdc"/><path d="M-0.4 6.8 H8.2" stroke="#dcdcdc" stroke-width="1.1"/></g><g transform="translate(20.5,383)"><path d="M-7.4 0.2 L-0.6 -6.2 L6.2 0.4 L-0.8 6.8 Z" fill="none" stroke="#dcdcdc" stroke-width="1.2" stroke-linejoin="round"/><path d="M-1.6 -8.4 C-3.6 -9 -4 -6 -2.6 -4.4 L1 -1.2" fill="none" stroke="#dcdcdc" stroke-width="1.1"/><circle cx="1.2" cy="-1.2" r="1" fill="#dcdcdc"/><path d="M1 -5.6 C5 -5 7.4 -2.6 8.2 0" fill="none" stroke="#dcdcdc" stroke-width="1.1"/><path d="M8.2 0.4 C6.2 3.2 6.6 5.2 8.2 5.2 C9.8 5.2 10.2 3.2 8.2 0.4Z" fill="#dcdcdc"/></g><g transform="translate(20.5,409)"><path d="M0 -7.6 C-2.4 -3.2 -5.2 -0.6 -5.2 2.4 A5.2 5.2 0 0 0 5.2 2.4 C5.2 -0.6 2.4 -3.2 0 -7.6Z" fill="#dcdcdc"/></g><g transform="translate(20.5,435)"><circle cx="2.6" cy="-1.8" r="5.4" fill="#dcdcdc"/><path d="M-1.2 2 L-7 7.6" stroke="#dcdcdc" stroke-width="1.6" stroke-linecap="round"/></g><g transform="translate(20.5,461)"><path d="M-6.6 7.4 C-6.4 2 -4.6 -1.6 0.6 -4.4 L5.2 0.2 C3 5 -1 7 -6.6 7.4Z M-6.6 7.4 L-1.2 1.8" fill="none" stroke="#dcdcdc" stroke-width="1.2" stroke-linejoin="round"/><circle cx="-0.6" cy="1.2" r="1.3" fill="none" stroke="#dcdcdc" stroke-width="1"/><path d="M1.6 -5.4 L4.4 -8 L8.6 -3.6 L6.2 -0.8Z" fill="#dcdcdc"/></g><g transform="translate(20.5,513)"><path d="M-3.8 -8 L-3.8 5.6 L-0.8 2.8 L1.6 8 L4 6.8 L1.6 1.8 L5.8 1.6 Z" fill="#0a0a0a" stroke="#f0f0f0" stroke-width="1.1" stroke-linejoin="round"/></g><g transform="translate(20.5,538.2)"><rect x="-7.4" y="-6" width="15.8" height="12" fill="#6f6f6f" stroke="#dcdcdc" stroke-width="1.2"/></g><g transform="translate(20.5,565)"><path d="M-5.4 -0.6 C-6.6 -1.8 -7.8 -0.6 -6.8 0.8 L-3.6 5.8 C-2.4 7.6 -1 8 1.4 8 C4 8 5 6.4 5 4 V-1.6 C5 -3 3.4 -3 3.4 -1.6 V-3.6 C3.4 -5 1.8 -5 1.8 -3.6 V-4.6 C1.8 -6 0.2 -6 0.2 -4.6 V-3.6 C0.2 -5 -1.4 -5 -1.4 -3.6 V3 Z" fill="#dcdcdc"/><path d="M-1.4 -3 V2 M0.2 -4 V1 M1.8 -4 V1 M3.4 -3 V1.6" stroke="#535353" stroke-width="0.6"/><path d="M-3.6 -6.4 C-1 -9 3.6 -9 6 -6.6" fill="none" stroke="#dcdcdc" stroke-width="1.2"/><path d="M8.6 -4.6 L4.2 -5.2 L7.4 -8.6Z" fill="#dcdcdc"/><path d="M8.4 -3 L10.4 0.2 L6.2 6.4" fill="none" stroke="#dcdcdc" stroke-width="1.1"/></g><g transform="translate(20.5,591)"><circle cx="-1.4" cy="-1.6" r="5.7" fill="none" stroke="#dcdcdc" stroke-width="1.4"/><path d="M2.8 2.8 L7.8 7.6" stroke="#dcdcdc" stroke-width="1.9" stroke-linecap="round"/><path d="M-4.6 -2.4 A3.4 3.4 0 0 1 -1.8 -4.8" fill="none" stroke="#dcdcdc" stroke-width="0.9"/></g><g transform="translate(20.5,617.2)"><circle cx="-5.6" cy="0" r="1.9" fill="#dcdcdc"/><circle cx="0" cy="0" r="1.9" fill="#dcdcdc"/><circle cx="5.8" cy="0" r="1.9" fill="#dcdcdc"/></g><rect x="10.5" y="640.5" width="5.5" height="5.5" fill="#ececec"/><rect x="6.9" y="636.9" width="6.2" height="6.2" fill="#0a0a0a" stroke="#dcdcdc" stroke-width="0.9"/><path d="M25 638.6 H30.4 V644" fill="none" stroke="#dcdcdc" stroke-width="1.2"/><path d="M22.6 638.6 L25.8 636 V641.2Z M30.4 647 L27.8 643.6 H33Z" fill="#dcdcdc"/><rect x="15.8" y="662.2" width="18" height="18" fill="#000" stroke="#e6e6e6" stroke-width="1"/><rect x="5.3" y="651.8" width="19.2" height="19.2" fill="#fff" stroke="#3a3a3a" stroke-width="0.8"/><rect x="12.6" y="692.5" width="15.8" height="12" fill="none" stroke="#dcdcdc" stroke-width="1.1"/><circle cx="20.5" cy="698.5" r="3.6" fill="none" stroke="#dcdcdc" stroke-width="1" stroke-dasharray="1 1"/><rect x="12.6" y="723.2" width="10.6" height="8" fill="none" stroke="#dcdcdc" stroke-width="1.1"/><rect x="17.6" y="719.6" width="10.8" height="8" fill="#535353" stroke="#dcdcdc" stroke-width="1.1"/><path d="M33.6 732.0 V735.3 H30.3Z" fill="#c9c9c9"/></svg>
<div class="t" style="left:15.2px;top:477.6px;font-size:19.5px;color:#dcdcdc;font-family:'Liberation Serif',serif;font-weight:bold;width:14px;text-align:center">T</div>
<div class="a" style="left:1769px;top:56px;width:3px;height:979px;background:#3a3a3a;"></div>
<div class="a" style="left:1770px;top:56px;width:1px;height:979px;background:#474747;"></div>
<div class="a" style="left:1772px;top:56px;width:41px;height:979px;background:#535353;"></div>
<div class="a" style="left:1772px;top:56px;width:41px;height:11px;background:#424242;"></div>
<svg style="left:0;top:0" width="1813" height="1037" viewBox="0 0 1813 1037"><path d="M1799 59.2 L1797 61.4 L1799 63.6 M1802.6 59.2 L1800.6 61.4 L1802.6 63.6" stroke="#c4c4c4" stroke-width="1" fill="none"/><rect x="1772" y="107.5" width="41" height="1.3" fill="#3c3c3c"/><rect x="1772" y="176.5" width="41" height="1.3" fill="#3c3c3c"/><rect x="1772" y="245.5" width="41" height="1.3" fill="#3c3c3c"/><rect x="1772" y="314.5" width="41" height="1.3" fill="#3c3c3c"/><rect x="1772" y="355.5" width="41" height="1.3" fill="#3c3c3c"/><rect x="1772" y="397" width="41" height="1.3" fill="#3c3c3c"/><rect x="1781" y="71.5" width="1" height="4" fill="#6c6c6c"/><rect x="1783" y="71.5" width="1" height="4" fill="#6c6c6c"/><rect x="1785" y="71.5" width="1" height="4" fill="#6c6c6c"/><rect x="1787" y="71.5" width="1" height="4" fill="#6c6c6c"/><rect x="1789" y="71.5" width="1" height="4" fill="#6c6c6c"/><rect x="1791" y="71.5" width="1" height="4" fill="#6c6c6c"/><rect x="1793" y="71.5" width="1" height="4" fill="#6c6c6c"/><rect x="1795" y="71.5" width="1" height="4" fill="#6c6c6c"/><rect x="1797" y="71.5" width="1" height="4" fill="#6c6c6c"/><rect x="1799" y="71.5" width="1" height="4" fill="#6c6c6c"/><rect x="1781" y="113.5" width="1" height="4" fill="#6c6c6c"/><rect x="1783" y="113.5" width="1" height="4" fill="#6c6c6c"/><rect x="1785" y="113.5" width="1" height="4" fill="#6c6c6c"/><rect x="1787" y="113.5" width="1" height="4" fill="#6c6c6c"/><rect x="1789" y="113.5" width="1" height="4" fill="#6c6c6c"/><rect x="1791" y="113.5" width="1" height="4" fill="#6c6c6c"/><rect x="1793" y="113.5" width="1" height="4" fill="#6c6c6c"/><rect x="1795" y="113.5" width="1" height="4" fill="#6c6c6c"/><rect x="1797" y="113.5" width="1" height="4" fill="#6c6c6c"/><rect x="1799" y="113.5" width="1" height="4" fill="#6c6c6c"/><rect x="1781" y="182.5" width="1" height="4" fill="#6c6c6c"/><rect x="1783" y="182.5" width="1" height="4" fill="#6c6c6c"/><rect x="1785" y="182.5" width="1" height="4" fill="#6c6c6c"/><rect x="1787" y="182.5" width="1" height="4" fill="#6c6c6c"/><rect x="1789" y="182.5" width="1" height="4" fill="#6c6c6c"/><rect x="1791" y="182.5" width="1" height="4" fill="#6c6c6c"/><rect x="1793" y="182.5" width="1" height="4" fill="#6c6c6c"/><rect x="1795" y="182.5" width="1" height="4" fill="#6c6c6c"/><rect x="1797" y="182.5" width="1" height="4" fill="#6c6c6c"/><rect x="1799" y="182.5" width="1" height="4" fill="#6c6c6c"/><rect x="1781" y="251.5" width="1" height="4" fill="#6c6c6c"/><rect x="1783" y="251.5" width="1" height="4" fill="#6c6c6c"/><rect x="1785" y="251.5" width="1" height="4" fill="#6c6c6c"/><rect x="1787" y="251.5" width="1" height="4" fill="#6c6c6c"/><rect x="1789" y="251.5" width="1" height="4" fill="#6c6c6c"/><rect x="1791" y="251.5" width="1" height="4" fill="#6c6c6c"/><rect x="1793" y="251.5" width="1" height="4" fill="#6c6c6c"/><rect x="1795" y="251.5" width="1" height="4" fill="#6c6c6c"/><rect x="1797" y="251.5" width="1" height="4" fill="#6c6c6c"/><rect x="1799" y="251.5" width="1" height="4" fill="#6c6c6c"/><rect x="1781" y="320.5" width="1" height="4" fill="#6c6c6c"/><rect x="1783" y="320.5" width="1" height="4" fill="#6c6c6c"/><rect x="1785" y="320.5" width="1" height="4" fill="#6c6c6c"/><rect x="1787" y="320.5" width="1" height="4" fill="#6c6c6c"/><rect x="1789" y="320.5" width="1" height="4" fill="#6c6c6c"/><rect x="1791" y="320.5" width="1" height="4" fill="#6c6c6c"/><rect x="1793" y="320.5" width="1" height="4" fill="#6c6c6c"/><rect x="1795" y="320.5" width="1" height="4" fill="#6c6c6c"/><rect x="1797" y="320.5" width="1" height="4" fill="#6c6c6c"/><rect x="1799" y="320.5" width="1" height="4" fill="#6c6c6c"/><rect x="1781" y="361.5" width="1" height="4" fill="#6c6c6c"/><rect x="1783" y="361.5" width="1" height="4" fill="#6c6c6c"/><rect x="1785" y="361.5" width="1" height="4" fill="#6c6c6c"/><rect x="1787" y="361.5" width="1" height="4" fill="#6c6c6c"/><rect x="1789" y="361.5" width="1" height="4" fill="#6c6c6c"/><rect x="1791" y="361.5" width="1" height="4" fill="#6c6c6c"/><rect x="1793" y="361.5" width="1" height="4" fill="#6c6c6c"/><rect x="1795" y="361.5" width="1" height="4" fill="#6c6c6c"/><rect x="1797" y="361.5" width="1" height="4" fill="#6c6c6c"/><rect x="1799" y="361.5" width="1" height="4" fill="#6c6c6c"/><rect x="1785.5" y="84" width="4.2" height="3.6" fill="none" stroke="#dcdcdc" stroke-width="1"/><rect x="1785.5" y="89.8" width="4.2" height="3.6" fill="none" stroke="#dcdcdc" stroke-width="1"/><rect x="1785" y="95.2" width="5.2" height="4.4" fill="#dcdcdc"/><path d="M1794.6 86 C1799.6 87.8 1800 94.6 1795.4 98.2 C1798 94.2 1797.6 90 1794.4 87.6Z" fill="#dcdcdc" stroke="#dcdcdc" stroke-width="0.8"/><path d="M1792.6 88.8 L1793.8 84 L1797.6 86.4Z" fill="#dcdcdc"/><rect x="1781" y="123.60000000000001" width="1.4" height="1.3" fill="#dcdcdc"/><rect x="1783.4" y="123.60000000000001" width="4.4" height="1.3" fill="#dcdcdc"/><rect x="1781" y="127.0" width="1.4" height="1.3" fill="#dcdcdc"/><rect x="1783.4" y="127.0" width="4.4" height="1.3" fill="#dcdcdc"/><rect x="1781" y="130.4" width="1.4" height="1.3" fill="#dcdcdc"/><rect x="1783.4" y="130.4" width="4.4" height="1.3" fill="#dcdcdc"/><path d="M1801.2 126.4 L1793.4 135 L1791.8 133.6 Z" fill="#dcdcdc" stroke="#dcdcdc" stroke-width="1"/><path d="M1791.6 134.2 C1788 134 1787.6 138 1785 139.8 C1789.6 140.4 1793.6 138.6 1793 135.4Z" fill="#dcdcdc"/><path d="M1781.4 154.6 C1784 152.2 1788 152.8 1788.4 155.4 C1788 158 1784 158.6 1781.4 156.2Z" fill="#dcdcdc"/><rect x="1788" y="154.6" width="13" height="1.6" fill="#dcdcdc"/><rect x="1783.6" y="163" width="10" height="1.6" fill="#dcdcdc"/><path d="M1793 163.8 L1799.4 158.4 C1802 161.4 1802 166.4 1799.4 169.2 Z" fill="#dcdcdc"/><rect x="1798" y="194.2" width="1" height="14.2" fill="#dcdcdc"/><rect x="1785.1999999999998" y="273.20000000000005" width="5" height="5" fill="#dcdcdc"/><rect x="1782.6" y="270.6" width="5" height="5" fill="#535353" stroke="#dcdcdc" stroke-width="1"/><rect x="1786.0" y="301.6" width="5" height="5" fill="#dcdcdc"/><rect x="1783.4" y="299" width="5" height="5" fill="#535353" stroke="#dcdcdc" stroke-width="1"/><g transform="rotate(-14 1790 339)"><ellipse cx="1791" cy="339" rx="9.2" ry="4.4" fill="#a6a6a6"/><path d="M1782.4 339 L1779.6 334.4 L1784.4 337 M1782.4 339.4 L1780 343.6 L1785 341.4" fill="#a6a6a6" stroke="#a6a6a6" stroke-width="0.8"/><ellipse cx="1791.5" cy="339" rx="2" ry="6.2" fill="none" stroke="#8c8c8c" stroke-width="0.7" transform="rotate(30 1791.5 339)"/></g><path d="M1792 371.4 L1800 376.6 L1792 381.8 L1784 376.6Z" fill="#dcdcdc"/><path d="M1784 381.6 L1786.6 380 L1792 383.4 L1797.4 380 L1800 381.6 L1792 387Z" fill="#dcdcdc"/></svg>
<div class="t" style="left:1784.6px;top:193.4px;font-size:17.5px;color:#dcdcdc;font-family:'Liberation Sans',sans-serif;">A</div>
<div class="t" style="left:1785.4px;top:220.2px;font-size:19px;color:#dcdcdc;font-family:'Liberation Sans',sans-serif;font-weight:bold">¶</div>
<div class="t" style="left:1787.6px;top:260.8px;font-size:16px;color:#dcdcdc;font-family:'Liberation Sans',sans-serif;font-weight:bold">¶</div>
<div class="t" style="left:1789.8px;top:289px;font-size:15.5px;color:#dcdcdc;font-family:'Liberation Sans',sans-serif;">A</div>
</div></div></body></html>
